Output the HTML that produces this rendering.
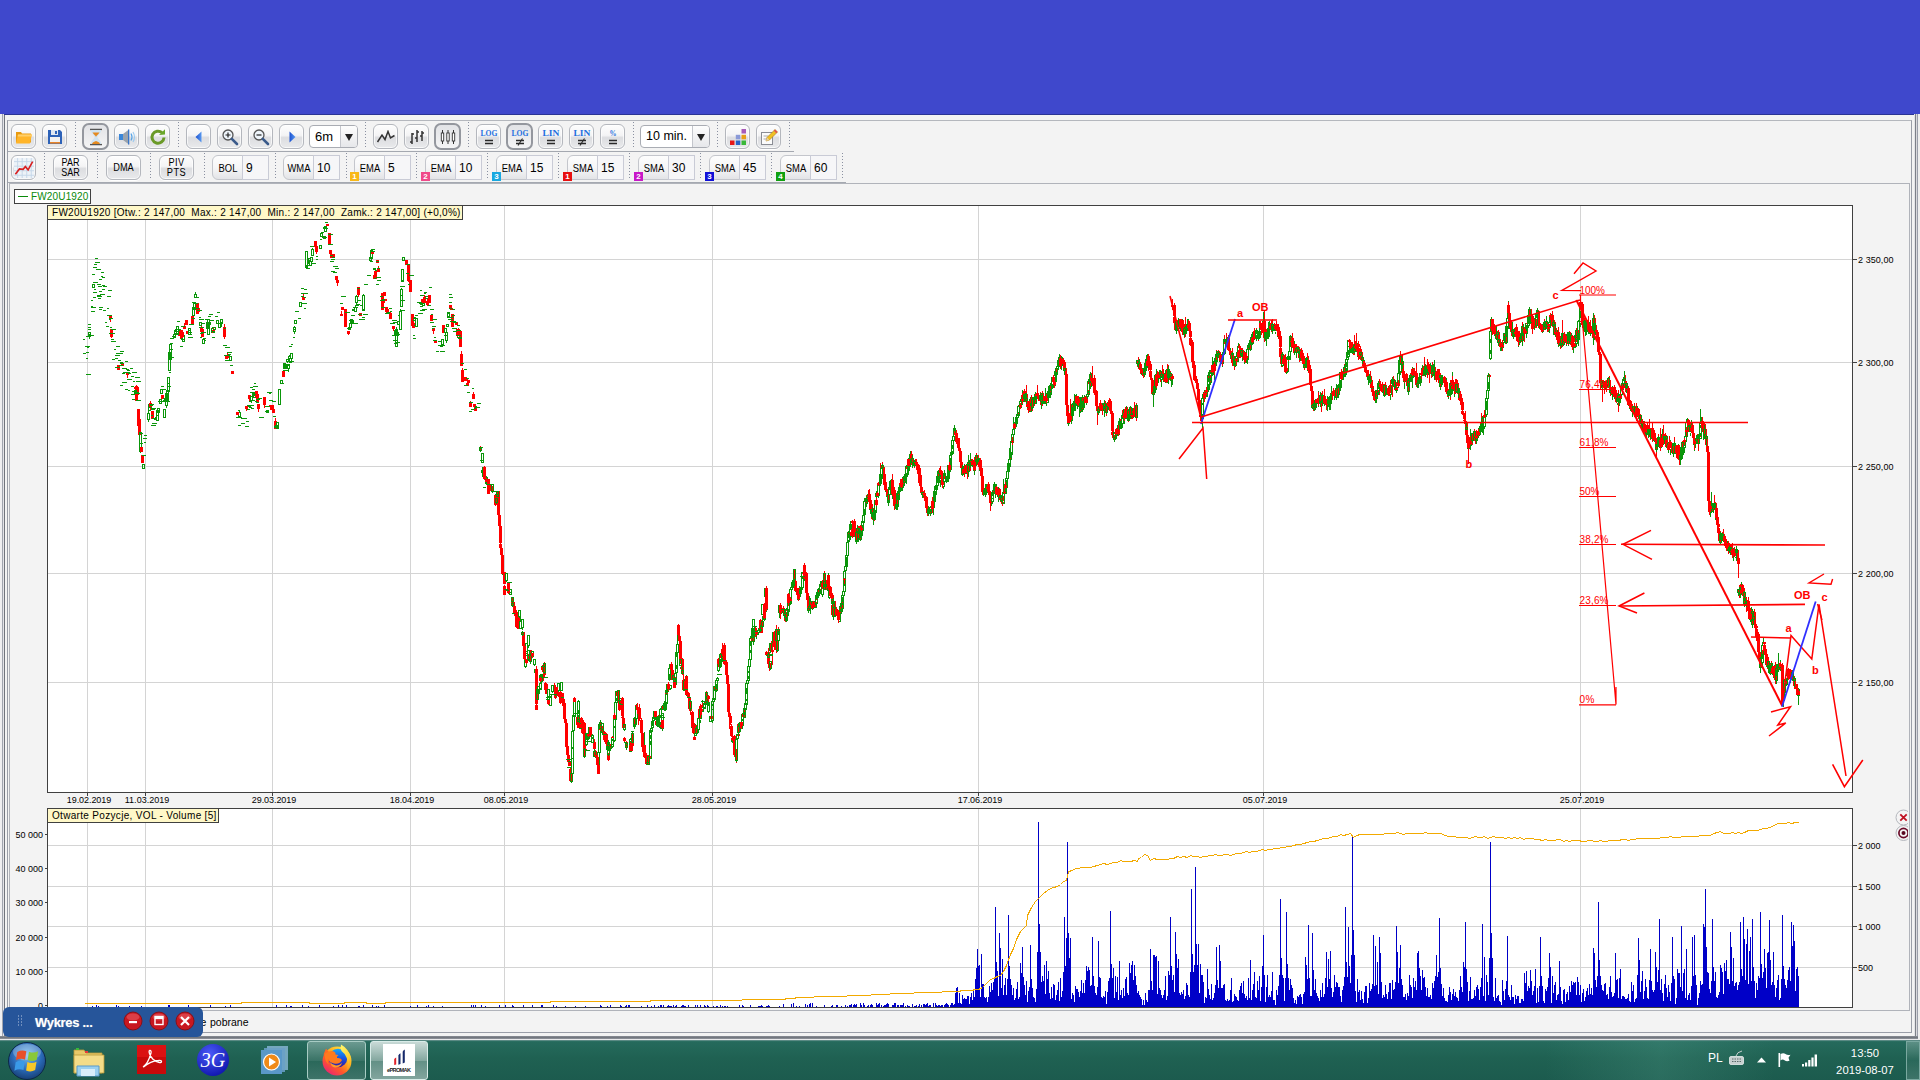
<!DOCTYPE html>
<html><head><meta charset="utf-8"><title>Wykres</title><style>
*{box-sizing:border-box;margin:0;padding:0}
html,body{width:1920px;height:1080px;overflow:hidden;background:#f3f3f3;font-family:"Liberation Sans",sans-serif;}
#root{position:relative;width:1920px;height:1080px;overflow:hidden;background:#f3f3f3}
.abs{position:absolute}
.top{left:0;top:0;width:1920px;height:114px;background:#3f48cc}
.chart{position:absolute;left:0;top:0}
.btn{position:absolute;height:25px;border:1px solid #b4b7bd;border-radius:6px;background:linear-gradient(#fdfdfd 0%,#f4f4f5 45%,#dcdde0 55%,#e9eaec 100%);box-shadow:0 1px 0 #fff, inset 0 0 0 1px rgba(255,255,255,.7)}
.btn.p{border:2px solid #94979e;background:linear-gradient(#e2e3e6,#f4f4f5);border-radius:7px;box-shadow:none}
.btn svg{position:absolute;left:50%;top:50%;transform:translate(-50%,-50%)}
.sep{position:absolute;width:1px;background:repeating-linear-gradient(#8a90a0 0,#8a90a0 1px,transparent 1px,transparent 3px)}
.tl{position:absolute;font-size:10px;line-height:10px;color:#000;text-align:center;white-space:nowrap}
.ind{position:absolute;height:25px;border:1px solid #c4c6cc;border-radius:6px 0 0 6px;background:linear-gradient(#fdfdfd 0%,#f6f6f7 50%,#e3e4e7 100%)}
.val{position:absolute;height:25px;border:1px solid #c9cbd6;border-left:1px solid #c9cbd6;background:#f6f6f8;font-size:12px;line-height:24.500px;padding-left:3px;color:#000}
.badge{position:absolute;width:9px;height:9px;color:#fff;font-size:8px;line-height:9px;text-align:center;font-weight:bold}
.combo{position:absolute;height:23px;border:1px solid #a9acb3;border-radius:4px;background:#fff;font-size:13px;line-height:21px;padding-left:5px;color:#000}
.combo i{position:absolute;right:0;top:0;bottom:0;width:17px;border-left:1px solid #c4c6cc;background:linear-gradient(#fdfdfd,#e6e7ea);border-radius:0 3px 3px 0}
.combo i:after{content:"";position:absolute;left:4px;top:8px;border:4px solid transparent;border-top:7px solid #222;border-bottom:0}
</style></head><body><div id="root"><div class="abs top"></div>
<div class="abs" style="left:7px;top:120px;width:1905px;height:913px;border:1px solid #9a9ea8;border-top-color:#b4b7bd"></div>
<div class="abs" style="left:8px;top:151px;width:786px;height:1px;background:#a4a8b0"></div>
<div class="abs" style="left:8px;top:182px;width:838px;height:1px;background:#a4a8b0"></div>
<div class="abs" style="left:9px;top:183px;width:1901px;height:828px;border:1px solid #b0b3ba"></div>
<div class="btn" style="left:11px;top:124px;width:25px;height:25px"><svg width="18" height="16" viewBox="0 0 18 16"><path d="M1 3h5l1 1.5h9v9H1z" fill="#e89a10"/><path d="M3 5.5h14l-2.2 9H1z" fill="#ffb52a"/><path d="M3 5.5h14l-.5 2H2.6z" fill="#ffcf6a"/></svg></div>
<div class="btn" style="left:42px;top:124px;width:25px;height:25px"><svg width="16" height="16" viewBox="0 0 16 16"><path d="M1 1h12l2 2v12H1z" fill="#2d62b8"/><rect x="4" y="1" width="7" height="5" fill="#dfe7f2"/><rect x="8" y="2" width="2" height="3" fill="#2d62b8"/><rect x="3" y="8" width="10" height="6" fill="#f1f1f1"/><rect x="3" y="13" width="10" height="1.6" fill="#e8852a"/></svg></div>
<div class="sep" style="left:75px;top:122px;height:27px"></div>
<div class="btn p" style="left:82px;top:123px;width:27px;height:27px"><svg width="14" height="17" viewBox="0 0 14 17"><rect x="1" y="0" width="12" height="1.6" fill="#555"/><rect x="1" y="15.4" width="12" height="1.6" fill="#555"/><path d="M2 1.6h10c0 4-3.5 5-3.5 6.9s3.5 2.9 3.5 6.9H2c0-4 3.5-5 3.5-6.9S2 5.600 2 1.600z" fill="#cfe3f2"/><path d="M3.500 4h7c-.8 2-3.500 3-3.500 4.500C7 7 4.300 6 3.500 4z" fill="#e58a20"/><path d="M3 15.400c.5-2 2.500-2.400 4-3 1.500.6 3.500 1 4 3z" fill="#e58a20"/></svg></div>
<div class="btn" style="left:114px;top:124px;width:25px;height:25px"><svg width="18" height="17" viewBox="0 0 18 17"><rect x="1" y="5.500" width="4" height="6" fill="#3a86d8"/><path d="M5 5.500l6-4.500v15l-6-4.500z" fill="#9aa3ad"/><path d="M10 1l1.300 0v15H10z" fill="#3a76c8"/><path d="M13 5q2 3.500 0 7" stroke="#5aa6e8" stroke-width="1.200" fill="none"/><path d="M15 3.500q3 5 0 10" stroke="#9ccbf0" stroke-width="1.100" fill="none"/></svg></div>
<div class="btn" style="left:145px;top:124px;width:25px;height:25px"><svg width="17" height="17" viewBox="0 0 17 17"><path d="M12.500 4.200A6 6 0 1 0 14.500 9" stroke="#6a9a28" stroke-width="3" fill="none"/><path d="M9.500 6.500l6-.5V.8z" fill="#6aa82a"/></svg></div>
<div class="sep" style="left:178px;top:122px;height:27px"></div>
<div class="btn" style="left:186px;top:124px;width:25px;height:25px"><svg width="12" height="14" viewBox="0 0 12 14"><defs><linearGradient id="ar" x1="0" y1="0" x2="1" y2="0"><stop offset="0" stop-color="#1a50d0"/><stop offset="1" stop-color="#5a9af0"/></linearGradient></defs><path d="M8.500 1.500v11L2.500 7z" fill="url(#ar)"/></svg></div>
<div class="btn" style="left:217px;top:124px;width:25px;height:25px"><svg width="18" height="18" viewBox="0 0 18 18"><circle cx="7" cy="7" r="5" fill="#eef4fa" stroke="#555" stroke-width="1.300"/><path d="M10.800 10.800l5.200 5.200" stroke="#3a5a8a" stroke-width="2.600" stroke-linecap="round"/><path d="M4.500 7h5M7 4.500v5" stroke="#222" stroke-width="1.200"/></svg></div>
<div class="btn" style="left:248px;top:124px;width:25px;height:25px"><svg width="18" height="18" viewBox="0 0 18 18"><circle cx="7" cy="7" r="5" fill="#eef4fa" stroke="#555" stroke-width="1.300"/><path d="M10.800 10.800l5.200 5.200" stroke="#3a5a8a" stroke-width="2.600" stroke-linecap="round"/><path d="M4.500 7h5" stroke="#222" stroke-width="1.200"/></svg></div>
<div class="btn" style="left:279px;top:124px;width:25px;height:25px"><svg width="12" height="14" viewBox="0 0 12 14"><path d="M3.500 1.500v11L9.500 7z" fill="url(#ar)"/></svg></div>
<div class="combo" style="left:309px;top:125px;width:49px">6m<i></i></div>
<div class="sep" style="left:365px;top:122px;height:27px"></div>
<div class="btn" style="left:373px;top:124px;width:25px;height:25px"><svg width="19" height="14" viewBox="0 0 19 14"><path d="M1 12l4.500-7 3 4.500 3-8 2.500 6.500 4-2.500" stroke="#333" stroke-width="1.500" fill="none"/></svg></div>
<div class="btn" style="left:404px;top:124px;width:25px;height:25px"><svg width="16" height="16" viewBox="0 0 16 16"><path d="M3 4v11M8 1v12M13 2v10M1 13h2M3 5h2M6 9h2M8 3h2M11 7h2M13 4h2" stroke="#333" stroke-width="1.500" fill="none"/></svg></div>
<div class="btn p" style="left:434px;top:123px;width:27px;height:27px"><svg width="16" height="16" viewBox="0 0 16 16"><path d="M2.500 1v14M8 1v14M13.500 1v14" stroke="#333" stroke-width="1"/><rect x="1.300" y="4" width="2.400" height="8" fill="#fff" stroke="#333" stroke-width=".9"/><rect x="6.800" y="4" width="2.400" height="8" fill="#fff" stroke="#333" stroke-width=".9"/><rect x="12.300" y="4" width="2.400" height="8" fill="#fff" stroke="#333" stroke-width=".9"/></svg></div>
<div class="sep" style="left:468px;top:122px;height:27px"></div>
<div class="btn" style="left:476px;top:124px;width:25px;height:25px"><svg width="20" height="20" viewBox="0 0 20 20"><text x="10" y="8.500" font-size="8.500" font-family="Liberation Serif,serif" font-weight="bold" text-anchor="middle" fill="#1f6fe0" textLength="17" lengthAdjust="spacingAndGlyphs">LOG</text><path d="M6 13.500h8M6 16.500h8" stroke="#2a2a2a" stroke-width="1.300"/></svg></div>
<div class="btn p" style="left:506px;top:123px;width:27px;height:27px"><svg width="20" height="20" viewBox="0 0 20 20"><text x="10" y="8.500" font-size="8.500" font-family="Liberation Serif,serif" font-weight="bold" text-anchor="middle" fill="#1f6fe0" textLength="17" lengthAdjust="spacingAndGlyphs">LOG</text><path d="M6 13.500h8M6 16.500h8" stroke="#2a2a2a" stroke-width="1.300"/><path d="M12.500 11.500l-4.500 7" stroke="#2a2a2a" stroke-width="1.100"/></svg></div>
<div class="btn" style="left:538px;top:124px;width:25px;height:25px"><svg width="20" height="20" viewBox="0 0 20 20"><text x="10" y="8.500" font-size="8.500" font-family="Liberation Serif,serif" font-weight="bold" text-anchor="middle" fill="#1f6fe0" textLength="17" lengthAdjust="spacingAndGlyphs">LIN</text><path d="M6 13.500h8M6 16.500h8" stroke="#2a2a2a" stroke-width="1.300"/></svg></div>
<div class="btn" style="left:569px;top:124px;width:25px;height:25px"><svg width="20" height="20" viewBox="0 0 20 20"><text x="10" y="8.500" font-size="8.500" font-family="Liberation Serif,serif" font-weight="bold" text-anchor="middle" fill="#1f6fe0" textLength="17" lengthAdjust="spacingAndGlyphs">LIN</text><path d="M6 13.500h8M6 16.500h8" stroke="#2a2a2a" stroke-width="1.300"/><path d="M12.500 11.500l-4.500 7" stroke="#2a2a2a" stroke-width="1.100"/></svg></div>
<div class="btn" style="left:600px;top:124px;width:25px;height:25px"><svg width="20" height="20" viewBox="0 0 20 20"><text x="10" y="8.500" font-size="8.500" font-family="Liberation Serif,serif" font-weight="bold" text-anchor="middle" fill="#1f6fe0" textLength="7" lengthAdjust="spacingAndGlyphs">%</text><path d="M6 13.500h8M6 16.500h8" stroke="#2a2a2a" stroke-width="1.300"/></svg></div>
<div class="sep" style="left:633px;top:122px;height:27px"></div>
<div class="combo" style="left:640px;top:125px;width:70px;font-size:12.500px">10 min.<i></i></div>
<div class="sep" style="left:717px;top:122px;height:27px"></div>
<div class="btn" style="left:725px;top:124px;width:25px;height:25px"><svg width="18" height="18" viewBox="0 0 18 18"><rect x="1" y="12.500" width="4.500" height="4.500" fill="#e81818"/><rect x="6.800" y="12.500" width="4.500" height="4.500" fill="#2a62c8"/><rect x="12.500" y="12.500" width="4.500" height="4.500" fill="#3ab83a"/><rect x="6.800" y="6.800" width="4.500" height="4.500" fill="#8a9ad8"/><rect x="12.500" y="6.800" width="4.500" height="4.500" fill="#e8a018"/><rect x="12.500" y="1" width="4.500" height="4.500" fill="#a85ab8"/></svg></div>
<div class="btn" style="left:756px;top:124px;width:25px;height:25px"><svg width="18" height="18" viewBox="0 0 18 18"><rect x="1.500" y="4.500" width="11" height="12" fill="#fbfbfb" stroke="#8a8d94"/><path d="M3.500 8h5M3.500 11h4" stroke="#aaa" stroke-width="1"/><path d="M6 13l1-3.500 8-8 2.500 2.500-8 8z" fill="#f0c020" stroke="#a87818" stroke-width=".6"/><path d="M15 1.500l2.500 2.500-1.200 1.200-2.500-2.500z" fill="#e05050"/><path d="M6 13l1-3.500 2.500 2.500z" fill="#e8d0a0"/></svg></div>
<div class="sep" style="left:789px;top:122px;height:27px"></div>
<div class="btn" style="left:11px;top:155px;width:25px;height:25px"><svg width="20" height="20" viewBox="0 0 22 22"><rect x="0" y="0" width="22" height="22" fill="#eef3f8"/><path d="M4 0v22M9 0v22M14 0v22M19 0v22M0 4h22M0 9h22M0 14h22M0 19h22" stroke="#c4d6e8" stroke-width="1"/><path d="M1.500 18l4.500-6 4 .5 2.500-3 3 3.500 5-9" stroke="#d82020" stroke-width="1.800" fill="none"/></svg></div>
<div class="sep" style="left:44px;top:153px;height:27px"></div>
<div class="btn" style="left:53px;top:155px;width:35px;height:25px"></div>
<div class="tl" style="left:53px;top:158px;width:35px;font-size:10px;line-height:9.500px;letter-spacing:0;transform:scaleX(.9)">PAR<br>SAR</div>
<div class="sep" style="left:97px;top:153px;height:27px"></div>
<div class="btn" style="left:106px;top:155px;width:35px;height:25px"></div>
<div class="tl" style="left:106px;top:163px;width:35px;font-size:10px;letter-spacing:0;transform:scaleX(.92)">DMA</div>
<div class="sep" style="left:150px;top:153px;height:27px"></div>
<div class="btn" style="left:159px;top:155px;width:35px;height:25px"></div>
<div class="tl" style="left:159px;top:158px;width:35px;font-size:10px;line-height:9.500px;letter-spacing:.5px;transform:scaleX(.92)">PIV<br>PTS</div>
<div class="sep" style="left:204px;top:153px;height:27px"></div>
<div class="ind" style="left:212px;top:155px;width:31px"></div><div class="val" style="left:242px;top:155px;width:27px">9</div><div class="tl" style="left:213px;top:163.5px;width:30px;font-size:10px;letter-spacing:0;transform:scaleX(.94)">BOL</div>
<div class="sep" style="left:275px;top:153px;height:27px"></div>
<div class="ind" style="left:283px;top:155px;width:31px"></div><div class="val" style="left:313px;top:155px;width:27px">10</div><div class="tl" style="left:284px;top:163.5px;width:30px;font-size:10px;letter-spacing:0;transform:scaleX(.94)">WMA</div>
<div class="sep" style="left:346px;top:153px;height:27px"></div>
<div class="ind" style="left:354px;top:155px;width:31px"></div><div class="val" style="left:384px;top:155px;width:27px">5</div><div class="tl" style="left:355px;top:163.5px;width:30px;font-size:10px;letter-spacing:0;transform:scaleX(.94)">EMA</div><div class="badge" style="left:350px;top:172px;background:#f8b818">1</div>
<div class="sep" style="left:416px;top:153px;height:27px"></div>
<div class="ind" style="left:425px;top:155px;width:31px"></div><div class="val" style="left:455px;top:155px;width:27px">10</div><div class="tl" style="left:426px;top:163.5px;width:30px;font-size:10px;letter-spacing:0;transform:scaleX(.94)">EMA</div><div class="badge" style="left:421px;top:172px;background:#f04a8a">2</div>
<div class="sep" style="left:487px;top:153px;height:27px"></div>
<div class="ind" style="left:496px;top:155px;width:31px"></div><div class="val" style="left:526px;top:155px;width:27px">15</div><div class="tl" style="left:497px;top:163.5px;width:30px;font-size:10px;letter-spacing:0;transform:scaleX(.94)">EMA</div><div class="badge" style="left:492px;top:172px;background:#18a8e0">3</div>
<div class="sep" style="left:558px;top:153px;height:27px"></div>
<div class="ind" style="left:567px;top:155px;width:31px"></div><div class="val" style="left:597px;top:155px;width:27px">15</div><div class="tl" style="left:568px;top:163.5px;width:30px;font-size:10px;letter-spacing:0;transform:scaleX(.94)">SMA</div><div class="badge" style="left:563px;top:172px;background:#e81010">1</div>
<div class="sep" style="left:629px;top:153px;height:27px"></div>
<div class="ind" style="left:638px;top:155px;width:31px"></div><div class="val" style="left:668px;top:155px;width:27px">30</div><div class="tl" style="left:639px;top:163.5px;width:30px;font-size:10px;letter-spacing:0;transform:scaleX(.94)">SMA</div><div class="badge" style="left:634px;top:172px;background:#c818c8">2</div>
<div class="sep" style="left:700px;top:153px;height:27px"></div>
<div class="ind" style="left:709px;top:155px;width:31px"></div><div class="val" style="left:739px;top:155px;width:27px">45</div><div class="tl" style="left:710px;top:163.5px;width:30px;font-size:10px;letter-spacing:0;transform:scaleX(.94)">SMA</div><div class="badge" style="left:705px;top:172px;background:#1010d8">3</div>
<div class="sep" style="left:771px;top:153px;height:27px"></div>
<div class="ind" style="left:780px;top:155px;width:31px"></div><div class="val" style="left:810px;top:155px;width:27px">60</div><div class="tl" style="left:781px;top:163.5px;width:30px;font-size:10px;letter-spacing:0;transform:scaleX(.94)">SMA</div><div class="badge" style="left:776px;top:172px;background:#10a010">4</div>
<div class="sep" style="left:842px;top:153px;height:27px"></div>
<svg class="chart" width="1920" height="1080" viewBox="0 0 1920 1080" font-family="Liberation Sans, sans-serif"><defs><clipPath id="cc"><rect x="48" y="206" width="1804" height="586"/></clipPath></defs><g shape-rendering="crispEdges"><rect x="47" y="205" width="1805" height="587" fill="#fff"/>
<rect x="47" y="808" width="1805" height="199" fill="#fff"/>
<path d="M87 205V792M87 808V1007M145 205V792M145 808V1007M272 205V792M272 808V1007M410 205V792M410 808V1007M504 205V792M504 808V1007M712 205V792M712 808V1007M978 205V792M978 808V1007M1263 205V792M1263 808V1007M1580 205V792M1580 808V1007M47 259H1852M47 362H1852M47 466H1852M47 573H1852M47 682H1852M47 845H1852M47 886H1852M47 926H1852M47 967H1852" stroke="#d4d4d4" stroke-width="1" fill="none" transform="translate(.5,.5)"/><g clip-path="url(#cc)"><path d="M89 332V332M89 336V338M88 332h2v4h-2z" fill="none" stroke="#0a960a" transform="translate(.5,.5)"/>
<path d="M93 284V284M93 287V287M92 284h2v3h-2z" fill="none" stroke="#0a960a" transform="translate(.5,.5)"/>
<path d="M110 315V322M111 329V338" stroke="#f00" fill="none" transform="translate(.5,0)"/>
<path d="M109 315h3v4h-3zM110 329h3v8h-3z" fill="#f00"/>
<path d="M118 365V370" stroke="#f00" fill="none" transform="translate(.5,0)"/>
<path d="M117 365h3v5h-3z" fill="#f00"/>
<path d="M122 364V366" stroke="#f00" fill="none" transform="translate(.5,0)"/>
<path d="M121 364h3v2h-3z" fill="#f00"/>
<path d="M127 373V378" stroke="#f00" fill="none" transform="translate(.5,0)"/>
<path d="M126 373h3v2h-3z" fill="#f00"/>
<path d="M135 387V389" stroke="#f00" fill="none" transform="translate(.5,0)"/>
<path d="M134 387h3v2h-3z" fill="#f00"/>
<path d="M136 385V401M137 387V397M138 409V426M139 419V434" stroke="#f00" fill="none" transform="translate(.5,0)"/>
<path d="M135 386h3v15h-3zM136 387h3v8h-3zM137 409h3v17h-3zM138 419h3v16h-3z" fill="#f00"/>
<path d="M140 432V432M140 450V452M143 464V464M143 468V468M139 432h2v19h-2zM142 464h2v4h-2z" fill="none" stroke="#0a960a" transform="translate(.5,.5)"/>
<path d="M141 447V452M142 455V463" stroke="#f00" fill="none" transform="translate(.5,0)"/>
<path d="M140 447h3v5h-3zM141 455h3v8h-3z" fill="#f00"/>
<path d="M148 410V413M148 419V421M149 402V404M149 410V410M147 413h2v6h-2zM148 404h2v6h-2z" fill="none" stroke="#0a960a" transform="translate(.5,.5)"/>
<path d="M150 401V410" stroke="#f00" fill="none" transform="translate(.5,0)"/>
<path d="M149 403h3v5h-3z" fill="#f00"/>
<path d="M152 411V419" stroke="#f00" fill="none" transform="translate(.5,0)"/>
<path d="M151 411h3v8h-3z" fill="#f00"/>
<path d="M157 410V410M157 420V420M158 407V408M158 412V412M156 410h2v10h-2zM157 408h2v4h-2z" fill="none" stroke="#0a960a" transform="translate(.5,.5)"/>
<path d="M162 395V399" stroke="#f00" fill="none" transform="translate(.5,0)"/>
<path d="M161 395h3v4h-3z" fill="#f00"/>
<path d="M160 398V399M160 403V403M161 388V389M161 393V393M159 399h2v4h-2zM160 389h2v4h-2z" fill="none" stroke="#0a960a" transform="translate(.5,.5)"/>
<path d="M164 409V409M164 417V417M165 398V398M165 401V401M166 393V393M166 404V407M167 390V390M167 401V401M163 409h2v8h-2zM164 398h2v3h-2zM165 393h2v12h-2zM166 390h2v10h-2z" fill="none" stroke="#0a960a" transform="translate(.5,.5)"/>
<path d="M168 377V377M168 391V391M169 352V352M169 370V370M170 344V344M170 359V359M167 377h2v14h-2zM168 352h2v18h-2zM169 344h2v15h-2z" fill="none" stroke="#0a960a" transform="translate(.5,.5)"/>
<path d="M174 334V334M174 337V337M175 330V330M175 334V334M173 334h2v3h-2zM174 330h2v4h-2z" fill="none" stroke="#0a960a" transform="translate(.5,.5)"/>
<path d="M179 329V336" stroke="#f00" fill="none" transform="translate(.5,0)"/>
<path d="M178 331h3v5h-3z" fill="#f00"/>
<path d="M177 326V326M177 334V334M176 326h2v8h-2z" fill="none" stroke="#0a960a" transform="translate(.5,.5)"/>
<path d="M183 335V335M183 341V341M182 335h2v6h-2z" fill="none" stroke="#0a960a" transform="translate(.5,.5)"/>
<path d="M181 330V339M182 332V337" stroke="#f00" fill="none" transform="translate(.5,0)"/>
<path d="M180 330h3v9h-3zM181 332h3v5h-3z" fill="#f00"/>
<path d="M184 323V329M186 320V325M187 331V334" stroke="#f00" fill="none" transform="translate(.5,0)"/>
<path d="M183 326h3v3h-3zM185 320h3v5h-3zM186 331h3v3h-3z" fill="#f00"/>
<path d="M189 328V328M189 334V334M188 328h2v6h-2z" fill="none" stroke="#0a960a" transform="translate(.5,.5)"/>
<path d="M192 316V324" stroke="#f00" fill="none" transform="translate(.5,0)"/>
<path d="M191 316h3v8h-3z" fill="#f00"/>
<path d="M193 307V307M193 315V315M194 302V303M194 309V309M195 291V294M195 297V297M192 307h2v8h-2zM193 303h2v6h-2zM194 294h2v3h-2z" fill="none" stroke="#0a960a" transform="translate(.5,.5)"/>
<path d="M197 303V314M198 308V312" stroke="#f00" fill="none" transform="translate(.5,0)"/>
<path d="M196 303h3v11h-3zM197 308h3v4h-3z" fill="#f00"/>
<path d="M201 326V332M202 329V337" stroke="#f00" fill="none" transform="translate(.5,0)"/>
<path d="M200 327h3v5h-3zM201 329h3v8h-3z" fill="#f00"/>
<path d="M200 322V322M200 325V325M203 339V339M203 343V343M199 322h2v3h-2zM202 339h2v4h-2z" fill="none" stroke="#0a960a" transform="translate(.5,.5)"/>
<path d="M207 322V322M207 328V328M206 322h2v6h-2z" fill="none" stroke="#0a960a" transform="translate(.5,.5)"/>
<path d="M208 319V319M208 334V334M209 322V322M209 324V324M207 319h2v15h-2zM208 322h2v2h-2z" fill="none" stroke="#0a960a" transform="translate(.5,.5)"/>
<path d="M212 326V328M212 332V332M214 327V327M214 329V329M211 328h2v4h-2zM213 327h2v2h-2z" fill="none" stroke="#0a960a" transform="translate(.5,.5)"/>
<path d="M213 328V333" stroke="#f00" fill="none" transform="translate(.5,0)"/>
<path d="M212 330h3v3h-3z" fill="#f00"/>
<path d="M217 320V320M217 323V323M219 323V323M219 327V327M216 320h2v3h-2zM218 323h2v4h-2z" fill="none" stroke="#0a960a" transform="translate(.5,.5)"/>
<path d="M221 318V319M221 323V326M220 319h2v4h-2z" fill="none" stroke="#0a960a" transform="translate(.5,.5)"/>
<path d="M224 324V339M226 355V359M227 352V358" stroke="#f00" fill="none" transform="translate(.5,0)"/>
<path d="M223 327h3v10h-3zM225 355h3v4h-3zM226 355h3v3h-3z" fill="#f00"/>
<path d="M230 356V356M230 360V360M229 356h2v4h-2z" fill="none" stroke="#0a960a" transform="translate(.5,.5)"/>
<path d="M232 371V374" stroke="#f00" fill="none" transform="translate(.5,0)"/>
<path d="M231 371h3v3h-3z" fill="#f00"/>
<path d="M239 410V412M239 416V416M238 412h2v4h-2z" fill="none" stroke="#0a960a" transform="translate(.5,.5)"/>
<path d="M237 412V415" stroke="#f00" fill="none" transform="translate(.5,0)"/>
<path d="M236 412h3v3h-3z" fill="#f00"/>
<path d="M246 406V411" stroke="#f00" fill="none" transform="translate(.5,0)"/>
<path d="M245 406h3v3h-3z" fill="#f00"/>
<path d="M249 395V401" stroke="#f00" fill="none" transform="translate(.5,0)"/>
<path d="M248 395h3v4h-3z" fill="#f00"/>
<path d="M251 396V396M251 400V402M250 396h2v4h-2z" fill="none" stroke="#0a960a" transform="translate(.5,.5)"/>
<path d="M253 392V392M253 395V397M254 392V392M254 397V397M255 392V392M255 394V394M252 392h2v3h-2zM253 392h2v5h-2zM254 392h2v2h-2z" fill="none" stroke="#0a960a" transform="translate(.5,.5)"/>
<path d="M256 391V397M257 394V402M258 404V412" stroke="#f00" fill="none" transform="translate(.5,0)"/>
<path d="M255 391h3v6h-3zM256 394h3v8h-3zM257 404h3v5h-3z" fill="#f00"/>
<path d="M264 397V408" stroke="#f00" fill="none" transform="translate(.5,0)"/>
<path d="M263 397h3v8h-3z" fill="#f00"/>
<path d="M267 410V410M267 412V412M266 410h2v2h-2z" fill="none" stroke="#0a960a" transform="translate(.5,.5)"/>
<path d="M270 405V408M271 407V410" stroke="#f00" fill="none" transform="translate(.5,0)"/>
<path d="M269 405h3v2h-3zM270 407h3v3h-3z" fill="#f00"/>
<path d="M272 405V409M273 409V413M275 418V429" stroke="#f00" fill="none" transform="translate(.5,0)"/>
<path d="M271 405h3v4h-3zM272 409h3v4h-3zM274 421h3v8h-3z" fill="#f00"/>
<path d="M276 425V425M276 427V427M277 421V422M277 428V428M279 389V389M279 404V404M275 425h2v2h-2zM276 422h2v6h-2zM278 389h2v15h-2z" fill="none" stroke="#0a960a" transform="translate(.5,.5)"/>
<path d="M283 371V377" stroke="#f00" fill="none" transform="translate(.5,0)"/>
<path d="M282 371h3v6h-3z" fill="#f00"/>
<path d="M281 380V380M281 383V383M280 380h2v3h-2z" fill="none" stroke="#0a960a" transform="translate(.5,.5)"/>
<path d="M284 363V364M284 368V368M285 364V365M285 367V367M286 364V364M286 368V368M287 359V359M287 361V362M283 364h2v4h-2zM284 365h2v2h-2zM285 364h2v4h-2zM286 359h2v2h-2z" fill="none" stroke="#0a960a" transform="translate(.5,.5)"/>
<path d="M288 364V364M288 368V371M289 354V356M289 358V361M291 353V353M291 358V360M287 364h2v4h-2zM288 356h2v2h-2zM290 353h2v5h-2z" fill="none" stroke="#0a960a" transform="translate(.5,.5)"/>
<path d="M294 325V327M294 331V333M295 320V320M295 323V323M293 327h2v4h-2zM294 320h2v3h-2z" fill="none" stroke="#0a960a" transform="translate(.5,.5)"/>
<path d="M300 302V302M300 306V306M299 302h2v4h-2z" fill="none" stroke="#0a960a" transform="translate(.5,.5)"/>
<path d="M303 294V300" stroke="#f00" fill="none" transform="translate(.5,0)"/>
<path d="M302 297h3v3h-3z" fill="#f00"/>
<path d="M306 251V251M306 267V267M305 251h2v16h-2z" fill="none" stroke="#0a960a" transform="translate(.5,.5)"/>
<path d="M308 258V260M308 262V263M309 258V258M309 261V261M310 260V261M310 265V265M311 257V257M311 261V264M307 260h2v2h-2zM308 258h2v3h-2zM309 261h2v4h-2zM310 257h2v4h-2z" fill="none" stroke="#0a960a" transform="translate(.5,.5)"/>
<path d="M315 241V247" stroke="#f00" fill="none" transform="translate(.5,0)"/>
<path d="M314 241h3v6h-3z" fill="#f00"/>
<path d="M312 247V249M312 255V255M311 249h2v6h-2z" fill="none" stroke="#0a960a" transform="translate(.5,.5)"/>
<path d="M316 246V254" stroke="#f00" fill="none" transform="translate(.5,0)"/>
<path d="M315 246h3v6h-3z" fill="#f00"/>
<path d="M320 245V245M320 248V248M321 233V233M321 236V236M319 245h2v3h-2zM320 233h2v3h-2z" fill="none" stroke="#0a960a" transform="translate(.5,.5)"/>
<path d="M325 226V226M325 231V231M324 226h2v5h-2z" fill="none" stroke="#0a960a" transform="translate(.5,.5)"/>
<path d="M327 224V226" stroke="#f00" fill="none" transform="translate(.5,0)"/>
<path d="M326 224h3v2h-3z" fill="#f00"/>
<path d="M329 233V245M330 250V254M331 252V258" stroke="#f00" fill="none" transform="translate(.5,0)"/>
<path d="M328 233h3v12h-3zM329 250h3v4h-3zM330 254h3v4h-3z" fill="#f00"/>
<path d="M333 254V258" stroke="#f00" fill="none" transform="translate(.5,0)"/>
<path d="M332 254h3v4h-3z" fill="#f00"/>
<path d="M336 276V280M337 280V286" stroke="#f00" fill="none" transform="translate(.5,0)"/>
<path d="M335 276h3v4h-3zM336 280h3v3h-3z" fill="#f00"/>
<path d="M341 311V316M342 307V310" stroke="#f00" fill="none" transform="translate(.5,0)"/>
<path d="M340 314h3v2h-3zM341 307h3v3h-3z" fill="#f00"/>
<path d="M345 309V327" stroke="#f00" fill="none" transform="translate(.5,0)"/>
<path d="M344 309h3v18h-3z" fill="#f00"/>
<path d="M349 326V327M349 329V329M350 322V323M350 327V327M351 320V320M351 323V323M348 327h2v2h-2zM349 323h2v4h-2zM350 320h2v3h-2z" fill="none" stroke="#0a960a" transform="translate(.5,.5)"/>
<path d="M348 331V335" stroke="#f00" fill="none" transform="translate(.5,0)"/>
<path d="M347 331h3v3h-3z" fill="#f00"/>
<path d="M352 320V320M352 323V323M355 304V307M355 311V311M351 320h2v3h-2zM354 307h2v4h-2z" fill="none" stroke="#0a960a" transform="translate(.5,.5)"/>
<path d="M356 294V296M356 302V305M355 296h2v6h-2z" fill="none" stroke="#0a960a" transform="translate(.5,.5)"/>
<path d="M358 287V297" stroke="#f00" fill="none" transform="translate(.5,0)"/>
<path d="M357 287h3v8h-3z" fill="#f00"/>
<path d="M360 313V316" stroke="#f00" fill="none" transform="translate(.5,0)"/>
<path d="M359 313h3v3h-3z" fill="#f00"/>
<path d="M363 293V295M363 310V310M362 295h2v15h-2z" fill="none" stroke="#0a960a" transform="translate(.5,.5)"/>
<path d="M370 255V257M370 260V260M371 250V250M371 258V260M369 257h2v3h-2zM370 250h2v8h-2z" fill="none" stroke="#0a960a" transform="translate(.5,.5)"/>
<path d="M372 251V254M374 275V279M375 269V279" stroke="#f00" fill="none" transform="translate(.5,0)"/>
<path d="M371 251h3v3h-3zM373 275h3v4h-3zM374 271h3v8h-3z" fill="#f00"/>
<path d="M377 260V263M378 266V272" stroke="#f00" fill="none" transform="translate(.5,0)"/>
<path d="M376 260h3v3h-3zM377 269h3v3h-3z" fill="#f00"/>
<path d="M382 293V310M383 301V303" stroke="#f00" fill="none" transform="translate(.5,0)"/>
<path d="M381 293h3v17h-3zM382 301h3v2h-3z" fill="#f00"/>
<path d="M384 292V296M385 299V301M386 307V314M387 309V314" stroke="#f00" fill="none" transform="translate(.5,0)"/>
<path d="M383 292h3v4h-3zM384 299h3v2h-3zM385 307h3v5h-3zM386 309h3v5h-3z" fill="#f00"/>
<path d="M390 311V319" stroke="#f00" fill="none" transform="translate(.5,0)"/>
<path d="M389 313h3v6h-3z" fill="#f00"/>
<path d="M393 326V331" stroke="#f00" fill="none" transform="translate(.5,0)"/>
<path d="M392 326h3v3h-3z" fill="#f00"/>
<path d="M395 329V330M395 335V338M394 330h2v5h-2z" fill="none" stroke="#0a960a" transform="translate(.5,.5)"/>
<path d="M396 326V329M396 346V346M397 332V332M397 335V335M398 321V321M398 324V324M395 329h2v17h-2zM396 332h2v3h-2zM397 321h2v3h-2z" fill="none" stroke="#0a960a" transform="translate(.5,.5)"/>
<path d="M400 308V311M400 328V328M401 287V289M401 305V305M402 269V269M402 281V281M403 257V257M403 260V260M399 311h2v18h-2zM400 289h2v17h-2zM401 269h2v12h-2zM402 257h2v3h-2z" fill="none" stroke="#0a960a" transform="translate(.5,.5)"/>
<path d="M406 260V265" stroke="#f00" fill="none" transform="translate(.5,0)"/>
<path d="M405 260h3v5h-3z" fill="#f00"/>
<path d="M408 264V282M410 280V292" stroke="#f00" fill="none" transform="translate(.5,0)"/>
<path d="M407 264h3v17h-3zM409 280h3v12h-3z" fill="#f00"/>
<path d="M412 314V327M413 323V328" stroke="#f00" fill="none" transform="translate(.5,0)"/>
<path d="M411 314h3v12h-3zM412 323h3v5h-3z" fill="#f00"/>
<path d="M416 318V318M416 326V326M415 318h2v8h-2z" fill="none" stroke="#0a960a" transform="translate(.5,.5)"/>
<path d="M423 301V301M423 305V305M422 301h2v4h-2z" fill="none" stroke="#0a960a" transform="translate(.5,.5)"/>
<path d="M422 299V303" stroke="#f00" fill="none" transform="translate(.5,0)"/>
<path d="M421 299h3v4h-3z" fill="#f00"/>
<path d="M424 295V303M427 298V306" stroke="#f00" fill="none" transform="translate(.5,0)"/>
<path d="M423 297h3v6h-3zM426 301h3v4h-3z" fill="#f00"/>
<path d="M429 295V303M431 315V321" stroke="#f00" fill="none" transform="translate(.5,0)"/>
<path d="M428 295h3v8h-3zM430 315h3v6h-3z" fill="#f00"/>
<path d="M433 328V334M435 340V343" stroke="#f00" fill="none" transform="translate(.5,0)"/>
<path d="M432 328h3v3h-3zM434 340h3v3h-3z" fill="#f00"/>
<path d="M443 325V333" stroke="#f00" fill="none" transform="translate(.5,0)"/>
<path d="M442 325h3v8h-3z" fill="#f00"/>
<path d="M442 339V339M442 344V344M441 339h2v5h-2z" fill="none" stroke="#0a960a" transform="translate(.5,.5)"/>
<path d="M445 328V328M445 332V332M446 332V332M446 340V342M447 324V324M447 326V326M444 328h2v4h-2zM445 332h2v8h-2zM446 324h2v2h-2z" fill="none" stroke="#0a960a" transform="translate(.5,.5)"/>
<path d="M450 305V309M451 308V310" stroke="#f00" fill="none" transform="translate(.5,0)"/>
<path d="M449 305h3v4h-3zM450 308h3v2h-3z" fill="#f00"/>
<path d="M448 313V313M448 316V316M447 313h2v3h-2z" fill="none" stroke="#0a960a" transform="translate(.5,.5)"/>
<path d="M452 314V327M454 321V323" stroke="#f00" fill="none" transform="translate(.5,0)"/>
<path d="M451 314h3v13h-3zM453 321h3v2h-3z" fill="#f00"/>
<path d="M456 322V325M457 329V338M458 328V335" stroke="#f00" fill="none" transform="translate(.5,0)"/>
<path d="M455 322h3v3h-3zM456 329h3v6h-3zM457 329h3v6h-3z" fill="#f00"/>
<path d="M460 331V347M461 351V366M462 368V382" stroke="#f00" fill="none" transform="translate(.5,0)"/>
<path d="M459 331h3v16h-3zM460 354h3v12h-3zM461 370h3v12h-3z" fill="#f00"/>
<path d="M465 377V381M466 378V381M467 383V385" stroke="#f00" fill="none" transform="translate(.5,0)"/>
<path d="M464 377h3v4h-3zM465 378h3v3h-3zM466 383h3v2h-3z" fill="#f00"/>
<path d="M468 380V386M470 401V407" stroke="#f00" fill="none" transform="translate(.5,0)"/>
<path d="M467 380h3v3h-3zM469 403h3v4h-3z" fill="#f00"/>
<path d="M473 392V399M474 404V409M475 408V411" stroke="#f00" fill="none" transform="translate(.5,0)"/>
<path d="M472 394h3v5h-3zM473 404h3v3h-3zM474 408h3v3h-3z" fill="#f00"/>
<path d="M480 446V451" stroke="#f00" fill="none" transform="translate(.5,0)"/>
<path d="M479 447h3v3h-3z" fill="#f00"/>
<path d="M480 448V448M480 450V451M482 452V453M482 462V462M482 469V470M482 472V473M483 467V467M483 477V477M479 448h2v2h-2zM481 453h2v9h-2zM481 470h2v2h-2zM482 467h2v9h-2z" fill="none" stroke="#0a960a" transform="translate(.5,.5)"/>
<path d="M486 475V477M486 483V484M486 479V479M486 482V484M485 477h2v6h-2zM485 479h2v3h-2z" fill="none" stroke="#0a960a" transform="translate(.5,.5)"/>
<path d="M484 466V480M486 478V482" stroke="#f00" fill="none" transform="translate(.5,0)"/>
<path d="M483 467h3v12h-3zM485 480h3v2h-3z" fill="#f00"/>
<path d="M488 481V492M488 485V494M488 479V486M490 484V490M491 484V492" stroke="#f00" fill="none" transform="translate(.5,0)"/>
<path d="M487 482h3v9h-3zM487 486h3v8h-3zM487 479h3v6h-3zM489 484h3v6h-3zM490 486h3v5h-3z" fill="#f00"/>
<path d="M492 483V484M492 491V492M491 484h2v7h-2z" fill="none" stroke="#0a960a" transform="translate(.5,.5)"/>
<path d="M495 495V506" stroke="#f00" fill="none" transform="translate(.5,0)"/>
<path d="M494 495h3v10h-3z" fill="#f00"/>
<path d="M496 495V502M498 491V501M498 500V507M498 507V515M499 515V526" stroke="#f00" fill="none" transform="translate(.5,0)"/>
<path d="M495 496h3v6h-3zM497 491h3v9h-3zM497 500h3v7h-3zM497 507h3v8h-3zM498 515h3v11h-3z" fill="#f00"/>
<path d="M496 497V498M496 502V503M497 490V491M497 496V496M495 498h2v4h-2zM496 491h2v5h-2z" fill="none" stroke="#0a960a" transform="translate(.5,.5)"/>
<path d="M503 570V572M503 574V574M502 572h2v2h-2z" fill="none" stroke="#0a960a" transform="translate(.5,.5)"/>
<path d="M500 524V537M500 535V544M500 544V549M501 547V557M502 555V560M502 558V565M502 563V574" stroke="#f00" fill="none" transform="translate(.5,0)"/>
<path d="M499 526h3v10h-3zM499 535h3v8h-3zM499 544h3v4h-3zM500 548h3v7h-3zM501 555h3v5h-3zM501 559h3v5h-3zM501 564h3v10h-3z" fill="#f00"/>
<path d="M504 572V584M504 585V590M504 588V595" stroke="#f00" fill="none" transform="translate(.5,0)"/>
<path d="M503 572h3v12h-3zM503 586h3v3h-3zM503 589h3v6h-3z" fill="#f00"/>
<path d="M506 573V573M506 580V581M505 573h2v7h-2z" fill="none" stroke="#0a960a" transform="translate(.5,.5)"/>
<path d="M510 589V589M510 592V592M510 592V592M510 595V595M509 589h2v3h-2zM509 592h2v2h-2z" fill="none" stroke="#0a960a" transform="translate(.5,.5)"/>
<path d="M508 582V594" stroke="#f00" fill="none" transform="translate(.5,0)"/>
<path d="M507 583h3v10h-3z" fill="#f00"/>
<path d="M512 597V606M513 602V606M514 606V616" stroke="#f00" fill="none" transform="translate(.5,0)"/>
<path d="M511 597h3v8h-3zM512 602h3v4h-3zM513 606h3v8h-3z" fill="#f00"/>
<path d="M512 596V597M512 601V602M512 601V603M512 605V606M511 597h2v4h-2zM511 603h2v2h-2z" fill="none" stroke="#0a960a" transform="translate(.5,.5)"/>
<path d="M518 615V616M518 628V628M519 610V610M519 620V621M517 616h2v12h-2zM518 610h2v10h-2z" fill="none" stroke="#0a960a" transform="translate(.5,.5)"/>
<path d="M516 610V620M516 617V628M517 622V629M518 617V628" stroke="#f00" fill="none" transform="translate(.5,0)"/>
<path d="M515 612h3v7h-3zM515 617h3v10h-3zM516 622h3v6h-3zM517 618h3v11h-3z" fill="#f00"/>
<path d="M523 632V646" stroke="#f00" fill="none" transform="translate(.5,0)"/>
<path d="M522 632h3v14h-3z" fill="#f00"/>
<path d="M520 621V621M520 629V629M522 618V619M522 627V629M522 630V632M522 634V635M519 621h2v7h-2zM521 619h2v8h-2zM521 632h2v2h-2z" fill="none" stroke="#0a960a" transform="translate(.5,.5)"/>
<path d="M525 659V659M525 666V667M526 643V643M526 652V653M524 659h2v7h-2zM525 643h2v8h-2z" fill="none" stroke="#0a960a" transform="translate(.5,.5)"/>
<path d="M524 645V649M524 648V656M524 650V660M526 659V664" stroke="#f00" fill="none" transform="translate(.5,0)"/>
<path d="M523 646h3v2h-3zM523 648h3v2h-3zM523 650h3v9h-3zM525 659h3v4h-3z" fill="#f00"/>
<path d="M528 654V659M530 650V656M530 650V664" stroke="#f00" fill="none" transform="translate(.5,0)"/>
<path d="M527 654h3v5h-3zM529 650h3v6h-3zM529 652h3v9h-3z" fill="#f00"/>
<path d="M528 650V650M528 659V660M528 634V635M528 645V647M530 653V654M530 661V663M531 652V653M531 656V656M527 650h2v9h-2zM527 635h2v10h-2zM529 654h2v7h-2zM530 653h2v2h-2z" fill="none" stroke="#0a960a" transform="translate(.5,.5)"/>
<path d="M532 651V651M532 656V656M534 658V659M534 664V665M535 668V669M535 671V671M531 651h2v5h-2zM533 659h2v5h-2zM534 669h2v3h-2z" fill="none" stroke="#0a960a" transform="translate(.5,.5)"/>
<path d="M532 653V658" stroke="#f00" fill="none" transform="translate(.5,0)"/>
<path d="M531 653h3v3h-3z" fill="#f00"/>
<path d="M536 666V672M536 672V704M536 704V710" stroke="#f00" fill="none" transform="translate(.5,0)"/>
<path d="M535 669h3v4h-3zM535 672h3v32h-3zM535 705h3v5h-3z" fill="#f00"/>
<path d="M537 689V689M537 699V699M538 686V686M538 693V698M536 689h2v10h-2zM537 686h2v7h-2z" fill="none" stroke="#0a960a" transform="translate(.5,.5)"/>
<path d="M540 681V683M540 687V688M540 674V675M540 678V679M541 673V674M541 681V682M539 683h2v5h-2zM539 675h2v2h-2zM540 674h2v7h-2z" fill="none" stroke="#0a960a" transform="translate(.5,.5)"/>
<path d="M540 677V682M542 665V670M542 668V670M543 668V681" stroke="#f00" fill="none" transform="translate(.5,0)"/>
<path d="M539 678h3v3h-3zM541 666h3v3h-3zM541 669h3v1h-3zM542 670h3v2h-3z" fill="#f00"/>
<path d="M544 662V677M545 682V691M546 683V694M546 691V694" stroke="#f00" fill="none" transform="translate(.5,0)"/>
<path d="M543 663h3v12h-3zM544 683h3v7h-3zM545 684h3v8h-3zM545 692h3v2h-3z" fill="#f00"/>
<path d="M544 663V663M544 672V673M543 663h2v9h-2z" fill="none" stroke="#0a960a" transform="translate(.5,.5)"/>
<path d="M548 688V689M548 700V701M550 693V694M550 705V705M547 689h2v11h-2zM549 694h2v11h-2z" fill="none" stroke="#0a960a" transform="translate(.5,.5)"/>
<path d="M548 700V705" stroke="#f00" fill="none" transform="translate(.5,0)"/>
<path d="M547 700h3v4h-3z" fill="#f00"/>
<path d="M554 683V688M555 687V699" stroke="#f00" fill="none" transform="translate(.5,0)"/>
<path d="M553 685h3v2h-3zM554 687h3v11h-3z" fill="#f00"/>
<path d="M552 684V685M552 691V692M551 685h2v6h-2z" fill="none" stroke="#0a960a" transform="translate(.5,.5)"/>
<path d="M556 690V691M556 695V696M558 683V683M558 691V692M559 689V690M559 693V696M555 691h2v4h-2zM557 683h2v7h-2zM558 690h2v3h-2z" fill="none" stroke="#0a960a" transform="translate(.5,.5)"/>
<path d="M556 687V696M556 691V695M558 693V697M558 692V697" stroke="#f00" fill="none" transform="translate(.5,0)"/>
<path d="M555 687h3v8h-3zM555 691h3v2h-3zM557 693h3v3h-3zM557 692h3v2h-3z" fill="#f00"/>
<path d="M560 691V704M560 696V703M560 693V699M562 693V698M562 695V701M563 699V707" stroke="#f00" fill="none" transform="translate(.5,0)"/>
<path d="M559 692h3v10h-3zM559 698h3v5h-3zM559 694h3v5h-3zM561 693h3v4h-3zM561 697h3v2h-3zM562 699h3v7h-3z" fill="#f00"/>
<path d="M561 682V682M561 690V690M560 682h2v8h-2z" fill="none" stroke="#0a960a" transform="translate(.5,.5)"/>
<path d="M564 703V703M564 706V709M563 703h2v3h-2z" fill="none" stroke="#0a960a" transform="translate(.5,.5)"/>
<path d="M564 703V716M564 715V719M565 719V724M566 723V730M566 728V741M566 739V748M567 744V756" stroke="#f00" fill="none" transform="translate(.5,0)"/>
<path d="M563 703h3v12h-3zM563 715h3v4h-3zM564 719h3v4h-3zM565 723h3v6h-3zM565 729h3v11h-3zM565 740h3v7h-3zM566 746h3v9h-3z" fill="#f00"/>
<path d="M568 753V763M569 762V766M570 768V779M570 773V782" stroke="#f00" fill="none" transform="translate(.5,0)"/>
<path d="M567 755h3v7h-3zM568 762h3v4h-3zM569 769h3v8h-3zM569 775h3v6h-3z" fill="#f00"/>
<path d="M571 773V773M571 781V782M570 773h2v8h-2z" fill="none" stroke="#0a960a" transform="translate(.5,.5)"/>
<path d="M572 757V758M572 773V774M572 746V747M572 758V758M572 731V731M572 747V748M573 714V715M573 731V741M574 697V698M574 715V718M571 758h2v15h-2zM571 747h2v11h-2zM571 731h2v16h-2zM572 715h2v15h-2zM573 698h2v18h-2z" fill="none" stroke="#0a960a" transform="translate(.5,.5)"/>
<path d="M574 697V702" stroke="#f00" fill="none" transform="translate(.5,0)"/>
<path d="M573 698h3v4h-3z" fill="#f00"/>
<path d="M577 716V728M579 718V729" stroke="#f00" fill="none" transform="translate(.5,0)"/>
<path d="M576 717h3v8h-3zM578 719h3v9h-3z" fill="#f00"/>
<path d="M578 699V701M578 710V713M578 714V716M578 719V719M578 710V711M578 720V721M577 701h2v9h-2zM577 716h2v3h-2zM577 711h2v10h-2z" fill="none" stroke="#0a960a" transform="translate(.5,.5)"/>
<path d="M580 717V718M580 722V723M582 722V722M582 728V728M579 718h2v4h-2zM581 722h2v6h-2z" fill="none" stroke="#0a960a" transform="translate(.5,.5)"/>
<path d="M581 717V723M582 723V734M583 720V726" stroke="#f00" fill="none" transform="translate(.5,0)"/>
<path d="M580 718h3v5h-3zM581 723h3v10h-3zM582 722h3v2h-3z" fill="#f00"/>
<path d="M584 723V756M585 748V751" stroke="#f00" fill="none" transform="translate(.5,0)"/>
<path d="M583 723h3v32h-3zM584 749h3v2h-3z" fill="#f00"/>
<path d="M584 747V749M584 756V757M586 733V733M586 744V745M587 733V733M587 739V739M583 749h2v7h-2zM585 733h2v11h-2zM586 733h2v6h-2z" fill="none" stroke="#0a960a" transform="translate(.5,.5)"/>
<path d="M588 734V734M588 739V739M589 727V727M589 733V735M587 734h2v4h-2zM588 727h2v6h-2z" fill="none" stroke="#0a960a" transform="translate(.5,.5)"/>
<path d="M588 734V737M590 727V735M590 734V737" stroke="#f00" fill="none" transform="translate(.5,0)"/>
<path d="M587 734h3v2h-3zM589 727h3v8h-3zM589 735h3v1h-3z" fill="#f00"/>
<path d="M594 739V749M594 753V756M595 750V758" stroke="#f00" fill="none" transform="translate(.5,0)"/>
<path d="M593 742h3v7h-3zM593 753h3v2h-3zM594 751h3v6h-3z" fill="#f00"/>
<path d="M592 733V735M592 737V738M592 734V735M592 741V742M594 748V751M594 755V755M591 735h2v2h-2zM591 735h2v7h-2zM593 751h2v5h-2z" fill="none" stroke="#0a960a" transform="translate(.5,.5)"/>
<path d="M596 752V755M596 757V758M598 750V752M598 773V773M599 722V724M599 752V754M595 755h2v2h-2zM597 752h2v21h-2zM598 724h2v28h-2z" fill="none" stroke="#0a960a" transform="translate(.5,.5)"/>
<path d="M596 753V758M597 757V765M598 763V770M598 767V774" stroke="#f00" fill="none" transform="translate(.5,0)"/>
<path d="M595 755h3v2h-3zM596 757h3v8h-3zM597 765h3v4h-3zM597 769h3v5h-3z" fill="#f00"/>
<path d="M600 723V731M601 725V730M602 729V735M603 729V734" stroke="#f00" fill="none" transform="translate(.5,0)"/>
<path d="M599 724h3v6h-3zM600 726h3v4h-3zM601 729h3v4h-3zM602 731h3v3h-3z" fill="#f00"/>
<path d="M600 719V722M600 724V725M600 721V722M600 729V729M602 722V723M602 729V729M602 729V729M602 732V733M599 722h2v2h-2zM599 722h2v6h-2zM601 723h2v6h-2zM601 729h2v3h-2z" fill="none" stroke="#0a960a" transform="translate(.5,.5)"/>
<path d="M606 732V734M606 739V741M607 743V743M607 750V750M605 734h2v5h-2zM606 743h2v6h-2z" fill="none" stroke="#0a960a" transform="translate(.5,.5)"/>
<path d="M604 732V742M606 733V744M606 741V746" stroke="#f00" fill="none" transform="translate(.5,0)"/>
<path d="M603 732h3v8h-3zM605 734h3v8h-3zM605 742h3v2h-3z" fill="#f00"/>
<path d="M608 753V761M609 744V747M610 745V750" stroke="#f00" fill="none" transform="translate(.5,0)"/>
<path d="M607 754h3v6h-3zM608 744h3v2h-3zM609 746h3v2h-3z" fill="#f00"/>
<path d="M608 739V742M608 749V750M608 741V744M608 754V755M610 745V746M610 748V750M607 742h2v8h-2zM607 744h2v10h-2zM609 746h2v2h-2z" fill="none" stroke="#0a960a" transform="translate(.5,.5)"/>
<path d="M612 736V737M612 746V747M612 738V740M612 745V745M614 726V726M614 740V741M614 713V715M614 726V727M615 699V702M615 718V720M611 737h2v9h-2zM611 740h2v4h-2zM613 726h2v14h-2zM613 715h2v12h-2zM614 702h2v17h-2z" fill="none" stroke="#0a960a" transform="translate(.5,.5)"/>
<path d="M612 736V738M614 713V719" stroke="#f00" fill="none" transform="translate(.5,0)"/>
<path d="M611 737h3v1h-3zM613 715h3v4h-3z" fill="#f00"/>
<path d="M617 690V696M618 695V698M618 696V702M619 699V711" stroke="#f00" fill="none" transform="translate(.5,0)"/>
<path d="M616 691h3v5h-3zM617 696h3v2h-3zM617 697h3v4h-3zM618 701h3v9h-3z" fill="#f00"/>
<path d="M616 698V699M616 702V703M616 698V698M616 699V699M616 690V691M616 698V700M618 689V690M618 701V701M615 699h2v3h-2zM615 698h2v1h-2zM615 691h2v7h-2zM617 690h2v10h-2z" fill="none" stroke="#0a960a" transform="translate(.5,.5)"/>
<path d="M620 697V698M620 703V703M619 698h2v5h-2z" fill="none" stroke="#0a960a" transform="translate(.5,.5)"/>
<path d="M622 697V709M622 708V717M622 712V718M623 716V728" stroke="#f00" fill="none" transform="translate(.5,0)"/>
<path d="M621 698h3v10h-3zM621 708h3v8h-3zM621 717h3v1h-3zM622 718h3v10h-3z" fill="#f00"/>
<path d="M624 737V742M626 741V748" stroke="#f00" fill="none" transform="translate(.5,0)"/>
<path d="M623 738h3v3h-3zM625 742h3v5h-3z" fill="#f00"/>
<path d="M624 723V724M624 729V730M626 741V743M626 747V748M626 745V745M626 748V749M623 724h2v5h-2zM625 743h2v4h-2zM625 745h2v2h-2z" fill="none" stroke="#0a960a" transform="translate(.5,.5)"/>
<path d="M630 741V741M630 745V747M630 737V739M630 751V751M629 741h2v5h-2zM629 739h2v12h-2z" fill="none" stroke="#0a960a" transform="translate(.5,.5)"/>
<path d="M630 745V751M631 741V751" stroke="#f00" fill="none" transform="translate(.5,0)"/>
<path d="M629 745h3v6h-3zM630 742h3v9h-3z" fill="#f00"/>
<path d="M632 734V748M634 717V725" stroke="#f00" fill="none" transform="translate(.5,0)"/>
<path d="M631 735h3v11h-3zM633 722h3v3h-3z" fill="#f00"/>
<path d="M632 731V733M632 743V743M634 716V718M634 726V728M634 716V718M634 724V725M631 733h2v9h-2zM633 718h2v8h-2zM633 718h2v6h-2z" fill="none" stroke="#0a960a" transform="translate(.5,.5)"/>
<path d="M636 703V705M636 718V724M638 706V708M638 716V717M635 705h2v13h-2zM637 708h2v8h-2z" fill="none" stroke="#0a960a" transform="translate(.5,.5)"/>
<path d="M636 705V707M637 703V711M638 709V712M638 710V725M639 704V721" stroke="#f00" fill="none" transform="translate(.5,0)"/>
<path d="M635 705h3v1h-3zM636 707h3v3h-3zM637 710h3v2h-3zM637 712h3v2h-3zM638 708h3v11h-3z" fill="#f00"/>
<path d="M641 718V734M642 732V740M642 739V748M642 743V747M643 746V752" stroke="#f00" fill="none" transform="translate(.5,0)"/>
<path d="M640 720h3v13h-3zM641 733h3v7h-3zM641 740h3v5h-3zM641 745h3v2h-3zM642 747h3v5h-3z" fill="#f00"/>
<path d="M644 731V745M644 754V756M645 753V754M645 757V758M646 755V755M646 763V764M643 745h2v9h-2zM644 754h2v3h-2zM645 755h2v8h-2z" fill="none" stroke="#0a960a" transform="translate(.5,.5)"/>
<path d="M644 745V750M644 749V758M646 754V764M646 753V757" stroke="#f00" fill="none" transform="translate(.5,0)"/>
<path d="M643 745h3v4h-3zM643 749h3v8h-3zM645 755h3v9h-3zM645 755h3v2h-3z" fill="#f00"/>
<path d="M648 755V763M648 762V765M649 752V761" stroke="#f00" fill="none" transform="translate(.5,0)"/>
<path d="M647 757h3v5h-3zM647 762h3v1h-3zM648 756h3v2h-3z" fill="#f00"/>
<path d="M648 755V756M648 763V764M650 741V741M650 758V758M650 731V732M650 741V744M650 730V730M650 735V738M651 726V728M651 730V731M647 756h2v8h-2zM649 741h2v17h-2zM649 732h2v9h-2zM649 730h2v5h-2zM650 728h2v3h-2z" fill="none" stroke="#0a960a" transform="translate(.5,.5)"/>
<path d="M652 723V724M652 728V731M652 721V722M652 724V725M652 720V721M652 722V724M653 716V717M653 721V721M654 710V711M654 717V718M651 724h2v3h-2zM651 722h2v2h-2zM651 721h2v2h-2zM652 717h2v3h-2zM653 711h2v7h-2z" fill="none" stroke="#0a960a" transform="translate(.5,.5)"/>
<path d="M655 711V718" stroke="#f00" fill="none" transform="translate(.5,0)"/>
<path d="M654 711h3v6h-3z" fill="#f00"/>
<path d="M656 715V720M656 721V726M658 715V726M659 722V728" stroke="#f00" fill="none" transform="translate(.5,0)"/>
<path d="M655 717h3v2h-3zM655 721h3v4h-3zM657 716h3v8h-3zM658 724h3v3h-3z" fill="#f00"/>
<path d="M656 716V717M656 719V719M657 716V717M657 725V725M658 720V722M658 726V726M658 715V716M658 721V724M655 717h2v2h-2zM656 717h2v8h-2zM657 722h2v4h-2zM657 716h2v5h-2z" fill="none" stroke="#0a960a" transform="translate(.5,.5)"/>
<path d="M660 721V724M660 727V728M660 707V709M660 715V716M662 712V713M662 728V730M662 704V706M662 709V709M659 724h2v3h-2zM659 709h2v6h-2zM661 713h2v15h-2zM661 706h2v3h-2z" fill="none" stroke="#0a960a" transform="translate(.5,.5)"/>
<path d="M662 720V729M663 704V710" stroke="#f00" fill="none" transform="translate(.5,0)"/>
<path d="M661 720h3v8h-3zM662 706h3v3h-3z" fill="#f00"/>
<path d="M664 705V710M664 701V710M666 688V695" stroke="#f00" fill="none" transform="translate(.5,0)"/>
<path d="M663 706h3v3h-3zM663 703h3v6h-3zM665 690h3v5h-3z" fill="#f00"/>
<path d="M664 700V703M664 709V710M665 693V702M665 709V710M666 694V694M666 702V703M666 687V690M666 692V693M667 683V684M667 691V692M663 703h2v6h-2zM664 702h2v7h-2zM665 694h2v9h-2zM665 690h2v2h-2zM666 684h2v7h-2z" fill="none" stroke="#0a960a" transform="translate(.5,.5)"/>
<path d="M668 684V685M668 688V690M669 663V668M669 679V680M670 685V685M670 688V689M670 672V674M670 677V679M667 685h2v4h-2zM668 668h2v11h-2zM669 685h2v3h-2zM669 674h2v4h-2z" fill="none" stroke="#0a960a" transform="translate(.5,.5)"/>
<path d="M668 682V691M668 683V688M671 662V670" stroke="#f00" fill="none" transform="translate(.5,0)"/>
<path d="M667 684h3v5h-3zM667 685h3v2h-3zM670 664h3v6h-3z" fill="#f00"/>
<path d="M672 666V680M674 674V688" stroke="#f00" fill="none" transform="translate(.5,0)"/>
<path d="M671 670h3v10h-3zM673 677h3v11h-3z" fill="#f00"/>
<path d="M673 674V675M673 678V680M674 676V678M674 680V681M675 670V673M675 678V679M672 675h2v4h-2zM673 678h2v3h-2zM674 673h2v5h-2z" fill="none" stroke="#0a960a" transform="translate(.5,.5)"/>
<path d="M676 664V666M676 673V684M676 652V655M676 666V668M676 651V652M676 655V656M677 641V644M677 652V652M678 636V637M678 644V645M678 625V625M678 637V640M675 666h2v6h-2zM675 655h2v12h-2zM675 652h2v3h-2zM676 644h2v8h-2zM677 637h2v7h-2zM677 625h2v11h-2z" fill="none" stroke="#0a960a" transform="translate(.5,.5)"/>
<path d="M678 624V637M679 633V642" stroke="#f00" fill="none" transform="translate(.5,0)"/>
<path d="M677 625h3v10h-3zM678 636h3v5h-3z" fill="#f00"/>
<path d="M680 640V656M680 652V664M682 658V675M683 672V691" stroke="#f00" fill="none" transform="translate(.5,0)"/>
<path d="M679 641h3v12h-3zM679 653h3v9h-3zM681 659h3v13h-3zM682 680h3v10h-3z" fill="#f00"/>
<path d="M680 659V659M680 666V668M682 666V670M682 673V673M679 659h2v6h-2zM681 670h2v3h-2z" fill="none" stroke="#0a960a" transform="translate(.5,.5)"/>
<path d="M684 682V684M684 690V690M684 678V681M684 684V686M686 685V686M686 688V689M686 674V676M686 683V686M687 690V693M687 694V695M683 684h2v6h-2zM683 681h2v3h-2zM685 686h2v2h-2zM685 676h2v8h-2zM686 693h2v2h-2z" fill="none" stroke="#0a960a" transform="translate(.5,.5)"/>
<path d="M685 680V689M686 676V695" stroke="#f00" fill="none" transform="translate(.5,0)"/>
<path d="M684 681h3v7h-3zM685 676h3v19h-3z" fill="#f00"/>
<path d="M688 692V699M688 696V699M689 696V710M690 698V708M690 706V715" stroke="#f00" fill="none" transform="translate(.5,0)"/>
<path d="M687 693h3v3h-3zM687 696h3v2h-3zM688 698h3v11h-3zM689 701h3v6h-3zM689 706h3v5h-3z" fill="#f00"/>
<path d="M690 699V701M690 708V710M689 701h2v7h-2z" fill="none" stroke="#0a960a" transform="translate(.5,.5)"/>
<path d="M692 722V723M692 727V730M694 731V731M694 733V734M694 723V724M694 730V731M695 724V725M695 736V738M691 723h2v4h-2zM693 731h2v2h-2zM693 724h2v6h-2zM694 725h2v10h-2z" fill="none" stroke="#0a960a" transform="translate(.5,.5)"/>
<path d="M692 711V720M692 715V730M693 722V734M694 736V740" stroke="#f00" fill="none" transform="translate(.5,0)"/>
<path d="M691 712h3v6h-3zM691 718h3v9h-3zM692 723h3v10h-3zM693 737h3v3h-3z" fill="#f00"/>
<path d="M696 725V733M699 708V720" stroke="#f00" fill="none" transform="translate(.5,0)"/>
<path d="M695 725h3v8h-3zM698 709h3v10h-3z" fill="#f00"/>
<path d="M696 725V728M696 733V735M698 718V718M698 728V732M695 728h2v5h-2zM697 718h2v11h-2z" fill="none" stroke="#0a960a" transform="translate(.5,.5)"/>
<path d="M700 705V706M700 719V722M702 699V705M702 711V711M699 706h2v12h-2zM701 705h2v6h-2z" fill="none" stroke="#0a960a" transform="translate(.5,.5)"/>
<path d="M700 704V710M701 709V715M702 703V707" stroke="#f00" fill="none" transform="translate(.5,0)"/>
<path d="M699 706h3v3h-3zM700 709h3v2h-3zM701 705h3v3h-3z" fill="#f00"/>
<path d="M704 702V704M706 691V703" stroke="#f00" fill="none" transform="translate(.5,0)"/>
<path d="M703 703h3v1h-3zM705 692h3v11h-3z" fill="#f00"/>
<path d="M704 702V703M704 707V708M705 699V701M705 704V706M706 691V692M706 701V701M707 695V696M707 698V700M703 703h2v5h-2zM704 701h2v3h-2zM705 692h2v9h-2zM706 696h2v2h-2z" fill="none" stroke="#0a960a" transform="translate(.5,.5)"/>
<path d="M708 702V704M708 711V712M708 701V702M708 704V705M710 715V716M710 721V721M707 704h2v7h-2zM707 702h2v1h-2zM709 716h2v5h-2z" fill="none" stroke="#0a960a" transform="translate(.5,.5)"/>
<path d="M708 695V702M711 715V721" stroke="#f00" fill="none" transform="translate(.5,0)"/>
<path d="M707 696h3v3h-3zM710 716h3v3h-3z" fill="#f00"/>
<path d="M715 685V692" stroke="#f00" fill="none" transform="translate(.5,0)"/>
<path d="M714 686h3v4h-3z" fill="#f00"/>
<path d="M712 704V704M712 720V722M712 704V705M712 709V709M712 699V701M712 705V705M713 696V698M713 701V703M714 689V690M714 698V701M714 686V686M714 690V690M711 704h2v16h-2zM711 705h2v4h-2zM711 701h2v4h-2zM712 698h2v3h-2zM713 690h2v9h-2zM713 686h2v3h-2z" fill="none" stroke="#0a960a" transform="translate(.5,.5)"/>
<path d="M716 683V684M716 690V691M716 678V680M716 684V688M717 676V678M717 680V681M718 658V659M718 670V671M715 684h2v6h-2zM715 680h2v4h-2zM716 678h2v2h-2zM717 659h2v11h-2z" fill="none" stroke="#0a960a" transform="translate(.5,.5)"/>
<path d="M718 658V667M719 663V667" stroke="#f00" fill="none" transform="translate(.5,0)"/>
<path d="M717 659h3v5h-3zM718 664h3v2h-3z" fill="#f00"/>
<path d="M721 652V659M722 643V657M723 654V657" stroke="#f00" fill="none" transform="translate(.5,0)"/>
<path d="M720 654h3v4h-3zM721 649h3v6h-3zM722 655h3v2h-3z" fill="#f00"/>
<path d="M720 658V660M720 666V667M720 652V654M720 661V666M722 656V656M722 658V661M719 660h2v6h-2zM719 654h2v7h-2zM721 656h2v2h-2z" fill="none" stroke="#0a960a" transform="translate(.5,.5)"/>
<path d="M724 644V645M724 656V656M725 658V662M725 663V664M723 645h2v11h-2zM724 662h2v2h-2z" fill="none" stroke="#0a960a" transform="translate(.5,.5)"/>
<path d="M724 643V665M726 660V665M726 662V672M726 667V678M727 673V686" stroke="#f00" fill="none" transform="translate(.5,0)"/>
<path d="M723 645h3v19h-3zM725 662h3v2h-3zM725 663h3v6h-3zM725 669h3v6h-3zM726 675h3v9h-3z" fill="#f00"/>
<path d="M728 683V694M728 691V702M728 700V716M729 712V729M730 716V724M730 718V725M731 724V737" stroke="#f00" fill="none" transform="translate(.5,0)"/>
<path d="M727 684h3v9h-3zM727 692h3v8h-3zM727 700h3v12h-3zM728 713h3v4h-3zM729 716h3v5h-3zM729 721h3v2h-3zM730 726h3v10h-3z" fill="#f00"/>
<path d="M732 736V738M732 740V742M733 736V736M733 741V742M731 738h2v3h-2zM732 736h2v5h-2z" fill="none" stroke="#0a960a" transform="translate(.5,.5)"/>
<path d="M732 736V741M734 735V747M734 742V749M734 745V757" stroke="#f00" fill="none" transform="translate(.5,0)"/>
<path d="M731 738h3v2h-3zM733 736h3v9h-3zM733 745h3v2h-3zM733 747h3v8h-3z" fill="#f00"/>
<path d="M736 749V763M738 732V737M738 724V733M739 722V729" stroke="#f00" fill="none" transform="translate(.5,0)"/>
<path d="M735 749h3v10h-3zM737 734h3v2h-3zM737 724h3v8h-3zM738 726h3v2h-3z" fill="#f00"/>
<path d="M736 738V739M736 759V761M737 734V734M737 739V740M738 722V726M738 732V734M735 739h2v21h-2zM736 734h2v4h-2zM737 726h2v6h-2z" fill="none" stroke="#0a960a" transform="translate(.5,.5)"/>
<path d="M740 721V722M740 728V731M742 719V719M742 725V728M742 712V714M742 719V720M739 722h2v6h-2zM741 719h2v6h-2zM741 714h2v5h-2z" fill="none" stroke="#0a960a" transform="translate(.5,.5)"/>
<path d="M741 722V729M743 713V718" stroke="#f00" fill="none" transform="translate(.5,0)"/>
<path d="M740 722h3v4h-3zM742 714h3v3h-3z" fill="#f00"/>
<path d="M744 704V716" stroke="#f00" fill="none" transform="translate(.5,0)"/>
<path d="M743 708h3v4h-3z" fill="#f00"/>
<path d="M744 707V708M744 717V717M744 708V709M744 712V714M745 702V703M745 709V710M746 699V699M746 703V705M746 687V690M746 699V700M746 680V683M746 690V693M747 673V680M747 683V686M743 708h2v9h-2zM743 709h2v3h-2zM744 703h2v6h-2zM745 699h2v5h-2zM745 690h2v9h-2zM745 683h2v7h-2zM746 680h2v3h-2z" fill="none" stroke="#0a960a" transform="translate(.5,.5)"/>
<path d="M748 675V677M748 680V681M748 670V671M748 677V678M748 666V666M748 671V672M749 658V659M749 666V667M750 649V650M750 659V661M750 640V644M750 650V652M750 636V638M750 644V645M751 635V636M751 638V639M747 677h2v3h-2zM747 671h2v6h-2zM747 666h2v5h-2zM748 659h2v7h-2zM749 650h2v9h-2zM749 644h2v6h-2zM749 638h2v6h-2zM750 636h2v2h-2z" fill="none" stroke="#0a960a" transform="translate(.5,.5)"/>
<path d="M752 628V639M752 631V642M754 629V634M755 627V637" stroke="#f00" fill="none" transform="translate(.5,0)"/>
<path d="M751 628h3v11h-3zM751 631h3v10h-3zM753 631h3v3h-3zM754 628h3v7h-3z" fill="#f00"/>
<path d="M752 628V628M752 637V639M753 618V619M753 641V644M751 628h2v9h-2zM752 619h2v22h-2z" fill="none" stroke="#0a960a" transform="translate(.5,.5)"/>
<path d="M756 631V632M756 634V638M757 631V632M757 634V634M758 629V630M758 632V634M759 626V628M759 630V631M755 632h2v2h-2zM756 632h2v2h-2zM757 630h2v2h-2zM758 628h2v2h-2z" fill="none" stroke="#0a960a" transform="translate(.5,.5)"/>
<path d="M756 631V636" stroke="#f00" fill="none" transform="translate(.5,0)"/>
<path d="M755 632h3v2h-3z" fill="#f00"/>
<path d="M760 619V632M761 624V633M762 618V625" stroke="#f00" fill="none" transform="translate(.5,0)"/>
<path d="M759 620h3v10h-3zM760 625h3v8h-3zM761 621h3v2h-3z" fill="#f00"/>
<path d="M760 624V629M760 630V631M762 615V621M762 626V627M762 604V604M762 615V617M759 629h2v1h-2zM761 621h2v5h-2zM761 604h2v10h-2z" fill="none" stroke="#0a960a" transform="translate(.5,.5)"/>
<path d="M764 608V609M764 618V620M764 604V605M764 609V612M765 588V588M765 596V597M766 607V607M766 609V611M767 652V652M767 655V656M763 609h2v10h-2zM763 605h2v4h-2zM764 588h2v8h-2zM765 607h2v2h-2zM766 652h2v3h-2z" fill="none" stroke="#0a960a" transform="translate(.5,.5)"/>
<path d="M764 603V619M766 586V611M766 651V655" stroke="#f00" fill="none" transform="translate(.5,0)"/>
<path d="M763 604h3v14h-3zM765 588h3v21h-3zM765 652h3v3h-3z" fill="#f00"/>
<path d="M768 652V660M768 648V668M769 663V671M771 641V651" stroke="#f00" fill="none" transform="translate(.5,0)"/>
<path d="M767 652h3v4h-3zM767 654h3v10h-3zM768 663h3v5h-3zM770 643h3v7h-3z" fill="#f00"/>
<path d="M768 651V654M768 656V657M770 660V661M770 668V669M770 643V643M770 650V652M767 654h2v3h-2zM769 661h2v7h-2zM769 643h2v7h-2z" fill="none" stroke="#0a960a" transform="translate(.5,.5)"/>
<path d="M773 631V632M773 642V645M775 635V638M775 643V644M772 632h2v10h-2zM774 638h2v6h-2z" fill="none" stroke="#0a960a" transform="translate(.5,.5)"/>
<path d="M772 649V665M774 631V642M774 635V647M774 643V650" stroke="#f00" fill="none" transform="translate(.5,0)"/>
<path d="M771 650h3v2h-3zM773 632h3v9h-3zM773 641h3v4h-3zM773 645h3v2h-3z" fill="#f00"/>
<path d="M776 625V646M776 640V653M778 627V634" stroke="#f00" fill="none" transform="translate(.5,0)"/>
<path d="M775 629h3v12h-3zM775 640h3v10h-3zM777 629h3v2h-3z" fill="#f00"/>
<path d="M776 628V629M776 640V645M777 639V640M777 650V651M778 630V631M778 640V641M778 628V629M778 631V634M779 604V605M779 612V617M775 629h2v11h-2zM776 640h2v10h-2zM777 631h2v9h-2zM777 629h2v2h-2zM778 605h2v7h-2z" fill="none" stroke="#0a960a" transform="translate(.5,.5)"/>
<path d="M780 610V611M780 613V614M780 606V609M780 611V612M782 608V608M782 610V612M779 611h2v2h-2zM779 609h2v2h-2zM781 608h2v2h-2z" fill="none" stroke="#0a960a" transform="translate(.5,.5)"/>
<path d="M780 603V619M781 607V612M783 606V610" stroke="#f00" fill="none" transform="translate(.5,0)"/>
<path d="M779 605h3v8h-3zM780 609h3v2h-3zM782 608h3v1h-3z" fill="#f00"/>
<path d="M784 608V615M785 610V622M786 612V619M787 607V613" stroke="#f00" fill="none" transform="translate(.5,0)"/>
<path d="M783 610h3v4h-3zM784 613h3v8h-3zM785 613h3v4h-3zM786 609h3v2h-3z" fill="#f00"/>
<path d="M784 609V613M784 614V617M786 612V613M786 620V621M786 607V609M786 617V619M783 613h2v2h-2zM785 613h2v7h-2zM785 609h2v8h-2z" fill="none" stroke="#0a960a" transform="translate(.5,.5)"/>
<path d="M788 609V609M788 611V615M788 601V602M788 609V610M790 599V599M790 603V604M790 588V589M790 601V603M791 586V587M791 589V590M787 609h2v2h-2zM787 602h2v7h-2zM789 599h2v4h-2zM789 589h2v12h-2zM790 587h2v2h-2z" fill="none" stroke="#0a960a" transform="translate(.5,.5)"/>
<path d="M788 593V606M790 597V601" stroke="#f00" fill="none" transform="translate(.5,0)"/>
<path d="M787 594h3v9h-3zM789 599h3v2h-3z" fill="#f00"/>
<path d="M792 580V585M794 582V585M794 569V581M795 578V592" stroke="#f00" fill="none" transform="translate(.5,0)"/>
<path d="M791 582h3v3h-3zM793 582h3v2h-3zM793 569h3v12h-3zM794 581h3v10h-3z" fill="#f00"/>
<path d="M792 583V586M792 587V588M792 579V582M792 586V586M793 577V582M793 585V587M794 569V569M794 579V582M791 586h2v1h-2zM791 582h2v4h-2zM792 582h2v3h-2zM793 569h2v10h-2z" fill="none" stroke="#0a960a" transform="translate(.5,.5)"/>
<path d="M796 585V588M796 591V591M797 590V590M797 591V596M798 587V588M798 590V592M798 593V594M798 599V600M799 585V588M799 594V596M795 588h2v3h-2zM796 590h2v1h-2zM797 588h2v2h-2zM797 594h2v5h-2zM798 588h2v6h-2z" fill="none" stroke="#0a960a" transform="translate(.5,.5)"/>
<path d="M796 586V595M798 588V601" stroke="#f00" fill="none" transform="translate(.5,0)"/>
<path d="M795 588h3v3h-3zM797 588h3v11h-3z" fill="#f00"/>
<path d="M800 588V594M803 570V575" stroke="#f00" fill="none" transform="translate(.5,0)"/>
<path d="M799 588h3v5h-3zM802 572h3v2h-3z" fill="#f00"/>
<path d="M800 589V591M800 593V595M800 586V589M800 591V596M801 585V587M801 589V592M802 575V577M802 587V589M802 571V572M802 577V578M799 591h2v2h-2zM799 589h2v2h-2zM800 587h2v1h-2zM801 577h2v10h-2zM801 572h2v5h-2z" fill="none" stroke="#0a960a" transform="translate(.5,.5)"/>
<path d="M804 564V565M804 578V580M805 573V573M805 575V578M803 565h2v13h-2zM804 573h2v2h-2z" fill="none" stroke="#0a960a" transform="translate(.5,.5)"/>
<path d="M804 565V579M804 563V576M806 572V585M806 580V589M806 586V593M807 592V604" stroke="#f00" fill="none" transform="translate(.5,0)"/>
<path d="M803 567h3v11h-3zM803 565h3v10h-3zM805 573h3v10h-3zM805 583h3v6h-3zM805 589h3v4h-3zM806 593h3v7h-3z" fill="#f00"/>
<path d="M808 599V604M808 600V610M810 600V607M811 603V607" stroke="#f00" fill="none" transform="translate(.5,0)"/>
<path d="M807 600h3v2h-3zM807 602h3v8h-3zM809 601h3v2h-3zM810 604h3v2h-3z" fill="#f00"/>
<path d="M808 608V608M808 610V612M809 595V606M809 608V609M810 597V601M810 605V613M807 608h2v2h-2zM808 606h2v2h-2zM809 601h2v4h-2z" fill="none" stroke="#0a960a" transform="translate(.5,.5)"/>
<path d="M812 600V604M812 606V609M812 603V603M812 608V609M814 600V602M814 607V607M811 604h2v2h-2zM811 603h2v5h-2zM813 602h2v5h-2z" fill="none" stroke="#0a960a" transform="translate(.5,.5)"/>
<path d="M812 602V609M813 601V606M814 604V607M815 598V604" stroke="#f00" fill="none" transform="translate(.5,0)"/>
<path d="M811 604h3v4h-3zM812 603h3v3h-3zM813 605h3v2h-3zM814 602h3v1h-3z" fill="#f00"/>
<path d="M816 593V600M818 589V594M818 591V598M819 588V596" stroke="#f00" fill="none" transform="translate(.5,0)"/>
<path d="M815 595h3v4h-3zM817 592h3v2h-3zM817 593h3v1h-3zM818 589h3v1h-3z" fill="#f00"/>
<path d="M816 591V595M816 603V607M816 593V596M816 599V599M817 590V592M817 596V597M818 587V589M818 594V595M815 595h2v8h-2zM815 596h2v2h-2zM816 592h2v5h-2zM817 589h2v6h-2z" fill="none" stroke="#0a960a" transform="translate(.5,.5)"/>
<path d="M820 584V586M820 590V593M820 580V584M820 586V586M821 580V582M821 586V587M822 582V583M822 593V596M819 586h2v4h-2zM819 584h2v2h-2zM820 582h2v4h-2zM821 583h2v11h-2z" fill="none" stroke="#0a960a" transform="translate(.5,.5)"/>
<path d="M822 580V586M822 584V588M823 583V590" stroke="#f00" fill="none" transform="translate(.5,0)"/>
<path d="M821 583h3v2h-3zM821 585h3v2h-3zM822 587h3v2h-3z" fill="#f00"/>
<path d="M824 571V590M825 580V590M826 580V589M826 585V590M826 582V587" stroke="#f00" fill="none" transform="translate(.5,0)"/>
<path d="M823 573h3v11h-3zM824 581h3v3h-3zM825 585h3v2h-3zM825 587h3v2h-3zM825 583h3v3h-3z" fill="#f00"/>
<path d="M824 572V573M824 589V589M824 581V581M824 584V586M827 583V584M827 586V590M823 573h2v16h-2zM823 581h2v3h-2zM826 584h2v2h-2z" fill="none" stroke="#0a960a" transform="translate(.5,.5)"/>
<path d="M828 572V575M828 583V585M829 586V587M829 597V598M830 591V592M830 594V596M831 593V595M831 597V597M827 575h2v8h-2zM828 587h2v10h-2zM829 592h2v2h-2zM830 595h2v2h-2z" fill="none" stroke="#0a960a" transform="translate(.5,.5)"/>
<path d="M828 584V589M828 575V590M830 586V596M830 591V598" stroke="#f00" fill="none" transform="translate(.5,0)"/>
<path d="M827 584h3v1h-3zM827 575h3v13h-3zM829 587h3v7h-3zM829 592h3v4h-3z" fill="#f00"/>
<path d="M832 593V605M832 602V617M834 601V613M834 611V616" stroke="#f00" fill="none" transform="translate(.5,0)"/>
<path d="M831 595h3v8h-3zM831 605h3v10h-3zM833 601h3v12h-3zM833 613h3v3h-3z" fill="#f00"/>
<path d="M832 598V599M832 603V608M833 597V601M833 616V619M835 607V609M835 615V616M831 599h2v4h-2zM832 601h2v15h-2zM834 609h2v6h-2z" fill="none" stroke="#0a960a" transform="translate(.5,.5)"/>
<path d="M837 610V612M837 614V614M838 614V616M838 618V619M839 610V612M839 620V621M836 612h2v2h-2zM837 616h2v2h-2zM838 612h2v9h-2z" fill="none" stroke="#0a960a" transform="translate(.5,.5)"/>
<path d="M836 607V613M836 611V616M838 610V620M838 612V623" stroke="#f00" fill="none" transform="translate(.5,0)"/>
<path d="M835 609h3v3h-3zM835 612h3v2h-3zM837 612h3v7h-3zM837 615h3v5h-3z" fill="#f00"/>
<path d="M840 603V611M840 608V613M842 600V608" stroke="#f00" fill="none" transform="translate(.5,0)"/>
<path d="M839 606h3v2h-3zM839 608h3v3h-3zM841 601h3v2h-3z" fill="#f00"/>
<path d="M840 602V606M840 612V616M841 605V609M841 611V613M842 596V601M842 609V609M842 592V595M842 603V604M843 589V591M843 595V602M839 606h2v5h-2zM840 609h2v2h-2zM841 601h2v7h-2zM841 595h2v8h-2zM842 591h2v4h-2z" fill="none" stroke="#0a960a" transform="translate(.5,.5)"/>
<path d="M844 579V579M844 591V594M844 570V571M844 581V585M845 562V566M845 571V575M846 556V564M846 566V569M846 557V559M846 564V567M846 554V555M846 559V561M847 541V542M847 555V556M843 579h2v12h-2zM843 571h2v10h-2zM844 566h2v4h-2zM845 564h2v2h-2zM845 559h2v6h-2zM845 555h2v4h-2zM846 542h2v13h-2z" fill="none" stroke="#0a960a" transform="translate(.5,.5)"/>
<path d="M844 578V584" stroke="#f00" fill="none" transform="translate(.5,0)"/>
<path d="M843 579h3v1h-3z" fill="#f00"/>
<path d="M849 532V537M850 524V530" stroke="#f00" fill="none" transform="translate(.5,0)"/>
<path d="M848 532h3v4h-3zM849 525h3v1h-3z" fill="#f00"/>
<path d="M848 539V540M848 542V546M848 534V534M848 540V541M848 530V532M848 534V537M850 522V525M850 536V539M850 524V524M850 526V529M851 521V521M851 524V532M847 540h2v1h-2zM847 534h2v6h-2zM847 532h2v2h-2zM849 525h2v11h-2zM849 524h2v2h-2zM850 521h2v4h-2z" fill="none" stroke="#0a960a" transform="translate(.5,.5)"/>
<path d="M852 526V527M852 536V537M854 520V521M854 531V531M855 528V530M855 534V534M851 527h2v9h-2zM853 521h2v10h-2zM854 530h2v4h-2z" fill="none" stroke="#0a960a" transform="translate(.5,.5)"/>
<path d="M852 520V528M852 523V538M853 526V530M854 527V534M854 519V537" stroke="#f00" fill="none" transform="translate(.5,0)"/>
<path d="M851 521h3v2h-3zM851 529h3v7h-3zM852 527h3v2h-3zM853 530h3v2h-3zM853 521h3v12h-3z" fill="#f00"/>
<path d="M856 528V542M858 526V539M859 530V539" stroke="#f00" fill="none" transform="translate(.5,0)"/>
<path d="M855 530h3v11h-3zM857 528h3v10h-3zM858 531h3v8h-3z" fill="#f00"/>
<path d="M856 539V540M856 541V543M856 531V532M856 540V540M857 524V528M857 532V536M858 529V533M858 538V541M858 529V531M858 533V533M855 540h2v1h-2zM855 532h2v8h-2zM856 528h2v4h-2zM857 533h2v5h-2zM857 531h2v2h-2z" fill="none" stroke="#0a960a" transform="translate(.5,.5)"/>
<path d="M860 528V536M860 538V540M860 526V526M860 536V537M862 524V526M862 530V535M862 519V521M862 526V528M863 514V515M863 521V522M859 536h2v3h-2zM859 526h2v9h-2zM861 526h2v4h-2zM861 521h2v4h-2zM862 515h2v7h-2z" fill="none" stroke="#0a960a" transform="translate(.5,.5)"/>
<path d="M860 525V530M861 527V531" stroke="#f00" fill="none" transform="translate(.5,0)"/>
<path d="M859 526h3v2h-3zM860 528h3v2h-3z" fill="#f00"/>
<path d="M866 495V507M866 498V502" stroke="#f00" fill="none" transform="translate(.5,0)"/>
<path d="M865 498h3v5h-3zM865 499h3v1h-3z" fill="#f00"/>
<path d="M864 511V512M864 515V516M864 508V509M864 512V513M864 500V501M864 509V512M865 497V498M865 501V501M866 496V499M866 503V506M867 494V496M867 500V501M863 512h2v2h-2zM863 509h2v3h-2zM863 501h2v8h-2zM864 498h2v3h-2zM865 499h2v4h-2zM866 496h2v4h-2z" fill="none" stroke="#0a960a" transform="translate(.5,.5)"/>
<path d="M868 495V496M868 497V500M868 492V494M868 496V501M870 497V500M870 502V507M870 504V507M870 509V513M867 496h2v1h-2zM867 494h2v2h-2zM869 500h2v2h-2zM869 507h2v2h-2z" fill="none" stroke="#0a960a" transform="translate(.5,.5)"/>
<path d="M868 490V497M869 489V504M870 498V509M871 507V511" stroke="#f00" fill="none" transform="translate(.5,0)"/>
<path d="M867 496h3v1h-3zM868 494h3v8h-3zM869 500h3v9h-3zM870 507h3v1h-3z" fill="#f00"/>
<path d="M872 505V513M872 504V520M874 507V521M874 509V514" stroke="#f00" fill="none" transform="translate(.5,0)"/>
<path d="M871 508h3v3h-3zM871 509h3v10h-3zM873 512h3v6h-3zM873 510h3v2h-3z" fill="#f00"/>
<path d="M872 506V509M872 515V517M873 509V512M873 518V524M874 506V510M874 518V518M875 500V500M875 512V512M871 509h2v7h-2zM872 512h2v6h-2zM873 510h2v9h-2zM874 500h2v12h-2z" fill="none" stroke="#0a960a" transform="translate(.5,.5)"/>
<path d="M876 490V493M876 495V497M878 493V494M878 495V497M878 481V483M878 494V495M879 482V483M879 485V486M875 493h2v3h-2zM877 494h2v1h-2zM877 483h2v11h-2zM878 483h2v2h-2z" fill="none" stroke="#0a960a" transform="translate(.5,.5)"/>
<path d="M876 499V504M876 498V506M877 492V495M878 482V486" stroke="#f00" fill="none" transform="translate(.5,0)"/>
<path d="M875 500h3v3h-3zM875 503h3v2h-3zM876 493h3v3h-3zM877 483h3v2h-3z" fill="#f00"/>
<path d="M880 463V482M882 462V471M883 465V475" stroke="#f00" fill="none" transform="translate(.5,0)"/>
<path d="M879 474h3v4h-3zM881 465h3v2h-3zM882 467h3v7h-3z" fill="#f00"/>
<path d="M880 479V479M880 483V483M880 468V474M880 479V484M881 468V468M881 478V481M882 463V465M882 468V473M879 479h2v4h-2zM879 474h2v5h-2zM880 468h2v10h-2zM881 465h2v2h-2z" fill="none" stroke="#0a960a" transform="translate(.5,.5)"/>
<path d="M886 487V489M886 491V496M885 489h2v2h-2z" fill="none" stroke="#0a960a" transform="translate(.5,.5)"/>
<path d="M884 473V482M884 478V486M885 483V491M886 482V493M886 486V493M887 489V501" stroke="#f00" fill="none" transform="translate(.5,0)"/>
<path d="M883 474h3v5h-3zM883 479h3v6h-3zM884 485h3v5h-3zM885 489h3v2h-3zM885 489h3v2h-3zM886 491h3v5h-3z" fill="#f00"/>
<path d="M888 493V505M890 485V489M890 482V491" stroke="#f00" fill="none" transform="translate(.5,0)"/>
<path d="M887 496h3v6h-3zM889 487h3v2h-3zM889 482h3v4h-3z" fill="#f00"/>
<path d="M888 499V501M888 502V505M888 492V494M888 501V502M889 480V487M889 494V495M890 480V482M890 489V490M891 478V480M891 486V487M887 501h2v1h-2zM887 494h2v7h-2zM888 487h2v7h-2zM889 482h2v7h-2zM890 480h2v7h-2z" fill="none" stroke="#0a960a" transform="translate(.5,.5)"/>
<path d="M892 492V492M892 494V498M893 490V490M893 492V494M895 497V500M895 506V508M891 492h2v2h-2zM892 490h2v2h-2zM894 500h2v6h-2z" fill="none" stroke="#0a960a" transform="translate(.5,.5)"/>
<path d="M892 474V495M892 488V496M894 487V492M894 491V498M894 495V510" stroke="#f00" fill="none" transform="translate(.5,0)"/>
<path d="M891 480h3v14h-3zM891 489h3v5h-3zM893 490h3v2h-3zM893 492h3v6h-3zM893 497h3v9h-3z" fill="#f00"/>
<path d="M896 499V509M896 499V508M898 490V499" stroke="#f00" fill="none" transform="translate(.5,0)"/>
<path d="M895 500h3v6h-3zM895 504h3v2h-3zM897 495h3v3h-3z" fill="#f00"/>
<path d="M896 492V504M896 506V509M897 494V495M897 506V509M898 489V493M898 498V501M898 486V491M898 493V493M899 485V489M899 491V491M895 504h2v2h-2zM896 495h2v11h-2zM897 493h2v6h-2zM897 491h2v2h-2zM898 489h2v2h-2z" fill="none" stroke="#0a960a" transform="translate(.5,.5)"/>
<path d="M900 483V487M900 489V490M900 482V483M900 487V488M902 484V485M902 487V490M902 477V479M902 485V489M903 477V477M903 483V485M899 487h2v3h-2zM899 483h2v3h-2zM901 485h2v2h-2zM901 479h2v6h-2zM902 477h2v6h-2z" fill="none" stroke="#0a960a" transform="translate(.5,.5)"/>
<path d="M900 479V485M901 483V488M902 478V487" stroke="#f00" fill="none" transform="translate(.5,0)"/>
<path d="M899 483h3v2h-3zM900 485h3v2h-3zM901 479h3v5h-3z" fill="#f00"/>
<path d="M904 477V482M906 474V481M907 463V470" stroke="#f00" fill="none" transform="translate(.5,0)"/>
<path d="M903 477h3v4h-3zM905 474h3v2h-3zM906 466h3v3h-3z" fill="#f00"/>
<path d="M904 475V478M904 482V485M904 473V476M904 478V480M905 471V474M905 476V478M906 472V474M906 476V478M906 464V466M906 474V483M903 478h2v4h-2zM903 476h2v2h-2zM904 474h2v2h-2zM905 474h2v2h-2zM905 466h2v8h-2z" fill="none" stroke="#0a960a" transform="translate(.5,.5)"/>
<path d="M908 462V467M908 470V470M908 457V459M908 467V474M909 458V460M909 466V466M910 457V458M910 460V463M910 454V457M910 458V462M910 450V454M910 457V458M907 467h2v3h-2zM907 459h2v8h-2zM908 460h2v6h-2zM909 458h2v2h-2zM909 457h2v1h-2zM909 454h2v2h-2z" fill="none" stroke="#0a960a" transform="translate(.5,.5)"/>
<path d="M908 459V466M911 451V459" stroke="#f00" fill="none" transform="translate(.5,0)"/>
<path d="M907 459h3v7h-3zM910 454h3v5h-3z" fill="#f00"/>
<path d="M912 454V462M912 456V467M914 463V468M915 459V466" stroke="#f00" fill="none" transform="translate(.5,0)"/>
<path d="M911 459h3v3h-3zM911 458h3v7h-3zM913 463h3v2h-3zM914 461h3v3h-3z" fill="#f00"/>
<path d="M912 454V458M912 462V467M913 462V463M913 464V465M914 463V463M914 465V466M914 459V461M914 463V465M911 458h2v4h-2zM912 463h2v1h-2zM913 463h2v2h-2zM913 461h2v2h-2z" fill="none" stroke="#0a960a" transform="translate(.5,.5)"/>
<path d="M916 462V462M916 464V465M918 465V465M918 467V478M915 462h2v2h-2zM917 465h2v2h-2z" fill="none" stroke="#0a960a" transform="translate(.5,.5)"/>
<path d="M916 459V467M916 463V470M917 465V467M918 464V471M918 468V483M919 472V477" stroke="#f00" fill="none" transform="translate(.5,0)"/>
<path d="M915 462h3v1h-3zM915 463h3v2h-3zM916 465h3v1h-3zM917 465h3v6h-3zM917 471h3v3h-3zM918 474h3v1h-3z" fill="#f00"/>
<path d="M920 468V482M920 478V488M920 484V487M921 485V495M922 489V496M922 490V495M923 491V498" stroke="#f00" fill="none" transform="translate(.5,0)"/>
<path d="M919 475h3v6h-3zM919 480h3v4h-3zM919 484h3v2h-3zM920 487h3v6h-3zM921 492h3v2h-3zM921 492h3v2h-3zM922 494h3v2h-3z" fill="#f00"/>
<path d="M922 491V492M922 494V497M921 492h2v2h-2z" fill="none" stroke="#0a960a" transform="translate(.5,.5)"/>
<path d="M924 489V493M924 496V500M926 497V497M926 501V505M923 493h2v3h-2zM925 497h2v4h-2z" fill="none" stroke="#0a960a" transform="translate(.5,.5)"/>
<path d="M924 490V497M924 493V497M925 495V504M926 496V506M926 504V511M927 507V516" stroke="#f00" fill="none" transform="translate(.5,0)"/>
<path d="M923 493h3v2h-3zM923 495h3v1h-3zM924 496h3v5h-3zM925 497h3v8h-3zM925 505h3v3h-3zM926 508h3v5h-3z" fill="#f00"/>
<path d="M929 509V512M930 511V513" stroke="#f00" fill="none" transform="translate(.5,0)"/>
<path d="M928 509h3v2h-3zM929 511h3v2h-3z" fill="#f00"/>
<path d="M928 511V512M928 513V515M928 509V510M928 512V513M928 505V509M928 510V515M930 508V510M930 512V515M930 505V507M930 510V511M931 506V506M931 507V510M927 512h2v1h-2zM927 510h2v2h-2zM927 509h2v1h-2zM929 510h2v3h-2zM929 507h2v3h-2zM930 506h2v1h-2z" fill="none" stroke="#0a960a" transform="translate(.5,.5)"/>
<path d="M932 501V501M932 509V510M933 499V501M933 507V514M934 497V498M934 501V501M934 485V493M934 498V501M934 490V491M934 493V497M935 488V489M935 491V494M931 501h2v8h-2zM932 501h2v6h-2zM933 498h2v3h-2zM933 493h2v5h-2zM933 491h2v1h-2zM934 489h2v2h-2z" fill="none" stroke="#0a960a" transform="translate(.5,.5)"/>
<path d="M932 501V512M932 497V513" stroke="#f00" fill="none" transform="translate(.5,0)"/>
<path d="M931 506h3v3h-3zM931 501h3v6h-3z" fill="#f00"/>
<path d="M936 484V488M938 474V482M939 468V479" stroke="#f00" fill="none" transform="translate(.5,0)"/>
<path d="M935 486h3v1h-3zM937 476h3v5h-3zM938 471h3v8h-3z" fill="#f00"/>
<path d="M936 485V486M936 489V494M936 482V485M936 487V491M937 472V476M937 485V487M938 469V473M938 481V484M938 470V471M938 473V473M935 486h2v3h-2zM935 485h2v2h-2zM936 476h2v9h-2zM937 473h2v9h-2zM937 471h2v2h-2z" fill="none" stroke="#0a960a" transform="translate(.5,.5)"/>
<path d="M940 470V473M940 479V486M940 469V470M940 473V476M943 481V482M943 485V488M939 473h2v5h-2zM939 470h2v4h-2zM942 482h2v4h-2z" fill="none" stroke="#0a960a" transform="translate(.5,.5)"/>
<path d="M940 466V474M941 472V476M942 471V478M942 477V480M942 475V488" stroke="#f00" fill="none" transform="translate(.5,0)"/>
<path d="M939 470h3v3h-3zM940 473h3v2h-3zM941 475h3v2h-3zM941 477h3v2h-3zM941 479h3v6h-3z" fill="#f00"/>
<path d="M944 472V479M945 474V479M946 479V482M947 476V478" stroke="#f00" fill="none" transform="translate(.5,0)"/>
<path d="M943 473h3v4h-3zM944 477h3v2h-3zM945 479h3v2h-3zM946 477h3v2h-3z" fill="#f00"/>
<path d="M944 469V475M944 482V482M944 470V473M944 475V475M946 477V479M946 481V482M946 475V477M946 479V481M943 475h2v6h-2zM943 473h2v2h-2zM945 479h2v2h-2zM945 477h2v2h-2z" fill="none" stroke="#0a960a" transform="translate(.5,.5)"/>
<path d="M948 472V475M948 478V481M948 465V467M948 475V479M948 465V465M948 467V472M950 457V460M950 470V471M950 457V458M950 460V471M950 452V455M950 458V464M951 452V452M951 455V456M947 475h2v3h-2zM947 467h2v8h-2zM947 465h2v2h-2zM949 460h2v9h-2zM949 458h2v2h-2zM949 455h2v4h-2zM950 452h2v2h-2z" fill="none" stroke="#0a960a" transform="translate(.5,.5)"/>
<path d="M949 462V471" stroke="#f00" fill="none" transform="translate(.5,0)"/>
<path d="M948 465h3v5h-3z" fill="#f00"/>
<path d="M954 427V435M955 429V437" stroke="#f00" fill="none" transform="translate(.5,0)"/>
<path d="M953 428h3v2h-3zM954 430h3v5h-3z" fill="#f00"/>
<path d="M952 450V451M952 452V453M952 444V446M952 451V451M952 439V440M952 446V448M953 434V436M953 440V443M954 424V430M954 436V439M954 428V428M954 430V430M951 451h2v2h-2zM951 446h2v5h-2zM951 440h2v6h-2zM952 436h2v4h-2zM953 430h2v6h-2zM953 428h2v2h-2z" fill="none" stroke="#0a960a" transform="translate(.5,.5)"/>
<path d="M956 433V433M956 435V438M957 436V438M957 443V445M958 441V442M958 447V449M955 433h2v2h-2zM956 438h2v5h-2zM957 442h2v5h-2z" fill="none" stroke="#0a960a" transform="translate(.5,.5)"/>
<path d="M956 431V440M956 436V444M958 438V450M958 439V451M959 448V456" stroke="#f00" fill="none" transform="translate(.5,0)"/>
<path d="M955 433h3v4h-3zM955 437h3v5h-3zM957 438h3v9h-3zM957 442h3v6h-3zM958 448h3v3h-3z" fill="#f00"/>
<path d="M960 450V458M960 456V465M960 460V462M961 460V471M962 466V473M962 469V476M963 467V472" stroke="#f00" fill="none" transform="translate(.5,0)"/>
<path d="M959 451h3v5h-3zM959 456h3v4h-3zM959 460h3v2h-3zM960 462h3v6h-3zM961 468h3v1h-3zM961 469h3v5h-3zM962 468h3v1h-3z" fill="#f00"/>
<path d="M962 464V468M962 474V475M961 468h2v6h-2z" fill="none" stroke="#0a960a" transform="translate(.5,.5)"/>
<path d="M964 463V466M964 473V475M966 463V467M966 471V473M966 463V465M966 467V470M963 466h2v7h-2zM965 467h2v5h-2zM965 465h2v1h-2z" fill="none" stroke="#0a960a" transform="translate(.5,.5)"/>
<path d="M964 469V472M964 471V477M965 465V472M966 467V473M967 462V479" stroke="#f00" fill="none" transform="translate(.5,0)"/>
<path d="M963 469h3v2h-3zM963 471h3v2h-3zM964 466h3v3h-3zM965 470h3v2h-3zM966 465h3v6h-3z" fill="#f00"/>
<path d="M968 456V465M969 462V463M970 462V471M971 459V465" stroke="#f00" fill="none" transform="translate(.5,0)"/>
<path d="M967 462h3v2h-3zM968 462h3v2h-3zM969 463h3v1h-3zM970 460h3v3h-3z" fill="#f00"/>
<path d="M968 457V462M968 471V476M968 454V462M968 464V465M970 462V463M970 465V466M970 452V460M970 463V467M967 462h2v9h-2zM967 462h2v2h-2zM969 463h2v2h-2zM969 460h2v2h-2z" fill="none" stroke="#0a960a" transform="translate(.5,.5)"/>
<path d="M972 459V461M972 463V466M973 459V460M973 465V468M974 460V466M974 470V474M975 459V461M975 466V467M971 461h2v2h-2zM972 460h2v5h-2zM973 466h2v4h-2zM974 461h2v4h-2z" fill="none" stroke="#0a960a" transform="translate(.5,.5)"/>
<path d="M972 459V465M972 462V465M974 457V466M974 463V471" stroke="#f00" fill="none" transform="translate(.5,0)"/>
<path d="M971 461h3v1h-3zM971 462h3v3h-3zM973 460h3v4h-3zM973 464h3v6h-3z" fill="#f00"/>
<path d="M976 453V462M978 455V461M978 459V467M979 464V469" stroke="#f00" fill="none" transform="translate(.5,0)"/>
<path d="M975 455h3v6h-3zM977 458h3v2h-3zM977 460h3v5h-3zM978 464h3v2h-3z" fill="#f00"/>
<path d="M976 459V459M976 461V463M976 455V455M976 459V461M977 455V459M977 461V463M978 457V458M978 459V459M975 459h2v2h-2zM975 455h2v4h-2zM976 459h2v2h-2zM977 458h2v1h-2z" fill="none" stroke="#0a960a" transform="translate(.5,.5)"/>
<path d="M980 459V465M980 466V469M980 465V468M980 470V471M983 487V488M983 492V495M979 465h2v1h-2zM979 468h2v2h-2zM982 488h2v4h-2z" fill="none" stroke="#0a960a" transform="translate(.5,.5)"/>
<path d="M980 458V472M981 460V478M982 471V484M982 482V486M982 485V495" stroke="#f00" fill="none" transform="translate(.5,0)"/>
<path d="M979 465h3v5h-3zM980 468h3v8h-3zM981 476h3v8h-3zM981 483h3v3h-3zM981 486h3v6h-3z" fill="#f00"/>
<path d="M984 488V493M984 488V495M986 487V495M986 484V486" stroke="#f00" fill="none" transform="translate(.5,0)"/>
<path d="M983 488h3v5h-3zM983 490h3v3h-3zM985 489h3v2h-3zM985 484h3v2h-3z" fill="#f00"/>
<path d="M984 487V490M984 493V494M985 487V489M985 493V496M986 484V484M986 492V494M987 483V484M987 486V489M983 490h2v3h-2zM984 489h2v4h-2zM985 484h2v8h-2zM986 484h2v2h-2z" fill="none" stroke="#0a960a" transform="translate(.5,.5)"/>
<path d="M988 486V487M988 490V492M990 492V492M990 496V497M991 499V501M991 503V505M987 487h2v3h-2zM989 492h2v3h-2zM990 501h2v2h-2z" fill="none" stroke="#0a960a" transform="translate(.5,.5)"/>
<path d="M988 482V491M988 485V494M989 487V499M990 491V500M990 495V511" stroke="#f00" fill="none" transform="translate(.5,0)"/>
<path d="M987 484h3v6h-3zM987 487h3v5h-3zM988 491h3v4h-3zM989 492h3v5h-3zM989 497h3v6h-3z" fill="#f00"/>
<path d="M994 484V494" stroke="#f00" fill="none" transform="translate(.5,0)"/>
<path d="M993 484h3v8h-3z" fill="#f00"/>
<path d="M992 497V498M992 501V502M992 492V494M992 498V498M992 491V492M992 494V495M993 488V490M993 492V496M994 484V487M994 490V493M994 481V484M994 487V491M995 487V489M995 492V497M991 498h2v3h-2zM991 494h2v4h-2zM991 492h2v2h-2zM992 490h2v2h-2zM993 487h2v3h-2zM993 484h2v3h-2zM994 489h2v4h-2z" fill="none" stroke="#0a960a" transform="translate(.5,.5)"/>
<path d="M996 483V487M996 490V493M997 491V493M997 494V496M998 486V493M998 495V501M998 486V489M998 493V496M995 487h2v3h-2zM996 493h2v1h-2zM997 493h2v2h-2zM997 489h2v4h-2z" fill="none" stroke="#0a960a" transform="translate(.5,.5)"/>
<path d="M996 487V492M996 486V495M998 492V497M999 488V500" stroke="#f00" fill="none" transform="translate(.5,0)"/>
<path d="M995 489h3v2h-3zM995 487h3v7h-3zM997 493h3v2h-3zM998 489h3v8h-3z" fill="#f00"/>
<path d="M1000 492V498M1000 494V502M1002 494V501M1002 497V506M1002 499V505" stroke="#f00" fill="none" transform="translate(.5,0)"/>
<path d="M999 495h3v1h-3zM999 496h3v4h-3zM1001 496h3v3h-3zM1001 499h3v2h-3zM1001 502h3v2h-3z" fill="#f00"/>
<path d="M1000 495V495M1000 497V499M1001 495V496M1001 500V501M1003 478V492M1003 504V504M999 495h2v2h-2zM1000 496h2v4h-2zM1002 492h2v11h-2z" fill="none" stroke="#0a960a" transform="translate(.5,.5)"/>
<path d="M1004 489V489M1004 494V497M1004 483V485M1004 489V492M1006 484V485M1006 487V493M1006 479V482M1006 485V487M1006 478V478M1006 482V488M1007 467V471M1007 478V482M1003 489h2v4h-2zM1003 485h2v5h-2zM1005 485h2v2h-2zM1005 482h2v3h-2zM1005 478h2v4h-2zM1006 471h2v7h-2z" fill="none" stroke="#0a960a" transform="translate(.5,.5)"/>
<path d="M1004 488V494M1005 482V488" stroke="#f00" fill="none" transform="translate(.5,0)"/>
<path d="M1003 492h3v1h-3zM1004 485h3v3h-3z" fill="#f00"/>
<path d="M1008 461V471M1010 449V461" stroke="#f00" fill="none" transform="translate(.5,0)"/>
<path d="M1007 463h3v3h-3zM1009 452h3v2h-3z" fill="#f00"/>
<path d="M1008 466V469M1008 471V472M1008 461V463M1008 469V470M1009 447V459M1009 466V467M1010 449V454M1010 459V460M1010 448V452M1010 454V457M1011 439V441M1011 454V455M1007 469h2v2h-2zM1007 463h2v6h-2zM1008 459h2v7h-2zM1009 454h2v5h-2zM1009 452h2v2h-2zM1010 441h2v13h-2z" fill="none" stroke="#0a960a" transform="translate(.5,.5)"/>
<path d="M1012 437V439M1012 442V444M1012 433V434M1012 439V441M1013 416V429M1013 434V434M1014 424V424M1014 429V430M1014 425V426M1014 428V432M1015 420V422M1015 426V427M1011 439h2v3h-2zM1011 434h2v6h-2zM1012 429h2v5h-2zM1013 424h2v4h-2zM1013 426h2v2h-2zM1014 422h2v4h-2z" fill="none" stroke="#0a960a" transform="translate(.5,.5)"/>
<path d="M1012 437V445M1014 423V429" stroke="#f00" fill="none" transform="translate(.5,0)"/>
<path d="M1011 441h3v1h-3zM1013 424h3v4h-3z" fill="#f00"/>
<path d="M1016 421V424M1018 412V416" stroke="#f00" fill="none" transform="translate(.5,0)"/>
<path d="M1015 421h3v2h-3zM1017 412h3v3h-3z" fill="#f00"/>
<path d="M1016 417V421M1016 422V426M1016 416V417M1016 423V424M1017 413V414M1017 417V417M1018 412V412M1018 414V415M1018 404V406M1018 415V415M1019 403V405M1019 406V408M1015 421h2v1h-2zM1015 417h2v6h-2zM1016 414h2v3h-2zM1017 412h2v2h-2zM1017 406h2v9h-2zM1018 405h2v1h-2z" fill="none" stroke="#0a960a" transform="translate(.5,.5)"/>
<path d="M1020 404V405M1020 407V407M1020 398V401M1020 405V406M1021 396V399M1021 401V405M1022 389V395M1022 401V404M1023 390V391M1023 397V398M1019 405h2v2h-2zM1019 401h2v4h-2zM1020 399h2v2h-2zM1021 395h2v6h-2zM1022 391h2v6h-2z" fill="none" stroke="#0a960a" transform="translate(.5,.5)"/>
<path d="M1020 403V409M1022 397V404M1022 393V397" stroke="#f00" fill="none" transform="translate(.5,0)"/>
<path d="M1019 405h3v2h-3zM1021 399h3v2h-3zM1021 395h3v2h-3z" fill="#f00"/>
<path d="M1024 389V401M1024 392V398M1026 385V402M1026 397V404M1027 400V410" stroke="#f00" fill="none" transform="translate(.5,0)"/>
<path d="M1023 391h3v6h-3zM1023 394h3v3h-3zM1025 394h3v6h-3zM1025 398h3v4h-3zM1026 402h3v5h-3z" fill="#f00"/>
<path d="M1024 393V394M1024 397V401M1025 392V394M1025 396V397M1026 392V398M1026 400V403M1023 394h2v3h-2zM1024 394h2v2h-2zM1025 398h2v2h-2z" fill="none" stroke="#0a960a" transform="translate(.5,.5)"/>
<path d="M1028 400V401M1028 407V408M1028 401V406M1028 407V408M1030 401V404M1030 411V411M1030 400V401M1030 404V409M1030 396V399M1030 401V402M1027 401h2v5h-2zM1027 406h2v1h-2zM1029 404h2v7h-2zM1029 401h2v3h-2zM1029 399h2v2h-2z" fill="none" stroke="#0a960a" transform="translate(.5,.5)"/>
<path d="M1028 401V413M1029 404V411M1031 395V406" stroke="#f00" fill="none" transform="translate(.5,0)"/>
<path d="M1027 401h3v6h-3zM1028 406h3v5h-3zM1030 399h3v4h-3z" fill="#f00"/>
<path d="M1032 402V406M1032 404V411M1034 395V400M1034 395V406" stroke="#f00" fill="none" transform="translate(.5,0)"/>
<path d="M1031 403h3v1h-3zM1031 404h3v3h-3zM1033 397h3v2h-3zM1033 397h3v6h-3z" fill="#f00"/>
<path d="M1032 397V399M1032 407V408M1033 396V397M1033 399V402M1034 394V397M1034 399V400M1035 391V394M1035 402V403M1031 399h2v8h-2zM1032 397h2v2h-2zM1033 397h2v2h-2zM1034 394h2v9h-2z" fill="none" stroke="#0a960a" transform="translate(.5,.5)"/>
<path d="M1036 393V393M1036 396V398M1038 394V396M1038 398V398M1039 394V397M1039 398V399M1035 393h2v3h-2zM1037 396h2v2h-2zM1038 397h2v1h-2z" fill="none" stroke="#0a960a" transform="translate(.5,.5)"/>
<path d="M1036 393V396M1036 393V396M1037 385V399M1038 394V398M1038 394V401" stroke="#f00" fill="none" transform="translate(.5,0)"/>
<path d="M1035 394h3v1h-3zM1035 395h3v1h-3zM1036 393h3v3h-3zM1037 397h3v1h-3zM1037 396h3v2h-3z" fill="#f00"/>
<path d="M1040 393V405M1040 392V401M1042 391V403M1042 397V406" stroke="#f00" fill="none" transform="translate(.5,0)"/>
<path d="M1039 397h3v2h-3zM1039 395h3v6h-3zM1041 393h3v8h-3zM1041 401h3v2h-3z" fill="#f00"/>
<path d="M1040 392V395M1040 398V399M1041 392V393M1041 401V408M1042 397V401M1042 402V403M1043 397V398M1043 403V403M1039 395h2v4h-2zM1040 393h2v8h-2zM1041 401h2v1h-2zM1042 398h2v5h-2z" fill="none" stroke="#0a960a" transform="translate(.5,.5)"/>
<path d="M1044 395V396M1044 398V399M1045 387V398M1045 400V403M1046 392V397M1046 398V405M1047 396V398M1047 401V402M1043 396h2v2h-2zM1044 398h2v1h-2zM1045 397h2v2h-2zM1046 398h2v4h-2z" fill="none" stroke="#0a960a" transform="translate(.5,.5)"/>
<path d="M1044 396V400M1044 397V401M1046 394V401M1046 399V403" stroke="#f00" fill="none" transform="translate(.5,0)"/>
<path d="M1043 396h3v2h-3zM1043 398h3v2h-3zM1045 397h3v3h-3zM1045 399h3v2h-3z" fill="#f00"/>
<path d="M1048 390V395M1050 386V394M1051 385V391" stroke="#f00" fill="none" transform="translate(.5,0)"/>
<path d="M1047 391h3v2h-3zM1049 392h3v2h-3zM1050 385h3v2h-3z" fill="#f00"/>
<path d="M1048 385V395M1048 398V400M1048 390V391M1048 395V397M1049 392V392M1049 393V393M1050 388V390M1050 394V397M1050 382V385M1050 390V390M1047 395h2v2h-2zM1047 391h2v4h-2zM1048 392h2v1h-2zM1049 390h2v4h-2zM1049 385h2v5h-2z" fill="none" stroke="#0a960a" transform="translate(.5,.5)"/>
<path d="M1052 383V384M1052 387V388M1052 377V379M1052 384V386M1052 377V377M1052 379V381M1054 376V379M1054 386V387M1054 374V375M1054 379V384M1055 371V371M1055 375V378M1051 384h2v3h-2zM1051 379h2v5h-2zM1051 377h2v2h-2zM1053 379h2v6h-2zM1053 375h2v4h-2zM1054 371h2v4h-2z" fill="none" stroke="#0a960a" transform="translate(.5,.5)"/>
<path d="M1053 375V384M1054 382V388" stroke="#f00" fill="none" transform="translate(.5,0)"/>
<path d="M1052 377h3v5h-3zM1053 382h3v3h-3z" fill="#f00"/>
<path d="M1056 369V378M1058 359V363" stroke="#f00" fill="none" transform="translate(.5,0)"/>
<path d="M1055 371h3v3h-3zM1057 360h3v3h-3z" fill="#f00"/>
<path d="M1056 372V373M1056 374V381M1056 368V368M1056 373V375M1057 365V366M1057 368V370M1058 363V364M1058 366V368M1058 356V360M1058 364V369M1059 353V358M1059 363V363M1055 373h2v1h-2zM1055 368h2v4h-2zM1056 366h2v2h-2zM1057 364h2v2h-2zM1057 360h2v4h-2zM1058 358h2v5h-2z" fill="none" stroke="#0a960a" transform="translate(.5,.5)"/>
<path d="M1061 355V362M1061 365V369M1062 356V360M1062 362V363M1062 358V360M1062 362V363M1060 362h2v3h-2zM1061 360h2v2h-2zM1061 360h2v2h-2z" fill="none" stroke="#0a960a" transform="translate(.5,.5)"/>
<path d="M1060 355V363M1060 358V365M1060 361V369M1062 359V364M1063 358V364" stroke="#f00" fill="none" transform="translate(.5,0)"/>
<path d="M1059 358h3v2h-3zM1059 360h3v2h-3zM1059 362h3v4h-3zM1061 360h3v2h-3zM1062 360h3v2h-3z" fill="#f00"/>
<path d="M1064 360V364M1064 362V372M1065 367V377M1066 371V377M1066 376V393M1066 389V406M1067 402V420" stroke="#f00" fill="none" transform="translate(.5,0)"/>
<path d="M1063 362h3v1h-3zM1063 363h3v7h-3zM1064 368h3v5h-3zM1065 374h3v2h-3zM1065 376h3v13h-3zM1065 389h3v16h-3zM1066 405h3v11h-3z" fill="#f00"/>
<path d="M1064 367V368M1064 370V374M1063 368h2v2h-2z" fill="none" stroke="#0a960a" transform="translate(.5,.5)"/>
<path d="M1068 409V415M1068 423V425M1070 416V417M1070 419V420M1070 412V413M1070 417V418M1071 410V414M1071 420V423M1067 415h2v8h-2zM1069 417h2v1h-2zM1069 413h2v4h-2zM1070 414h2v6h-2z" fill="none" stroke="#0a960a" transform="translate(.5,.5)"/>
<path d="M1068 414V423M1068 411V420M1069 415V421M1070 399V422" stroke="#f00" fill="none" transform="translate(.5,0)"/>
<path d="M1067 416h3v7h-3zM1067 415h3v2h-3zM1068 417h3v2h-3zM1069 413h3v7h-3z" fill="#f00"/>
<path d="M1073 401V412M1074 400V405" stroke="#f00" fill="none" transform="translate(.5,0)"/>
<path d="M1072 404h3v5h-3zM1073 401h3v3h-3z" fill="#f00"/>
<path d="M1072 406V412M1072 414V419M1072 409V410M1072 412V413M1072 402V404M1072 410V413M1074 393V401M1074 409V410M1074 401V401M1074 403V409M1075 394V400M1075 401V404M1071 412h2v3h-2zM1071 410h2v2h-2zM1071 404h2v6h-2zM1073 401h2v9h-2zM1073 401h2v2h-2zM1074 400h2v2h-2z" fill="none" stroke="#0a960a" transform="translate(.5,.5)"/>
<path d="M1076 397V398M1076 400V405M1076 393V396M1076 398V400M1077 399V400M1077 403V408M1078 396V399M1078 400V406M1079 396V400M1079 405V416M1075 398h2v2h-2zM1075 396h2v2h-2zM1076 400h2v3h-2zM1077 399h2v1h-2zM1078 400h2v5h-2z" fill="none" stroke="#0a960a" transform="translate(.5,.5)"/>
<path d="M1076 396V404M1078 396V404M1078 403V406" stroke="#f00" fill="none" transform="translate(.5,0)"/>
<path d="M1075 396h3v7h-3zM1077 399h3v5h-3zM1077 403h3v2h-3z" fill="#f00"/>
<path d="M1080 400V411M1081 400V408M1082 406V410M1082 396V411" stroke="#f00" fill="none" transform="translate(.5,0)"/>
<path d="M1079 400h3v11h-3zM1080 403h3v4h-3zM1081 407h3v2h-3zM1081 397h3v11h-3z" fill="#f00"/>
<path d="M1080 402V406M1080 411V412M1080 396V403M1080 406V409M1082 394V397M1082 409V411M1083 401V401M1083 407V408M1079 406h2v5h-2zM1079 403h2v3h-2zM1081 397h2v12h-2zM1082 401h2v6h-2z" fill="none" stroke="#0a960a" transform="translate(.5,.5)"/>
<path d="M1084 397V398M1084 401V402M1084 394V397M1084 399V401M1086 397V399M1086 401V404M1086 395V396M1086 403V403M1087 394V394M1087 396V400M1083 398h2v3h-2zM1083 397h2v2h-2zM1085 399h2v2h-2zM1085 396h2v6h-2zM1086 394h2v2h-2z" fill="none" stroke="#0a960a" transform="translate(.5,.5)"/>
<path d="M1084 398V403M1085 396V403M1086 398V403" stroke="#f00" fill="none" transform="translate(.5,0)"/>
<path d="M1083 398h3v1h-3zM1084 397h3v3h-3zM1085 399h3v4h-3z" fill="#f00"/>
<path d="M1088 390V395M1089 379V386M1090 381V387M1091 373V382" stroke="#f00" fill="none" transform="translate(.5,0)"/>
<path d="M1087 392h3v1h-3zM1088 381h3v3h-3zM1089 384h3v2h-3zM1090 374h3v7h-3z" fill="#f00"/>
<path d="M1088 390V392M1088 394V396M1088 378V381M1088 394V394M1090 380V382M1090 386V388M1090 371V374M1090 382V382M1087 392h2v2h-2zM1087 381h2v13h-2zM1089 382h2v4h-2zM1089 374h2v8h-2z" fill="none" stroke="#0a960a" transform="translate(.5,.5)"/>
<path d="M1092 373V378M1092 383V383M1093 377V378M1093 380V382M1094 383V384M1094 386V388M1095 388V391M1095 392V395M1091 378h2v5h-2zM1092 378h2v2h-2zM1093 384h2v2h-2zM1094 391h2v1h-2z" fill="none" stroke="#0a960a" transform="translate(.5,.5)"/>
<path d="M1092 377V386M1092 366V382M1094 375V387M1094 382V395" stroke="#f00" fill="none" transform="translate(.5,0)"/>
<path d="M1091 380h3v3h-3zM1091 378h3v2h-3zM1093 378h3v8h-3zM1093 384h3v9h-3z" fill="#f00"/>
<path d="M1096 390V401M1096 397V409M1096 404V406M1097 401V425M1098 409V412" stroke="#f00" fill="none" transform="translate(.5,0)"/>
<path d="M1095 391h3v9h-3zM1095 400h3v4h-3zM1095 404h3v2h-3zM1096 406h3v5h-3zM1097 409h3v2h-3z" fill="#f00"/>
<path d="M1098 409V409M1098 411V414M1098 407V409M1098 412V413M1099 407V407M1099 409V412M1097 409h2v2h-2zM1097 409h2v3h-2zM1098 407h2v2h-2z" fill="none" stroke="#0a960a" transform="translate(.5,.5)"/>
<path d="M1100 402V403M1100 407V408M1101 405V406M1101 409V410M1102 407V407M1102 409V411M1102 402V405M1102 407V411M1099 403h2v4h-2zM1100 406h2v3h-2zM1101 407h2v3h-2zM1101 405h2v2h-2z" fill="none" stroke="#0a960a" transform="translate(.5,.5)"/>
<path d="M1100 400V406M1100 404V411M1102 405V415M1103 403V408" stroke="#f00" fill="none" transform="translate(.5,0)"/>
<path d="M1099 403h3v2h-3zM1099 405h3v4h-3zM1101 406h3v4h-3zM1102 405h3v2h-3z" fill="#f00"/>
<path d="M1104 406V412M1105 401V409M1106 404V411M1106 409V416M1107 405V411" stroke="#f00" fill="none" transform="translate(.5,0)"/>
<path d="M1103 407h3v2h-3zM1104 403h3v3h-3zM1105 406h3v4h-3zM1105 410h3v2h-3zM1106 406h3v2h-3z" fill="#f00"/>
<path d="M1104 405V407M1104 409V416M1104 399V403M1104 407V408M1106 403V406M1106 412V413M1103 407h2v3h-2zM1103 403h2v3h-2zM1105 406h2v6h-2z" fill="none" stroke="#0a960a" transform="translate(.5,.5)"/>
<path d="M1108 399V403M1108 408V409M1108 401V402M1108 405V407M1110 400V403M1110 404V406M1110 401V401M1110 403V405M1107 403h2v5h-2zM1107 402h2v3h-2zM1109 403h2v1h-2zM1109 401h2v2h-2z" fill="none" stroke="#0a960a" transform="translate(.5,.5)"/>
<path d="M1108 400V407M1109 398V409M1110 399V414M1111 410V415" stroke="#f00" fill="none" transform="translate(.5,0)"/>
<path d="M1107 403h3v3h-3zM1108 402h3v2h-3zM1109 401h3v10h-3zM1110 411h3v2h-3z" fill="#f00"/>
<path d="M1112 412V426M1112 423V436M1112 427V435M1113 430V440M1114 436V440M1115 432V437" stroke="#f00" fill="none" transform="translate(.5,0)"/>
<path d="M1111 413h3v11h-3zM1111 424h3v7h-3zM1111 432h3v3h-3zM1112 435h3v3h-3zM1113 437h3v2h-3zM1114 432h3v2h-3z" fill="#f00"/>
<path d="M1114 437V437M1114 438V439M1114 431V432M1114 439V441M1113 437h2v2h-2zM1113 432h2v7h-2z" fill="none" stroke="#0a960a" transform="translate(.5,.5)"/>
<path d="M1116 429V429M1116 435V436M1116 430V432M1116 434V438M1117 430V430M1117 432V432M1118 420V425M1118 434V435M1119 417V422M1119 425V430M1115 429h2v6h-2zM1115 432h2v2h-2zM1116 430h2v2h-2zM1117 425h2v9h-2zM1118 422h2v3h-2z" fill="none" stroke="#0a960a" transform="translate(.5,.5)"/>
<path d="M1116 428V435M1118 425V433M1118 430V436" stroke="#f00" fill="none" transform="translate(.5,0)"/>
<path d="M1115 429h3v5h-3zM1117 430h3v2h-3zM1117 432h3v2h-3z" fill="#f00"/>
<path d="M1120 422V429M1120 419V429M1122 410V419" stroke="#f00" fill="none" transform="translate(.5,0)"/>
<path d="M1119 422h3v5h-3zM1119 422h3v4h-3zM1121 415h3v2h-3z" fill="#f00"/>
<path d="M1120 420V422M1120 427V428M1121 417V423M1121 426V428M1122 414V415M1122 423V423M1122 415V415M1122 417V418M1123 412V413M1123 415V417M1119 422h2v5h-2zM1120 423h2v4h-2zM1121 415h2v8h-2zM1121 415h2v2h-2zM1122 413h2v2h-2z" fill="none" stroke="#0a960a" transform="translate(.5,.5)"/>
<path d="M1124 408V411M1124 418V423M1124 408V409M1124 411V413M1126 405V409M1126 415V418M1123 411h2v7h-2zM1123 409h2v2h-2zM1125 409h2v6h-2z" fill="none" stroke="#0a960a" transform="translate(.5,.5)"/>
<path d="M1124 411V421M1125 407V411M1126 410V414M1126 411V418M1127 407V421" stroke="#f00" fill="none" transform="translate(.5,0)"/>
<path d="M1123 413h3v5h-3zM1124 409h3v2h-3zM1125 411h3v2h-3zM1125 413h3v2h-3zM1126 409h3v7h-3z" fill="#f00"/>
<path d="M1128 416V422M1129 407V412M1130 409V415M1130 406V416M1131 414V419" stroke="#f00" fill="none" transform="translate(.5,0)"/>
<path d="M1127 416h3v3h-3zM1128 410h3v2h-3zM1129 412h3v2h-3zM1129 407h3v8h-3zM1130 415h3v1h-3z" fill="#f00"/>
<path d="M1128 413V418M1128 419V419M1128 408V410M1128 418V419M1130 405V407M1130 415V418M1127 418h2v2h-2zM1127 410h2v8h-2zM1129 407h2v7h-2z" fill="none" stroke="#0a960a" transform="translate(.5,.5)"/>
<path d="M1132 412V415M1132 417V418M1132 407V411M1132 417V418M1134 406V408M1134 413V414M1131 415h2v1h-2zM1131 411h2v6h-2zM1133 408h2v5h-2z" fill="none" stroke="#0a960a" transform="translate(.5,.5)"/>
<path d="M1132 415V419M1133 410V416M1134 402V412M1134 407V417M1135 412V417" stroke="#f00" fill="none" transform="translate(.5,0)"/>
<path d="M1131 415h3v2h-3zM1132 411h3v2h-3zM1133 408h3v3h-3zM1133 411h3v2h-3zM1134 413h3v2h-3z" fill="#f00"/>
<path d="M1136 410V421M1136 403V413M1138 357V363M1138 362V367M1138 364V369" stroke="#f00" fill="none" transform="translate(.5,0)"/>
<path d="M1135 415h3v1h-3zM1135 405h3v8h-3zM1137 360h3v3h-3zM1137 363h3v2h-3zM1137 365h3v2h-3z" fill="#f00"/>
<path d="M1136 403V405M1136 417V417M1137 360V360M1137 363V365M1139 358V364M1139 367V368M1135 405h2v12h-2zM1136 360h2v3h-2zM1138 364h2v3h-2z" fill="none" stroke="#0a960a" transform="translate(.5,.5)"/>
<path d="M1140 366V368M1140 369V372M1142 367V369M1142 371V372M1142 369V372M1142 374V374M1139 368h2v1h-2zM1141 369h2v2h-2zM1141 372h2v2h-2z" fill="none" stroke="#0a960a" transform="translate(.5,.5)"/>
<path d="M1140 362V374M1140 367V372M1141 369V373M1142 369V376M1143 369V378" stroke="#f00" fill="none" transform="translate(.5,0)"/>
<path d="M1139 364h3v5h-3zM1139 368h3v2h-3zM1140 370h3v2h-3zM1141 369h3v4h-3zM1142 372h3v2h-3z" fill="#f00"/>
<path d="M1144 370V377M1146 358V368" stroke="#f00" fill="none" transform="translate(.5,0)"/>
<path d="M1143 371h3v2h-3zM1145 360h3v7h-3z" fill="#f00"/>
<path d="M1144 368V371M1144 374V376M1144 362V368M1144 373V373M1145 364V366M1145 368V369M1146 359V360M1146 366V367M1146 354V359M1146 367V370M1147 353V356M1147 359V362M1143 371h2v3h-2zM1143 368h2v5h-2zM1144 366h2v2h-2zM1145 360h2v6h-2zM1145 359h2v8h-2zM1146 356h2v3h-2z" fill="none" stroke="#0a960a" transform="translate(.5,.5)"/>
<path d="M1149 363V364M1149 366V368M1148 364h2v2h-2z" fill="none" stroke="#0a960a" transform="translate(.5,.5)"/>
<path d="M1148 354V361M1148 357V371M1148 359V366M1150 361V372M1150 366V374M1150 371V378M1151 376V383" stroke="#f00" fill="none" transform="translate(.5,0)"/>
<path d="M1147 356h3v5h-3zM1147 361h3v2h-3zM1147 363h3v3h-3zM1149 364h3v6h-3zM1149 371h3v3h-3zM1149 373h3v4h-3zM1150 378h3v2h-3z" fill="#f00"/>
<path d="M1152 378V385M1152 382V391M1152 389V394" stroke="#f00" fill="none" transform="translate(.5,0)"/>
<path d="M1151 380h3v5h-3zM1151 385h3v6h-3zM1151 391h3v3h-3z" fill="#f00"/>
<path d="M1153 390V392M1153 394V406M1154 387V391M1154 392V393M1154 386V389M1154 391V392M1154 385V386M1154 389V391M1155 374V375M1155 386V387M1152 392h2v2h-2zM1153 391h2v1h-2zM1153 389h2v2h-2zM1153 386h2v4h-2zM1154 375h2v11h-2z" fill="none" stroke="#0a960a" transform="translate(.5,.5)"/>
<path d="M1156 368V374M1156 386V389M1158 373V374M1158 376V382M1158 373V375M1158 377V380M1159 369V372M1159 375V378M1155 374h2v11h-2zM1157 374h2v2h-2zM1157 375h2v3h-2zM1158 372h2v2h-2z" fill="none" stroke="#0a960a" transform="translate(.5,.5)"/>
<path d="M1156 374V387M1156 382V388M1157 371V378M1158 372V378" stroke="#f00" fill="none" transform="translate(.5,0)"/>
<path d="M1155 375h3v9h-3zM1155 384h3v2h-3zM1156 374h3v2h-3zM1157 374h3v3h-3z" fill="#f00"/>
<path d="M1160 371V376M1160 370V382M1162 365V377M1162 371V377M1163 369V382" stroke="#f00" fill="none" transform="translate(.5,0)"/>
<path d="M1159 372h3v2h-3zM1159 371h3v7h-3zM1161 374h3v4h-3zM1161 376h3v1h-3zM1162 377h3v2h-3z" fill="#f00"/>
<path d="M1160 369V371M1160 374V375M1161 371V374M1161 378V386M1162 374V376M1162 377V379M1159 371h2v3h-2zM1160 374h2v5h-2zM1161 376h2v1h-2z" fill="none" stroke="#0a960a" transform="translate(.5,.5)"/>
<path d="M1164 375V377M1164 381V381M1164 372V374M1164 377V381M1166 375V376M1166 378V378M1166 368V370M1166 381V382M1163 377h2v4h-2zM1163 374h2v3h-2zM1165 376h2v2h-2zM1165 370h2v12h-2z" fill="none" stroke="#0a960a" transform="translate(.5,.5)"/>
<path d="M1164 374V382M1165 374V380M1166 372V383M1167 364V378" stroke="#f00" fill="none" transform="translate(.5,0)"/>
<path d="M1163 379h3v2h-3zM1164 374h3v4h-3zM1165 376h3v6h-3zM1166 370h3v7h-3z" fill="#f00"/>
<path d="M1168 365V383M1169 369V380M1170 372V379M1170 377V380" stroke="#f00" fill="none" transform="translate(.5,0)"/>
<path d="M1167 369h3v3h-3zM1168 371h3v4h-3zM1169 373h3v4h-3zM1169 378h3v2h-3z" fill="#f00"/>
<path d="M1168 368V371M1168 377V380M1168 365V369M1168 371V383M1170 371V373M1170 375V376M1171 378V378M1171 380V386M1167 371h2v6h-2zM1167 369h2v2h-2zM1169 373h2v2h-2zM1170 378h2v2h-2z" fill="none" stroke="#0a960a" transform="translate(.5,.5)"/>
<path d="M1172 375V376M1172 378V384M1173 305V305M1173 307V311M1171 376h2v2h-2zM1172 305h2v2h-2z" fill="none" stroke="#0a960a" transform="translate(.5,.5)"/>
<path d="M1172 374V379M1172 299V310M1174 303V322M1174 316V324M1174 319V324M1175 320V331" stroke="#f00" fill="none" transform="translate(.5,0)"/>
<path d="M1171 376h3v3h-3zM1171 305h3v2h-3zM1173 305h3v11h-3zM1173 317h3v6h-3zM1173 322h3v1h-3zM1174 324h3v6h-3z" fill="#f00"/>
<path d="M1177 320V328M1178 321V326" stroke="#f00" fill="none" transform="translate(.5,0)"/>
<path d="M1176 321h3v5h-3zM1177 324h3v1h-3z" fill="#f00"/>
<path d="M1176 327V328M1176 330V331M1176 323V326M1176 328V329M1176 319V321M1176 326V333M1178 317V324M1178 326V326M1178 321V323M1178 325V326M1179 318V319M1179 323V323M1175 328h2v2h-2zM1175 326h2v2h-2zM1175 321h2v4h-2zM1177 324h2v2h-2zM1177 323h2v2h-2zM1178 319h2v3h-2z" fill="none" stroke="#0a960a" transform="translate(.5,.5)"/>
<path d="M1180 321V326M1180 328V328M1180 324V324M1180 326V330M1181 322V322M1181 324V329M1182 318V320M1182 322V324M1183 326V327M1183 333V334M1179 326h2v2h-2zM1179 324h2v1h-2zM1180 322h2v2h-2zM1181 320h2v2h-2zM1182 327h2v6h-2z" fill="none" stroke="#0a960a" transform="translate(.5,.5)"/>
<path d="M1180 319V328M1182 320V331M1182 322V335" stroke="#f00" fill="none" transform="translate(.5,0)"/>
<path d="M1179 319h3v8h-3zM1181 320h3v4h-3zM1181 324h3v8h-3z" fill="#f00"/>
<path d="M1184 324V338M1185 317V337M1186 325V331" stroke="#f00" fill="none" transform="translate(.5,0)"/>
<path d="M1183 327h3v7h-3zM1184 328h3v2h-3zM1185 326h3v3h-3z" fill="#f00"/>
<path d="M1184 329V330M1184 333V336M1184 326V328M1184 330V332M1186 326V326M1186 330V331M1186 323V329M1186 330V333M1187 318V325M1187 329V330M1183 330h2v3h-2zM1183 328h2v2h-2zM1185 326h2v4h-2zM1185 329h2v1h-2zM1186 325h2v4h-2z" fill="none" stroke="#0a960a" transform="translate(.5,.5)"/>
<path d="M1188 324V326M1188 328V330M1188 318V323M1188 326V328M1191 339V342M1191 345V349M1187 326h2v2h-2zM1187 323h2v2h-2zM1190 342h2v3h-2z" fill="none" stroke="#0a960a" transform="translate(.5,.5)"/>
<path d="M1188 320V330M1189 321V333M1190 327V340M1190 336V344M1190 341V346" stroke="#f00" fill="none" transform="translate(.5,0)"/>
<path d="M1187 325h3v3h-3zM1188 323h3v8h-3zM1189 331h3v6h-3zM1189 338h3v3h-3zM1189 341h3v4h-3z" fill="#f00"/>
<path d="M1192 340V356M1192 353V358M1192 353V368M1193 358V368M1194 363V371M1194 365V377M1194 371V381M1195 378V382" stroke="#f00" fill="none" transform="translate(.5,0)"/>
<path d="M1191 342h3v13h-3zM1191 354h3v3h-3zM1191 357h3v5h-3zM1192 361h3v4h-3zM1193 365h3v5h-3zM1193 370h3v5h-3zM1193 375h3v5h-3zM1194 379h3v2h-3z" fill="#f00"/>
<path d="M1196 375V379M1196 381V382M1195 379h2v2h-2z" fill="none" stroke="#0a960a" transform="translate(.5,.5)"/>
<path d="M1196 376V385M1196 379V383M1197 382V390M1198 389V397M1198 396V399M1198 396V402M1199 396V412" stroke="#f00" fill="none" transform="translate(.5,0)"/>
<path d="M1195 379h3v4h-3zM1195 382h3v1h-3zM1196 383h3v6h-3zM1197 389h3v7h-3zM1197 396h3v2h-3zM1197 398h3v2h-3zM1198 400h3v9h-3z" fill="#f00"/>
<path d="M1200 401V416M1200 411V415M1200 414V421M1201 412V421" stroke="#f00" fill="none" transform="translate(.5,0)"/>
<path d="M1199 409h3v3h-3zM1199 412h3v2h-3zM1199 415h3v2h-3zM1200 417h3v1h-3z" fill="#f00"/>
<path d="M1202 413V414M1202 418V428M1202 403V403M1202 414V416M1202 393V398M1202 403V404M1203 394V395M1203 398V400M1201 414h2v4h-2zM1201 403h2v11h-2zM1201 398h2v6h-2zM1202 395h2v3h-2z" fill="none" stroke="#0a960a" transform="translate(.5,.5)"/>
<path d="M1204 389V393M1204 395V396M1204 390V392M1204 398V400M1205 389V390M1205 392V392M1206 389V390M1206 392V396M1207 385V389M1207 391V396M1203 393h2v2h-2zM1203 392h2v6h-2zM1204 390h2v2h-2zM1205 390h2v2h-2zM1206 389h2v2h-2z" fill="none" stroke="#0a960a" transform="translate(.5,.5)"/>
<path d="M1204 391V402M1206 388V395M1206 387V393" stroke="#f00" fill="none" transform="translate(.5,0)"/>
<path d="M1203 393h3v5h-3zM1205 390h3v2h-3zM1205 390h3v2h-3z" fill="#f00"/>
<path d="M1209 372V385M1211 370V377" stroke="#f00" fill="none" transform="translate(.5,0)"/>
<path d="M1208 375h3v7h-3zM1210 370h3v2h-3z" fill="#f00"/>
<path d="M1208 383V384M1208 389V390M1208 377V379M1208 384V388M1208 371V375M1208 379V381M1210 378V378M1210 382V384M1210 371V372M1210 378V380M1210 369V370M1210 372V373M1207 384h2v5h-2zM1207 379h2v5h-2zM1207 375h2v4h-2zM1209 378h2v4h-2zM1209 372h2v6h-2zM1209 370h2v2h-2z" fill="none" stroke="#0a960a" transform="translate(.5,.5)"/>
<path d="M1212 356V369M1212 372V375M1212 364V365M1212 369V371M1213 367V370M1213 372V374M1214 364V364M1214 370V370M1214 359V361M1214 371V379M1215 357V358M1215 361V365M1211 369h2v3h-2zM1211 365h2v4h-2zM1212 370h2v2h-2zM1213 364h2v6h-2zM1213 361h2v9h-2zM1214 358h2v3h-2z" fill="none" stroke="#0a960a" transform="translate(.5,.5)"/>
<path d="M1212 365V373M1214 362V375" stroke="#f00" fill="none" transform="translate(.5,0)"/>
<path d="M1211 365h3v7h-3zM1213 364h3v7h-3z" fill="#f00"/>
<path d="M1216 357V362M1216 350V356M1218 350V353M1218 350V355M1219 351V356" stroke="#f00" fill="none" transform="translate(.5,0)"/>
<path d="M1215 358h3v2h-3zM1215 354h3v2h-3zM1217 351h3v1h-3zM1217 352h3v2h-3zM1218 353h3v3h-3z" fill="#f00"/>
<path d="M1216 353V354M1216 360V365M1217 351V351M1217 356V361M1218 350V353M1218 355V357M1215 354h2v6h-2zM1216 351h2v5h-2zM1217 353h2v2h-2z" fill="none" stroke="#0a960a" transform="translate(.5,.5)"/>
<path d="M1220 353V357M1220 361V364M1222 352V356M1222 363V366M1222 351V354M1222 356V358M1223 348V353M1223 354V356M1219 357h2v4h-2zM1221 356h2v7h-2zM1221 354h2v2h-2zM1222 353h2v1h-2z" fill="none" stroke="#0a960a" transform="translate(.5,.5)"/>
<path d="M1220 352V362M1220 355V363M1221 355V361M1222 359V366" stroke="#f00" fill="none" transform="translate(.5,0)"/>
<path d="M1219 355h3v5h-3zM1219 360h3v1h-3zM1220 357h3v3h-3zM1221 360h3v2h-3z" fill="#f00"/>
<path d="M1224 335V344M1226 337V341M1226 333V345" stroke="#f00" fill="none" transform="translate(.5,0)"/>
<path d="M1223 339h3v2h-3zM1225 339h3v2h-3zM1225 339h3v3h-3z" fill="#f00"/>
<path d="M1224 348V350M1224 353V353M1224 338V339M1224 350V350M1225 338V339M1225 341V343M1226 338V339M1226 341V341M1227 336V338M1227 342V343M1223 350h2v3h-2zM1223 339h2v11h-2zM1224 339h2v2h-2zM1225 339h2v2h-2zM1226 338h2v4h-2z" fill="none" stroke="#0a960a" transform="translate(.5,.5)"/>
<path d="M1230 347V351M1230 354V358M1229 351h2v3h-2z" fill="none" stroke="#0a960a" transform="translate(.5,.5)"/>
<path d="M1228 335V347M1228 343V351M1228 344V351M1229 349V355M1230 351V355M1230 350V353M1231 351V359" stroke="#f00" fill="none" transform="translate(.5,0)"/>
<path d="M1227 338h3v6h-3zM1227 344h3v4h-3zM1227 348h3v2h-3zM1228 350h3v1h-3zM1229 352h3v2h-3zM1229 351h3v2h-3zM1230 353h3v2h-3z" fill="#f00"/>
<path d="M1232 348V362M1232 358V366M1233 362V366M1234 358V370" stroke="#f00" fill="none" transform="translate(.5,0)"/>
<path d="M1231 353h3v7h-3zM1231 360h3v3h-3zM1232 363h3v2h-3zM1233 359h3v6h-3z" fill="#f00"/>
<path d="M1232 351V353M1232 354V359M1234 360V363M1234 365V365M1234 355V359M1234 363V365M1235 359V359M1235 365V366M1231 353h2v1h-2zM1233 363h2v2h-2zM1233 359h2v4h-2zM1234 359h2v5h-2z" fill="none" stroke="#0a960a" transform="translate(.5,.5)"/>
<path d="M1236 357V358M1236 361V364M1236 351V356M1236 358V365M1237 350V352M1237 356V359M1238 342V346M1238 357V361M1235 358h2v3h-2zM1235 356h2v2h-2zM1236 352h2v4h-2zM1237 346h2v11h-2z" fill="none" stroke="#0a960a" transform="translate(.5,.5)"/>
<path d="M1236 358V365M1238 350V356M1238 354V359M1239 344V356" stroke="#f00" fill="none" transform="translate(.5,0)"/>
<path d="M1235 359h3v2h-3zM1237 352h3v3h-3zM1237 355h3v2h-3zM1238 346h3v2h-3z" fill="#f00"/>
<path d="M1240 346V358M1240 347V355M1240 351V358M1242 348V355M1242 353V358M1243 352V356" stroke="#f00" fill="none" transform="translate(.5,0)"/>
<path d="M1239 348h3v3h-3zM1239 351h3v2h-3zM1239 353h3v2h-3zM1241 350h3v4h-3zM1241 355h3v2h-3zM1242 353h3v2h-3z" fill="#f00"/>
<path d="M1241 349V350M1241 355V356M1242 350V353M1242 357V360M1240 350h2v5h-2zM1241 353h2v3h-2z" fill="none" stroke="#0a960a" transform="translate(.5,.5)"/>
<path d="M1244 350V352M1244 355V363M1244 353V353M1244 360V360M1246 356V359M1246 361V362M1246 355V356M1246 359V361M1247 346V349M1247 359V363M1243 352h2v3h-2zM1243 353h2v6h-2zM1245 359h2v2h-2zM1245 356h2v2h-2zM1246 349h2v10h-2z" fill="none" stroke="#0a960a" transform="translate(.5,.5)"/>
<path d="M1244 352V362M1245 352V363M1246 354V359" stroke="#f00" fill="none" transform="translate(.5,0)"/>
<path d="M1243 352h3v8h-3zM1244 353h3v7h-3zM1245 356h3v2h-3z" fill="#f00"/>
<path d="M1248 346V350M1249 344V350M1250 338V351" stroke="#f00" fill="none" transform="translate(.5,0)"/>
<path d="M1247 347h3v1h-3zM1248 345h3v4h-3zM1249 340h3v4h-3z" fill="#f00"/>
<path d="M1248 343V347M1248 349V353M1248 342V345M1248 348V354M1250 336V342M1250 348V350M1250 338V340M1250 342V344M1251 333V338M1251 344V344M1247 347h2v2h-2zM1247 345h2v4h-2zM1249 342h2v7h-2zM1249 340h2v2h-2zM1250 338h2v6h-2z" fill="none" stroke="#0a960a" transform="translate(.5,.5)"/>
<path d="M1252 334V337M1252 342V343M1252 332V334M1252 337V337M1253 330V332M1253 334V334M1254 330V331M1254 338V339M1251 337h2v6h-2zM1251 334h2v3h-2zM1252 332h2v2h-2zM1253 331h2v7h-2z" fill="none" stroke="#0a960a" transform="translate(.5,.5)"/>
<path d="M1252 337V343M1254 328V339M1254 328V335M1255 334V339" stroke="#f00" fill="none" transform="translate(.5,0)"/>
<path d="M1251 338h3v4h-3zM1253 332h3v6h-3zM1253 331h3v3h-3zM1254 335h3v2h-3z" fill="#f00"/>
<path d="M1256 328V334M1258 331V340M1258 331V341" stroke="#f00" fill="none" transform="translate(.5,0)"/>
<path d="M1255 330h3v4h-3zM1257 331h3v6h-3zM1257 331h3v6h-3z" fill="#f00"/>
<path d="M1256 335V335M1256 337V337M1256 328V330M1256 335V340M1257 331V331M1257 334V334M1258 331V331M1258 337V339M1259 320V331M1259 336V337M1255 335h2v2h-2zM1255 330h2v5h-2zM1256 331h2v2h-2zM1257 331h2v7h-2zM1258 331h2v6h-2z" fill="none" stroke="#0a960a" transform="translate(.5,.5)"/>
<path d="M1260 323V325M1260 331V332M1260 322V323M1260 325V326M1262 321V323M1262 330V331M1263 311V321M1263 329V330M1259 325h2v6h-2zM1259 323h2v2h-2zM1261 323h2v7h-2zM1262 321h2v8h-2z" fill="none" stroke="#0a960a" transform="translate(.5,.5)"/>
<path d="M1260 321V329M1261 325V335M1262 322V331M1262 327V333" stroke="#f00" fill="none" transform="translate(.5,0)"/>
<path d="M1259 323h3v5h-3zM1260 328h3v2h-3zM1261 323h3v4h-3zM1261 327h3v2h-3z" fill="#f00"/>
<path d="M1264 310V330M1264 326V342M1264 327V340M1266 329V344M1267 332V337" stroke="#f00" fill="none" transform="translate(.5,0)"/>
<path d="M1263 321h3v7h-3zM1263 328h3v3h-3zM1263 331h3v7h-3zM1265 332h3v6h-3zM1266 333h3v2h-3z" fill="#f00"/>
<path d="M1265 331V332M1265 338V340M1266 331V337M1266 338V345M1266 333V333M1266 337V338M1264 332h2v6h-2zM1265 337h2v1h-2zM1265 333h2v4h-2z" fill="none" stroke="#0a960a" transform="translate(.5,.5)"/>
<path d="M1268 321V332M1268 336V337M1268 328V330M1268 332V338M1268 323V328M1268 330V331M1269 320V326M1269 328V329M1270 323V326M1270 329V329M1270 323V323M1270 326V327M1267 332h2v4h-2zM1267 330h2v2h-2zM1267 328h2v2h-2zM1268 326h2v2h-2zM1269 326h2v2h-2zM1269 323h2v3h-2z" fill="none" stroke="#0a960a" transform="translate(.5,.5)"/>
<path d="M1270 325V329M1271 320V332" stroke="#f00" fill="none" transform="translate(.5,0)"/>
<path d="M1269 326h3v3h-3zM1270 323h3v7h-3z" fill="#f00"/>
<path d="M1272 319V327M1273 326V330M1274 327V330M1274 323V331" stroke="#f00" fill="none" transform="translate(.5,0)"/>
<path d="M1271 324h3v2h-3zM1272 326h3v2h-3zM1273 328h3v2h-3zM1273 325h3v6h-3z" fill="#f00"/>
<path d="M1272 325V326M1272 330V333M1272 322V324M1272 326V331M1274 324V325M1274 330V330M1275 325V329M1275 331V333M1271 326h2v4h-2zM1271 324h2v2h-2zM1273 325h2v5h-2zM1274 329h2v1h-2z" fill="none" stroke="#0a960a" transform="translate(.5,.5)"/>
<path d="M1276 325V326M1276 329V329M1276 321V324M1276 326V330M1277 327V327M1277 330V334M1278 324V329M1278 336V336M1275 326h2v4h-2zM1275 324h2v2h-2zM1276 327h2v2h-2zM1277 329h2v7h-2z" fill="none" stroke="#0a960a" transform="translate(.5,.5)"/>
<path d="M1276 321V331M1278 324V339M1278 327V335M1279 329V339" stroke="#f00" fill="none" transform="translate(.5,0)"/>
<path d="M1275 324h3v6h-3zM1277 327h3v9h-3zM1277 329h3v2h-3zM1278 331h3v5h-3z" fill="#f00"/>
<path d="M1280 334V341M1280 338V349M1280 345V358M1281 355V367M1282 354V358" stroke="#f00" fill="none" transform="translate(.5,0)"/>
<path d="M1279 336h3v5h-3zM1279 341h3v6h-3zM1279 348h3v9h-3zM1280 357h3v7h-3zM1281 354h3v4h-3z" fill="#f00"/>
<path d="M1282 355V356M1282 364V366M1282 351V354M1282 356V358M1283 353V356M1283 358V360M1281 356h2v9h-2zM1281 354h2v2h-2zM1282 356h2v2h-2z" fill="none" stroke="#0a960a" transform="translate(.5,.5)"/>
<path d="M1284 358V359M1284 364V364M1286 365V368M1286 372V373M1287 357V357M1287 371V372M1283 359h2v5h-2zM1285 368h2v4h-2zM1286 357h2v14h-2z" fill="none" stroke="#0a960a" transform="translate(.5,.5)"/>
<path d="M1284 355V364M1284 361V364M1285 354V373M1286 365V371M1286 367V372" stroke="#f00" fill="none" transform="translate(.5,0)"/>
<path d="M1283 356h3v6h-3zM1283 362h3v2h-3zM1284 359h3v13h-3zM1285 368h3v1h-3zM1285 369h3v2h-3z" fill="#f00"/>
<path d="M1288 354V360M1288 355V361M1290 336V344" stroke="#f00" fill="none" transform="translate(.5,0)"/>
<path d="M1287 357h3v2h-3zM1287 356h3v2h-3zM1289 336h3v3h-3z" fill="#f00"/>
<path d="M1288 354V356M1288 360V367M1289 350V351M1289 358V359M1290 341V344M1290 351V357M1290 334V336M1290 344V346M1291 337V338M1291 340V346M1287 356h2v3h-2zM1288 351h2v8h-2zM1289 344h2v7h-2zM1289 336h2v8h-2zM1290 338h2v2h-2z" fill="none" stroke="#0a960a" transform="translate(.5,.5)"/>
<path d="M1294 349V349M1294 351V354M1294 340V344M1294 349V354M1293 349h2v2h-2zM1293 344h2v5h-2z" fill="none" stroke="#0a960a" transform="translate(.5,.5)"/>
<path d="M1292 333V347M1292 343V347M1292 340V347M1293 341V353M1294 345V351M1295 344V353" stroke="#f00" fill="none" transform="translate(.5,0)"/>
<path d="M1291 338h3v5h-3zM1291 343h3v2h-3zM1291 345h3v2h-3zM1292 347h3v1h-3zM1293 348h3v3h-3zM1294 344h3v2h-3z" fill="#f00"/>
<path d="M1296 346V351M1296 347V357M1298 346V357M1298 346V353M1299 349V362" stroke="#f00" fill="none" transform="translate(.5,0)"/>
<path d="M1295 346h3v4h-3zM1295 350h3v2h-3zM1297 347h3v2h-3zM1297 348h3v3h-3zM1298 349h3v9h-3z" fill="#f00"/>
<path d="M1296 347V348M1296 352V357M1297 346V347M1297 348V349M1298 348V349M1298 351V353M1295 348h2v4h-2zM1296 347h2v1h-2zM1297 349h2v2h-2z" fill="none" stroke="#0a960a" transform="translate(.5,.5)"/>
<path d="M1300 354V355M1300 359V360M1300 352V353M1300 355V358M1300 349V351M1300 353V355M1302 350V353M1302 358V360M1302 352V356M1302 360V362M1299 355h2v4h-2zM1299 353h2v2h-2zM1299 351h2v2h-2zM1301 353h2v5h-2zM1301 356h2v4h-2z" fill="none" stroke="#0a960a" transform="translate(.5,.5)"/>
<path d="M1301 348V361M1302 350V364M1303 354V364" stroke="#f00" fill="none" transform="translate(.5,0)"/>
<path d="M1300 351h3v7h-3zM1301 353h3v7h-3zM1302 356h3v6h-3z" fill="#f00"/>
<path d="M1304 358V370M1304 361V366M1306 362V368M1307 353V360" stroke="#f00" fill="none" transform="translate(.5,0)"/>
<path d="M1303 362h3v5h-3zM1303 364h3v2h-3zM1305 364h3v2h-3zM1306 358h3v2h-3z" fill="#f00"/>
<path d="M1304 363V364M1304 367V367M1305 360V364M1305 366V366M1306 356V360M1306 366V367M1306 356V358M1306 360V365M1303 364h2v3h-2zM1304 364h2v1h-2zM1305 360h2v6h-2zM1305 358h2v2h-2z" fill="none" stroke="#0a960a" transform="translate(.5,.5)"/>
<path d="M1308 368V369M1308 370V372M1310 366V369M1310 371V376M1307 369h2v1h-2zM1309 369h2v2h-2z" fill="none" stroke="#0a960a" transform="translate(.5,.5)"/>
<path d="M1308 356V366M1308 363V373M1309 367V376M1310 365V384M1310 379V390M1311 384V394" stroke="#f00" fill="none" transform="translate(.5,0)"/>
<path d="M1307 360h3v5h-3zM1307 365h3v5h-3zM1308 369h3v2h-3zM1309 369h3v13h-3zM1309 382h3v3h-3zM1310 386h3v5h-3z" fill="#f00"/>
<path d="M1312 389V400M1312 395V408M1313 404V411M1314 405V409M1314 402V411" stroke="#f00" fill="none" transform="translate(.5,0)"/>
<path d="M1311 391h3v6h-3zM1311 397h3v10h-3zM1312 405h3v2h-3zM1313 407h3v1h-3zM1313 403h3v4h-3z" fill="#f00"/>
<path d="M1312 403V405M1312 407V408M1314 402V403M1314 409V410M1315 398V400M1315 407V409M1311 405h2v2h-2zM1313 403h2v6h-2zM1314 400h2v7h-2z" fill="none" stroke="#0a960a" transform="translate(.5,.5)"/>
<path d="M1316 400V401M1316 403V404M1316 399V399M1316 401V402M1318 397V398M1318 402V406M1318 390V398M1318 402V403M1315 401h2v2h-2zM1315 399h2v2h-2zM1317 398h2v5h-2zM1317 398h2v4h-2z" fill="none" stroke="#0a960a" transform="translate(.5,.5)"/>
<path d="M1316 400V403M1317 398V403M1318 392V406M1319 398V401" stroke="#f00" fill="none" transform="translate(.5,0)"/>
<path d="M1315 400h3v3h-3zM1316 399h3v3h-3zM1317 398h3v4h-3zM1318 398h3v3h-3z" fill="#f00"/>
<path d="M1320 393V397M1320 395V401M1321 393V412M1322 391V403" stroke="#f00" fill="none" transform="translate(.5,0)"/>
<path d="M1319 395h3v2h-3zM1319 397h3v1h-3zM1320 398h3v4h-3zM1321 395h3v4h-3z" fill="#f00"/>
<path d="M1320 391V395M1320 401V406M1322 398V399M1322 402V405M1322 393V395M1322 399V402M1323 396V396M1323 399V401M1319 395h2v6h-2zM1321 399h2v3h-2zM1321 395h2v3h-2zM1322 396h2v3h-2z" fill="none" stroke="#0a960a" transform="translate(.5,.5)"/>
<path d="M1324 400V401M1324 403V405M1325 396V399M1325 403V404M1327 395V403M1327 405V410M1323 401h2v2h-2zM1324 399h2v3h-2zM1326 403h2v2h-2z" fill="none" stroke="#0a960a" transform="translate(.5,.5)"/>
<path d="M1324 389V404M1324 401V403M1326 399V402M1326 401V405M1326 401V410" stroke="#f00" fill="none" transform="translate(.5,0)"/>
<path d="M1323 396h3v7h-3zM1323 401h3v2h-3zM1325 399h3v2h-3zM1325 401h3v2h-3zM1325 403h3v2h-3z" fill="#f00"/>
<path d="M1328 398V405M1328 400V406M1330 396V408M1330 394V408" stroke="#f00" fill="none" transform="translate(.5,0)"/>
<path d="M1327 400h3v1h-3zM1327 402h3v2h-3zM1329 397h3v6h-3zM1329 396h3v2h-3z" fill="#f00"/>
<path d="M1328 400V400M1328 403V406M1329 395V397M1329 404V409M1330 392V396M1330 403V409M1331 385V395M1331 398V398M1327 400h2v3h-2zM1328 397h2v7h-2zM1329 396h2v7h-2zM1330 395h2v3h-2z" fill="none" stroke="#0a960a" transform="translate(.5,.5)"/>
<path d="M1332 392V393M1332 395V395M1332 391V392M1332 394V396M1334 391V392M1334 394V399M1334 390V393M1334 395V396M1335 389V391M1335 393V394M1331 393h2v2h-2zM1331 392h2v2h-2zM1333 392h2v2h-2zM1333 393h2v2h-2zM1334 391h2v2h-2z" fill="none" stroke="#0a960a" transform="translate(.5,.5)"/>
<path d="M1332 391V400M1333 388V396M1334 390V396" stroke="#f00" fill="none" transform="translate(.5,0)"/>
<path d="M1331 393h3v1h-3zM1332 392h3v2h-3zM1333 392h3v3h-3z" fill="#f00"/>
<path d="M1336 389V393M1336 391V400M1337 385V392M1338 386V395M1339 381V387" stroke="#f00" fill="none" transform="translate(.5,0)"/>
<path d="M1335 391h3v1h-3zM1335 392h3v4h-3zM1336 388h3v2h-3zM1337 390h3v4h-3zM1338 385h3v2h-3z" fill="#f00"/>
<path d="M1336 383V388M1336 397V399M1338 385V387M1338 394V397M1338 383V385M1338 387V387M1335 388h2v9h-2zM1337 387h2v7h-2zM1337 385h2v2h-2z" fill="none" stroke="#0a960a" transform="translate(.5,.5)"/>
<path d="M1340 381V383M1340 387V390M1340 380V380M1340 383V383M1340 371V372M1340 380V386M1342 375V377M1342 379V379M1342 372V373M1342 377V377M1343 374V374M1343 375V378M1339 383h2v4h-2zM1339 380h2v2h-2zM1339 372h2v8h-2zM1341 377h2v2h-2zM1341 373h2v3h-2zM1342 374h2v2h-2z" fill="none" stroke="#0a960a" transform="translate(.5,.5)"/>
<path d="M1341 369V380M1342 371V378" stroke="#f00" fill="none" transform="translate(.5,0)"/>
<path d="M1340 372h3v7h-3zM1341 373h3v2h-3z" fill="#f00"/>
<path d="M1344 364V376" stroke="#f00" fill="none" transform="translate(.5,0)"/>
<path d="M1343 367h3v6h-3z" fill="#f00"/>
<path d="M1344 372V372M1344 374V376M1344 364V367M1344 372V372M1345 372V372M1345 374V376M1346 368V368M1346 372V374M1346 361V363M1346 368V370M1346 351V359M1346 363V366M1347 356V357M1347 359V360M1343 372h2v2h-2zM1343 367h2v4h-2zM1344 372h2v2h-2zM1345 368h2v3h-2zM1345 363h2v6h-2zM1345 359h2v4h-2zM1346 357h2v2h-2z" fill="none" stroke="#0a960a" transform="translate(.5,.5)"/>
<path d="M1348 350V350M1348 357V358M1348 345V346M1348 350V354M1348 339V340M1348 346V346M1350 342V344M1350 348V352M1351 341V344M1351 346V346M1347 350h2v6h-2zM1347 346h2v4h-2zM1347 340h2v6h-2zM1349 344h2v4h-2zM1350 344h2v2h-2z" fill="none" stroke="#0a960a" transform="translate(.5,.5)"/>
<path d="M1349 339V343M1350 340V349M1350 344V347" stroke="#f00" fill="none" transform="translate(.5,0)"/>
<path d="M1348 340h3v2h-3zM1349 342h3v6h-3zM1349 344h3v2h-3z" fill="#f00"/>
<path d="M1352 342V354M1353 348V355M1354 335V355M1355 341V350" stroke="#f00" fill="none" transform="translate(.5,0)"/>
<path d="M1351 344h3v9h-3zM1352 348h3v3h-3zM1353 345h3v3h-3zM1354 345h3v1h-3z" fill="#f00"/>
<path d="M1352 347V350M1352 352V353M1352 346V348M1352 350V353M1354 343V345M1354 351V353M1354 343V345M1354 348V349M1351 350h2v2h-2zM1351 348h2v2h-2zM1353 345h2v6h-2zM1353 345h2v3h-2z" fill="none" stroke="#0a960a" transform="translate(.5,.5)"/>
<path d="M1356 344V344M1356 346V351M1357 342V344M1357 350V352M1358 349V351M1358 356V358M1355 344h2v2h-2zM1356 344h2v5h-2zM1357 351h2v5h-2z" fill="none" stroke="#0a960a" transform="translate(.5,.5)"/>
<path d="M1356 333V348M1356 345V351M1358 341V352M1358 345V360M1359 348V359" stroke="#f00" fill="none" transform="translate(.5,0)"/>
<path d="M1355 344h3v2h-3zM1355 346h3v3h-3zM1357 344h3v3h-3zM1357 348h3v8h-3zM1358 351h3v2h-3z" fill="#f00"/>
<path d="M1360 351V355M1360 346V355M1361 349V360M1362 352V360M1362 357V366M1363 360V366" stroke="#f00" fill="none" transform="translate(.5,0)"/>
<path d="M1359 353h3v2h-3zM1359 352h3v1h-3zM1360 353h3v7h-3zM1361 357h3v2h-3zM1361 359h3v1h-3zM1362 360h3v4h-3z" fill="#f00"/>
<path d="M1360 351V352M1360 354V355M1362 354V357M1362 360V363M1359 352h2v2h-2zM1361 357h2v3h-2z" fill="none" stroke="#0a960a" transform="translate(.5,.5)"/>
<path d="M1364 359V363M1364 365V365M1366 368V370M1366 372V372M1366 367V370M1366 372V375M1363 363h2v2h-2zM1365 370h2v1h-2zM1365 370h2v2h-2z" fill="none" stroke="#0a960a" transform="translate(.5,.5)"/>
<path d="M1364 362V367M1364 361V368M1365 365V373M1366 367V374M1367 370V380" stroke="#f00" fill="none" transform="translate(.5,0)"/>
<path d="M1363 363h3v2h-3zM1363 365h3v3h-3zM1364 368h3v4h-3zM1365 370h3v2h-3zM1366 370h3v7h-3z" fill="#f00"/>
<path d="M1368 373V381M1368 376V382M1370 371V383M1370 379V383M1371 378V392" stroke="#f00" fill="none" transform="translate(.5,0)"/>
<path d="M1367 377h3v2h-3zM1367 376h3v3h-3zM1369 376h3v4h-3zM1369 379h3v2h-3zM1370 380h3v8h-3z" fill="#f00"/>
<path d="M1368 376V376M1368 379V384M1369 373V376M1369 379V382M1370 379V380M1370 381V383M1367 376h2v3h-2zM1368 376h2v4h-2zM1369 380h2v1h-2z" fill="none" stroke="#0a960a" transform="translate(.5,.5)"/>
<path d="M1372 382V386M1372 388V389M1374 393V396M1374 398V400M1375 392V397M1375 399V402M1371 386h2v2h-2zM1373 396h2v3h-2zM1374 397h2v2h-2z" fill="none" stroke="#0a960a" transform="translate(.5,.5)"/>
<path d="M1372 382V393M1372 387V392M1373 390V398M1374 394V400M1374 394V401" stroke="#f00" fill="none" transform="translate(.5,0)"/>
<path d="M1371 386h3v2h-3zM1371 389h3v2h-3zM1372 391h3v5h-3zM1373 395h3v3h-3zM1373 396h3v4h-3z" fill="#f00"/>
<path d="M1376 392V400M1377 388V393M1378 385V387M1379 379V395" stroke="#f00" fill="none" transform="translate(.5,0)"/>
<path d="M1375 393h3v6h-3zM1376 390h3v2h-3zM1377 385h3v1h-3zM1378 383h3v2h-3z" fill="#f00"/>
<path d="M1376 392V393M1376 397V402M1376 389V390M1376 399V402M1378 382V385M1378 392V394M1378 380V383M1378 386V388M1375 393h2v4h-2zM1375 390h2v8h-2zM1377 385h2v7h-2zM1377 383h2v3h-2z" fill="none" stroke="#0a960a" transform="translate(.5,.5)"/>
<path d="M1380 384V384M1380 386V389M1382 383V384M1382 391V392M1383 384V386M1383 388V390M1379 384h2v2h-2zM1381 384h2v7h-2zM1382 386h2v2h-2z" fill="none" stroke="#0a960a" transform="translate(.5,.5)"/>
<path d="M1380 381V388M1380 382V389M1381 384V392M1382 382V392M1382 385V390" stroke="#f00" fill="none" transform="translate(.5,0)"/>
<path d="M1379 385h3v1h-3zM1379 384h3v3h-3zM1380 387h3v4h-3zM1381 384h3v1h-3zM1381 385h3v3h-3z" fill="#f00"/>
<path d="M1384 384V390M1384 385V396M1385 382V394M1386 388V394M1386 387V394" stroke="#f00" fill="none" transform="translate(.5,0)"/>
<path d="M1383 386h3v2h-3zM1383 388h3v6h-3zM1384 385h3v3h-3zM1385 388h3v2h-3zM1385 388h3v4h-3z" fill="#f00"/>
<path d="M1384 384V385M1384 395V396M1386 386V388M1386 390V394M1387 387V388M1387 392V394M1383 385h2v10h-2zM1385 388h2v2h-2zM1386 388h2v5h-2z" fill="none" stroke="#0a960a" transform="translate(.5,.5)"/>
<path d="M1388 388V392M1388 394V394M1388 385V389M1388 392V393M1390 384V389M1390 393V399M1390 382V385M1390 389V390M1391 382V382M1391 386V387M1387 392h2v2h-2zM1387 389h2v3h-2zM1389 389h2v5h-2zM1389 385h2v3h-2zM1390 382h2v4h-2z" fill="none" stroke="#0a960a" transform="translate(.5,.5)"/>
<path d="M1388 387V396M1389 386V396M1390 380V389" stroke="#f00" fill="none" transform="translate(.5,0)"/>
<path d="M1387 388h3v6h-3zM1388 389h3v4h-3zM1389 385h3v1h-3z" fill="#f00"/>
<path d="M1392 377V397M1393 376V385M1394 381V387M1394 380V382M1395 381V391" stroke="#f00" fill="none" transform="translate(.5,0)"/>
<path d="M1391 381h3v2h-3zM1392 379h3v5h-3zM1393 384h3v2h-3zM1393 380h3v2h-3zM1394 382h3v8h-3z" fill="#f00"/>
<path d="M1392 379V381M1392 382V385M1392 376V379M1392 383V384M1394 379V380M1394 386V388M1391 381h2v1h-2zM1391 379h2v4h-2zM1393 380h2v6h-2z" fill="none" stroke="#0a960a" transform="translate(.5,.5)"/>
<path d="M1396 385V388M1396 390V392M1396 384V387M1396 390V392M1397 383V385M1397 387V387M1398 379V383M1398 385V385M1398 359V373M1398 385V385M1399 372V372M1399 373V375M1395 388h2v2h-2zM1395 387h2v3h-2zM1396 385h2v2h-2zM1397 383h2v2h-2zM1397 373h2v12h-2zM1398 372h2v1h-2z" fill="none" stroke="#0a960a" transform="translate(.5,.5)"/>
<path d="M1396 386V390M1398 380V387" stroke="#f00" fill="none" transform="translate(.5,0)"/>
<path d="M1395 388h3v2h-3zM1397 383h3v3h-3z" fill="#f00"/>
<path d="M1400 351V359M1401 355V368M1402 355V366M1402 362V378M1403 372V378" stroke="#f00" fill="none" transform="translate(.5,0)"/>
<path d="M1399 356h3v2h-3zM1400 359h3v6h-3zM1401 361h3v1h-3zM1401 363h3v10h-3zM1402 372h3v2h-3z" fill="#f00"/>
<path d="M1400 363V363M1400 372V374M1400 356V356M1400 363V364M1402 357V361M1402 364V368M1399 363h2v8h-2zM1399 356h2v7h-2zM1401 361h2v3h-2z" fill="none" stroke="#0a960a" transform="translate(.5,.5)"/>
<path d="M1404 378V378M1404 381V388M1405 373V374M1405 378V380M1406 379V379M1406 381V381M1403 378h2v3h-2zM1404 374h2v4h-2zM1405 379h2v1h-2z" fill="none" stroke="#0a960a" transform="translate(.5,.5)"/>
<path d="M1404 371V379M1404 379V383M1406 373V386M1406 378V383M1407 378V389" stroke="#f00" fill="none" transform="translate(.5,0)"/>
<path d="M1403 374h3v5h-3zM1403 379h3v2h-3zM1405 374h3v5h-3zM1405 379h3v2h-3zM1406 379h3v7h-3z" fill="#f00"/>
<path d="M1408 384V392M1410 376V381M1410 373V380" stroke="#f00" fill="none" transform="translate(.5,0)"/>
<path d="M1407 386h3v4h-3zM1409 378h3v2h-3zM1409 375h3v5h-3z" fill="#f00"/>
<path d="M1408 383V383M1408 391V394M1408 380V380M1408 383V386M1409 375V378M1409 380V381M1410 373V375M1410 380V381M1411 375V377M1411 379V381M1407 383h2v8h-2zM1407 380h2v3h-2zM1408 378h2v2h-2zM1409 375h2v6h-2zM1410 377h2v2h-2z" fill="none" stroke="#0a960a" transform="translate(.5,.5)"/>
<path d="M1412 370V374M1412 377V387M1412 366V369M1412 374V382M1413 367V372M1413 375V377M1414 369V371M1414 373V376M1415 372V373M1415 375V375M1411 374h2v3h-2zM1411 369h2v5h-2zM1412 372h2v3h-2zM1413 371h2v2h-2zM1414 373h2v2h-2z" fill="none" stroke="#0a960a" transform="translate(.5,.5)"/>
<path d="M1412 368V376M1414 368V375M1414 368V376" stroke="#f00" fill="none" transform="translate(.5,0)"/>
<path d="M1411 369h3v6h-3zM1413 372h3v1h-3zM1413 371h3v4h-3z" fill="#f00"/>
<path d="M1416 363V383M1416 378V385M1416 379V387M1418 378V388" stroke="#f00" fill="none" transform="translate(.5,0)"/>
<path d="M1415 373h3v6h-3zM1415 379h3v3h-3zM1415 382h3v3h-3zM1417 380h3v3h-3z" fill="#f00"/>
<path d="M1417 382V383M1417 385V387M1418 381V381M1418 383V387M1418 376V380M1418 381V385M1419 379V382M1419 384V384M1416 383h2v2h-2zM1417 381h2v2h-2zM1417 380h2v1h-2zM1418 382h2v1h-2z" fill="none" stroke="#0a960a" transform="translate(.5,.5)"/>
<path d="M1420 380V380M1420 382V385M1420 375V378M1420 380V380M1420 373V373M1420 378V382M1422 366V370M1422 375V375M1422 364V368M1422 372V374M1419 380h2v2h-2zM1419 378h2v2h-2zM1419 373h2v5h-2zM1421 370h2v5h-2zM1421 368h2v4h-2z" fill="none" stroke="#0a960a" transform="translate(.5,.5)"/>
<path d="M1421 372V379M1422 369V375M1423 366V370" stroke="#f00" fill="none" transform="translate(.5,0)"/>
<path d="M1420 373h3v2h-3zM1421 370h3v2h-3zM1422 368h3v2h-3z" fill="#f00"/>
<path d="M1424 357V376M1424 366V376M1426 365V373M1427 359V378" stroke="#f00" fill="none" transform="translate(.5,0)"/>
<path d="M1423 370h3v4h-3zM1423 370h3v4h-3zM1425 368h3v2h-3zM1426 367h3v5h-3z" fill="#f00"/>
<path d="M1424 365V370M1424 374V374M1425 363V369M1425 374V376M1426 367V368M1426 369V374M1426 365V367M1426 370V372M1423 370h2v4h-2zM1424 369h2v5h-2zM1425 368h2v1h-2zM1425 367h2v4h-2z" fill="none" stroke="#0a960a" transform="translate(.5,.5)"/>
<path d="M1428 367V367M1428 372V374M1428 363V364M1428 367V367M1430 367V370M1430 371V372M1430 364V368M1430 370V371M1430 362V366M1430 368V369M1427 367h2v5h-2zM1427 364h2v3h-2zM1429 370h2v1h-2zM1429 368h2v2h-2zM1429 366h2v2h-2z" fill="none" stroke="#0a960a" transform="translate(.5,.5)"/>
<path d="M1428 362V370M1429 369V383M1431 365V378" stroke="#f00" fill="none" transform="translate(.5,0)"/>
<path d="M1427 364h3v5h-3zM1428 369h3v2h-3zM1430 366h3v8h-3z" fill="#f00"/>
<path d="M1432 362V373M1434 366V379M1435 367V373" stroke="#f00" fill="none" transform="translate(.5,0)"/>
<path d="M1431 365h3v6h-3zM1433 369h3v6h-3zM1434 371h3v1h-3z" fill="#f00"/>
<path d="M1432 364V368M1432 374V376M1432 365V365M1432 368V370M1433 363V369M1433 371V373M1434 359V372M1434 375V379M1434 369V371M1434 372V374M1431 368h2v6h-2zM1431 365h2v2h-2zM1432 369h2v2h-2zM1433 372h2v3h-2zM1433 371h2v1h-2z" fill="none" stroke="#0a960a" transform="translate(.5,.5)"/>
<path d="M1436 372V374M1436 379V380M1437 373V375M1437 380V380M1438 368V371M1438 375V377M1438 368V369M1438 371V374M1439 376V377M1439 379V380M1435 374h2v5h-2zM1436 375h2v4h-2zM1437 371h2v5h-2zM1437 369h2v1h-2zM1438 377h2v2h-2z" fill="none" stroke="#0a960a" transform="translate(.5,.5)"/>
<path d="M1436 372V382M1436 371V380M1438 369V383" stroke="#f00" fill="none" transform="translate(.5,0)"/>
<path d="M1435 372h3v7h-3zM1435 374h3v6h-3zM1437 369h3v10h-3z" fill="#f00"/>
<path d="M1440 373V389M1442 375V381" stroke="#f00" fill="none" transform="translate(.5,0)"/>
<path d="M1439 375h3v11h-3zM1441 377h3v3h-3z" fill="#f00"/>
<path d="M1440 374V375M1440 377V383M1440 380V380M1440 387V389M1441 377V379M1441 380V382M1442 374V377M1442 379V383M1442 378V379M1442 381V384M1443 377V377M1443 379V380M1439 375h2v2h-2zM1439 380h2v6h-2zM1440 379h2v1h-2zM1441 377h2v2h-2zM1441 379h2v2h-2zM1442 377h2v2h-2z" fill="none" stroke="#0a960a" transform="translate(.5,.5)"/>
<path d="M1446 377V382M1446 385V386M1445 382h2v3h-2z" fill="none" stroke="#0a960a" transform="translate(.5,.5)"/>
<path d="M1444 376V381M1444 378V382M1444 380V387M1445 382V386M1446 380V385M1446 382V394M1447 390V397" stroke="#f00" fill="none" transform="translate(.5,0)"/>
<path d="M1443 377h3v3h-3zM1443 379h3v2h-3zM1443 381h3v2h-3zM1444 383h3v2h-3zM1445 382h3v3h-3zM1445 385h3v7h-3zM1446 392h3v2h-3z" fill="#f00"/>
<path d="M1448 389V397M1449 389V395M1450 380V400" stroke="#f00" fill="none" transform="translate(.5,0)"/>
<path d="M1447 394h3v2h-3zM1448 391h3v2h-3zM1449 383h3v5h-3z" fill="#f00"/>
<path d="M1448 391V393M1448 396V398M1448 389V391M1448 393V394M1450 385V389M1450 393V396M1450 383V383M1450 389V396M1451 382V386M1451 387V394M1447 393h2v2h-2zM1447 391h2v2h-2zM1449 389h2v4h-2zM1449 383h2v6h-2zM1450 386h2v1h-2z" fill="none" stroke="#0a960a" transform="translate(.5,.5)"/>
<path d="M1452 371V380M1452 389V393M1453 383V383M1453 385V387M1454 386V387M1454 390V396M1451 380h2v9h-2zM1452 383h2v2h-2zM1453 387h2v3h-2z" fill="none" stroke="#0a960a" transform="translate(.5,.5)"/>
<path d="M1452 384V389M1452 376V386M1454 382V390M1454 385V394M1455 379V394" stroke="#f00" fill="none" transform="translate(.5,0)"/>
<path d="M1451 386h3v3h-3zM1451 380h3v5h-3zM1453 383h3v2h-3zM1453 385h3v5h-3zM1454 387h3v4h-3z" fill="#f00"/>
<path d="M1456 382V387M1456 379V389M1457 380V392M1458 383V396M1459 391V401" stroke="#f00" fill="none" transform="translate(.5,0)"/>
<path d="M1455 384h3v1h-3zM1455 386h3v2h-3zM1456 388h3v4h-3zM1457 388h3v6h-3zM1458 395h3v5h-3z" fill="#f00"/>
<path d="M1456 383V384M1456 391V392M1458 387V390M1458 392V397M1458 388V388M1458 390V391M1455 384h2v7h-2zM1457 390h2v2h-2zM1457 388h2v2h-2z" fill="none" stroke="#0a960a" transform="translate(.5,.5)"/>
<path d="M1460 390V394M1460 399V403M1459 394h2v5h-2z" fill="none" stroke="#0a960a" transform="translate(.5,.5)"/>
<path d="M1460 391V401M1460 396V405M1461 399V402M1462 398V406M1462 399V414M1462 410V415M1463 412V416" stroke="#f00" fill="none" transform="translate(.5,0)"/>
<path d="M1459 394h3v3h-3zM1459 397h3v3h-3zM1460 400h3v2h-3zM1461 402h3v2h-3zM1461 404h3v6h-3zM1461 411h3v3h-3zM1462 413h3v2h-3z" fill="#f00"/>
<path d="M1464 413V420M1464 416V420M1464 419V424M1465 411V428M1466 422V443M1466 423V437M1467 433V440" stroke="#f00" fill="none" transform="translate(.5,0)"/>
<path d="M1463 415h3v2h-3zM1463 417h3v2h-3zM1463 420h3v1h-3zM1464 421h3v2h-3zM1465 423h3v6h-3zM1465 427h3v8h-3zM1466 435h3v4h-3z" fill="#f00"/>
<path d="M1466 422V427M1466 429V429M1465 427h2v2h-2z" fill="none" stroke="#0a960a" transform="translate(.5,.5)"/>
<path d="M1468 443V443M1468 448V452M1470 428V439M1470 444V449M1470 433V437M1470 439V440M1471 434V436M1471 443V445M1467 443h2v5h-2zM1469 439h2v6h-2zM1469 437h2v2h-2zM1470 436h2v8h-2z" fill="none" stroke="#0a960a" transform="translate(.5,.5)"/>
<path d="M1468 438V445M1468 439V464M1469 439V448M1470 436V445" stroke="#f00" fill="none" transform="translate(.5,0)"/>
<path d="M1467 439h3v2h-3zM1467 441h3v7h-3zM1468 443h3v1h-3zM1469 437h3v7h-3z" fill="#f00"/>
<path d="M1472 435V445M1472 436V442M1473 432V439M1474 429V435M1474 429V440M1475 433V444" stroke="#f00" fill="none" transform="translate(.5,0)"/>
<path d="M1471 436h3v3h-3zM1471 438h3v2h-3zM1472 433h3v5h-3zM1473 431h3v2h-3zM1473 434h3v2h-3zM1474 436h3v5h-3z" fill="#f00"/>
<path d="M1472 432V433M1472 440V442M1474 430V431M1474 438V438M1471 433h2v7h-2zM1473 431h2v6h-2z" fill="none" stroke="#0a960a" transform="translate(.5,.5)"/>
<path d="M1476 435V436M1476 440V443M1476 429V436M1476 438V442M1477 430V433M1477 436V436M1478 429V431M1478 433V434M1478 430V431M1478 435V437M1479 427V428M1479 431V433M1475 436h2v4h-2zM1475 436h2v2h-2zM1476 433h2v3h-2zM1477 431h2v2h-2zM1477 431h2v4h-2zM1478 428h2v4h-2z" fill="none" stroke="#0a960a" transform="translate(.5,.5)"/>
<path d="M1476 430V439M1478 429V436" stroke="#f00" fill="none" transform="translate(.5,0)"/>
<path d="M1475 436h3v2h-3zM1477 431h3v4h-3z" fill="#f00"/>
<path d="M1480 423V432M1481 413V429M1482 416V428" stroke="#f00" fill="none" transform="translate(.5,0)"/>
<path d="M1479 428h3v4h-3zM1480 426h3v3h-3zM1481 418h3v10h-3z" fill="#f00"/>
<path d="M1480 424V429M1480 431V434M1480 423V426M1480 429V434M1482 420V421M1482 429V432M1482 415V418M1482 421V425M1483 423V426M1483 427V434M1479 429h2v2h-2zM1479 426h2v3h-2zM1481 421h2v8h-2zM1481 418h2v3h-2zM1482 426h2v2h-2z" fill="none" stroke="#0a960a" transform="translate(.5,.5)"/>
<path d="M1484 414V415M1484 426V426M1484 415V416M1484 417V417M1485 411V414M1485 416V419M1486 406V406M1486 414V415M1486 400V404M1486 406V409M1486 398V398M1486 404V406M1487 388V390M1487 398V398M1483 415h2v11h-2zM1483 416h2v1h-2zM1484 414h2v2h-2zM1485 406h2v8h-2zM1485 404h2v2h-2zM1485 398h2v6h-2zM1486 390h2v8h-2z" fill="none" stroke="#0a960a" transform="translate(.5,.5)"/>
<path d="M1484 410V418" stroke="#f00" fill="none" transform="translate(.5,0)"/>
<path d="M1483 415h3v2h-3z" fill="#f00"/>
<path d="M1489 374V382" stroke="#f00" fill="none" transform="translate(.5,0)"/>
<path d="M1488 375h3v2h-3z" fill="#f00"/>
<path d="M1488 382V385M1488 390V391M1488 381V384M1488 385V388M1488 372V375M1488 384V385M1490 349V353M1490 358V359M1490 338V342M1490 353V353M1490 323V331M1490 342V342M1491 316V319M1491 331V333M1487 385h2v5h-2zM1487 384h2v1h-2zM1487 375h2v9h-2zM1489 353h2v5h-2zM1489 342h2v11h-2zM1489 331h2v11h-2zM1490 319h2v12h-2z" fill="none" stroke="#0a960a" transform="translate(.5,.5)"/>
<path d="M1493 325V326M1493 331V331M1495 330V331M1495 334V335M1492 326h2v5h-2zM1494 331h2v4h-2z" fill="none" stroke="#0a960a" transform="translate(.5,.5)"/>
<path d="M1492 319V332M1492 322V330M1492 323V335M1494 326V330M1494 324V334M1494 325V335" stroke="#f00" fill="none" transform="translate(.5,0)"/>
<path d="M1491 319h3v5h-3zM1491 324h3v5h-3zM1491 329h3v2h-3zM1493 326h3v2h-3zM1493 327h3v5h-3zM1493 332h3v2h-3z" fill="#f00"/>
<path d="M1496 330V336M1496 335V339M1498 330V338M1498 333V345M1499 334V345" stroke="#f00" fill="none" transform="translate(.5,0)"/>
<path d="M1495 331h3v5h-3zM1495 335h3v3h-3zM1497 332h3v5h-3zM1497 337h3v5h-3zM1498 339h3v4h-3z" fill="#f00"/>
<path d="M1496 324V334M1496 338V339M1497 331V332M1497 334V337M1498 339V339M1498 342V345M1495 334h2v4h-2zM1496 332h2v2h-2zM1497 339h2v3h-2z" fill="none" stroke="#0a960a" transform="translate(.5,.5)"/>
<path d="M1500 343V344M1500 346V350M1501 343V345M1501 347V350M1502 346V346M1502 347V350M1502 342V342M1502 346V349M1503 339V340M1503 342V344M1499 344h2v2h-2zM1500 345h2v2h-2zM1501 346h2v1h-2zM1501 342h2v4h-2zM1502 340h2v2h-2z" fill="none" stroke="#0a960a" transform="translate(.5,.5)"/>
<path d="M1500 343V348M1500 342V347M1502 340V351" stroke="#f00" fill="none" transform="translate(.5,0)"/>
<path d="M1499 343h3v3h-3zM1499 344h3v3h-3zM1501 345h3v2h-3z" fill="#f00"/>
<path d="M1505 330V344" stroke="#f00" fill="none" transform="translate(.5,0)"/>
<path d="M1504 333h3v9h-3z" fill="#f00"/>
<path d="M1504 335V337M1504 340V342M1504 335V336M1504 337V339M1504 332V333M1504 336V338M1506 330V333M1506 342V343M1506 326V329M1506 333V336M1506 322V326M1506 329V330M1507 317V318M1507 326V328M1503 337h2v3h-2zM1503 336h2v1h-2zM1503 333h2v3h-2zM1505 333h2v9h-2zM1505 329h2v4h-2zM1505 326h2v3h-2zM1506 318h2v8h-2z" fill="none" stroke="#0a960a" transform="translate(.5,.5)"/>
<path d="M1508 316V316M1508 318V328M1508 300V305M1508 316V324M1510 318V324M1510 328V329M1507 316h2v2h-2zM1507 305h2v11h-2zM1509 324h2v4h-2z" fill="none" stroke="#0a960a" transform="translate(.5,.5)"/>
<path d="M1508 302V313M1509 310V321M1510 318V330M1510 324V329M1511 322V332" stroke="#f00" fill="none" transform="translate(.5,0)"/>
<path d="M1507 305h3v8h-3zM1508 313h3v7h-3zM1509 320h3v6h-3zM1509 325h3v3h-3zM1510 324h3v8h-3z" fill="#f00"/>
<path d="M1512 329V335M1512 331V337M1514 328V333M1515 330V337" stroke="#f00" fill="none" transform="translate(.5,0)"/>
<path d="M1511 330h3v2h-3zM1511 332h3v4h-3zM1513 329h3v1h-3zM1514 330h3v5h-3z" fill="#f00"/>
<path d="M1512 321V330M1512 332V333M1513 332V334M1513 336V338M1514 328V331M1514 334V336M1514 328V329M1514 331V331M1511 330h2v2h-2zM1512 334h2v2h-2zM1513 331h2v4h-2zM1513 329h2v2h-2z" fill="none" stroke="#0a960a" transform="translate(.5,.5)"/>
<path d="M1516 325V333M1516 335V340M1516 324V327M1516 333V333M1517 327V331M1517 336V339M1518 336V338M1518 339V346M1519 336V338M1519 342V344M1515 333h2v2h-2zM1515 327h2v6h-2zM1516 331h2v5h-2zM1517 338h2v1h-2zM1518 338h2v4h-2z" fill="none" stroke="#0a960a" transform="translate(.5,.5)"/>
<path d="M1516 324V341M1518 331V345M1518 337V346" stroke="#f00" fill="none" transform="translate(.5,0)"/>
<path d="M1515 327h3v10h-3zM1517 331h3v8h-3zM1517 338h3v4h-3z" fill="#f00"/>
<path d="M1520 336V340M1521 336V342M1522 322V338" stroke="#f00" fill="none" transform="translate(.5,0)"/>
<path d="M1519 338h3v1h-3zM1520 337h3v3h-3zM1521 326h3v9h-3z" fill="#f00"/>
<path d="M1520 335V338M1520 339V340M1520 332V337M1520 338V338M1522 332V333M1522 340V345M1522 326V326M1522 333V335M1523 323V329M1523 335V336M1519 338h2v2h-2zM1519 337h2v1h-2zM1521 333h2v7h-2zM1521 326h2v7h-2zM1522 329h2v6h-2z" fill="none" stroke="#0a960a" transform="translate(.5,.5)"/>
<path d="M1524 329V331M1524 333V334M1526 326V328M1526 333V337M1526 325V325M1526 328V328M1526 323V323M1526 325V331M1523 331h2v1h-2zM1525 328h2v5h-2zM1525 325h2v3h-2zM1525 323h2v2h-2z" fill="none" stroke="#0a960a" transform="translate(.5,.5)"/>
<path d="M1524 327V331M1524 327V342M1525 330V334M1527 323V326" stroke="#f00" fill="none" transform="translate(.5,0)"/>
<path d="M1523 329h3v2h-3zM1523 331h3v2h-3zM1524 331h3v2h-3zM1526 323h3v1h-3z" fill="#f00"/>
<path d="M1528 314V323M1530 309V319M1530 312V322" stroke="#f00" fill="none" transform="translate(.5,0)"/>
<path d="M1527 315h3v4h-3zM1529 309h3v9h-3zM1529 316h3v2h-3z" fill="#f00"/>
<path d="M1528 317V319M1528 325V327M1528 313V315M1528 319V323M1529 306V309M1529 318V319M1530 312V316M1530 318V323M1531 316V316M1531 318V322M1527 319h2v6h-2zM1527 315h2v4h-2zM1528 309h2v9h-2zM1529 316h2v2h-2zM1530 316h2v2h-2z" fill="none" stroke="#0a960a" transform="translate(.5,.5)"/>
<path d="M1532 313V319M1532 329V330M1534 322V323M1534 326V328M1534 320V321M1534 323V329M1534 317V319M1534 321V322M1531 319h2v9h-2zM1533 323h2v4h-2zM1533 321h2v2h-2zM1533 319h2v2h-2z" fill="none" stroke="#0a960a" transform="translate(.5,.5)"/>
<path d="M1532 314V324M1532 316V334M1533 316V329M1535 318V328" stroke="#f00" fill="none" transform="translate(.5,0)"/>
<path d="M1531 316h3v6h-3zM1531 323h3v6h-3zM1532 319h3v7h-3zM1534 319h3v4h-3z" fill="#f00"/>
<path d="M1536 322V328M1538 310V321M1538 316V326M1538 321V327M1539 324V328" stroke="#f00" fill="none" transform="translate(.5,0)"/>
<path d="M1535 323h3v2h-3zM1537 311h3v7h-3zM1537 318h3v6h-3zM1537 324h3v2h-3zM1538 326h3v2h-3z" fill="#f00"/>
<path d="M1536 309V315M1536 325V326M1536 312V313M1536 315V317M1537 307V311M1537 313V315M1535 315h2v10h-2zM1535 313h2v2h-2zM1536 311h2v2h-2z" fill="none" stroke="#0a960a" transform="translate(.5,.5)"/>
<path d="M1540 323V326M1540 327V328M1540 322V324M1540 326V327M1542 328V329M1542 330V332M1542 323V326M1542 331V332M1539 326h2v2h-2zM1539 324h2v2h-2zM1541 329h2v2h-2zM1541 326h2v4h-2z" fill="none" stroke="#0a960a" transform="translate(.5,.5)"/>
<path d="M1540 323V326M1541 325V332M1542 327V332M1543 326V331" stroke="#f00" fill="none" transform="translate(.5,0)"/>
<path d="M1539 324h3v2h-3zM1540 325h3v5h-3zM1541 329h3v2h-3zM1542 326h3v2h-3z" fill="#f00"/>
<path d="M1544 319V329M1545 322V327M1546 321V325M1546 320V326M1547 325V332" stroke="#f00" fill="none" transform="translate(.5,0)"/>
<path d="M1543 323h3v2h-3zM1544 322h3v2h-3zM1545 321h3v2h-3zM1545 323h3v2h-3zM1546 325h3v2h-3z" fill="#f00"/>
<path d="M1544 320V323M1544 328V329M1544 322V322M1544 324V326M1546 315V321M1546 324V328M1543 323h2v6h-2zM1543 322h2v2h-2zM1545 321h2v3h-2z" fill="none" stroke="#0a960a" transform="translate(.5,.5)"/>
<path d="M1548 323V324M1548 329V331M1549 319V322M1549 326V332M1550 317V319M1550 322V327M1550 312V315M1550 319V321M1551 313V315M1551 317V320M1547 324h2v5h-2zM1548 322h2v5h-2zM1549 319h2v3h-2zM1549 315h2v4h-2zM1550 315h2v2h-2z" fill="none" stroke="#0a960a" transform="translate(.5,.5)"/>
<path d="M1548 326V331M1548 324V327M1550 313V320" stroke="#f00" fill="none" transform="translate(.5,0)"/>
<path d="M1547 327h3v2h-3zM1547 324h3v2h-3zM1549 315h3v2h-3z" fill="#f00"/>
<path d="M1552 311V319M1552 316V324M1552 319V327M1554 320V334M1554 322V335M1555 331V336" stroke="#f00" fill="none" transform="translate(.5,0)"/>
<path d="M1551 315h3v3h-3zM1551 318h3v3h-3zM1551 321h3v5h-3zM1553 322h3v11h-3zM1553 324h3v9h-3zM1554 332h3v1h-3z" fill="#f00"/>
<path d="M1553 319V322M1553 326V329M1554 321V324M1554 333V333M1552 322h2v3h-2zM1553 324h2v10h-2z" fill="none" stroke="#0a960a" transform="translate(.5,.5)"/>
<path d="M1556 331V332M1556 335V337M1557 329V332M1557 334V340M1558 333V336M1558 343V346M1555 332h2v4h-2zM1556 332h2v2h-2zM1557 336h2v7h-2z" fill="none" stroke="#0a960a" transform="translate(.5,.5)"/>
<path d="M1556 328V340M1556 329V338M1558 327V338M1558 336V345M1559 335V343" stroke="#f00" fill="none" transform="translate(.5,0)"/>
<path d="M1555 333h3v2h-3zM1555 332h3v3h-3zM1557 332h3v5h-3zM1557 337h3v6h-3zM1558 336h3v7h-3z" fill="#f00"/>
<path d="M1560 336V346M1560 338V349M1562 320V347" stroke="#f00" fill="none" transform="translate(.5,0)"/>
<path d="M1559 343h3v2h-3zM1559 343h3v2h-3zM1561 333h3v11h-3z" fill="#f00"/>
<path d="M1560 340V343M1560 345V345M1561 336V338M1561 344V347M1562 335V336M1562 338V342M1562 333V333M1562 336V337M1563 334V334M1563 344V345M1559 343h2v2h-2zM1560 338h2v6h-2zM1561 336h2v2h-2zM1561 333h2v3h-2zM1562 334h2v10h-2z" fill="none" stroke="#0a960a" transform="translate(.5,.5)"/>
<path d="M1564 337V338M1564 341V343M1565 336V337M1565 338V340M1566 333V336M1566 342V345M1563 338h2v3h-2zM1564 337h2v2h-2zM1565 336h2v6h-2z" fill="none" stroke="#0a960a" transform="translate(.5,.5)"/>
<path d="M1564 332V340M1564 335V342M1566 336V344M1566 336V345M1567 333V343" stroke="#f00" fill="none" transform="translate(.5,0)"/>
<path d="M1563 334h3v1h-3zM1563 335h3v6h-3zM1565 337h3v3h-3zM1565 340h3v2h-3zM1566 336h3v6h-3z" fill="#f00"/>
<path d="M1568 341V345M1569 331V340M1570 334V345" stroke="#f00" fill="none" transform="translate(.5,0)"/>
<path d="M1567 342h3v2h-3zM1568 332h3v6h-3zM1569 337h3v7h-3z" fill="#f00"/>
<path d="M1568 332V338M1568 344V345M1568 331V332M1568 338V340M1570 334V337M1570 339V341M1570 339V340M1570 343V343M1571 332V336M1571 340V340M1567 338h2v5h-2zM1567 332h2v6h-2zM1569 337h2v2h-2zM1569 340h2v3h-2zM1570 336h2v4h-2z" fill="none" stroke="#0a960a" transform="translate(.5,.5)"/>
<path d="M1573 342V343M1573 347V352M1574 342V345M1574 347V347M1574 334V338M1574 345V347M1572 343h2v4h-2zM1573 345h2v2h-2zM1573 338h2v7h-2z" fill="none" stroke="#0a960a" transform="translate(.5,.5)"/>
<path d="M1572 335V344M1572 340V346M1572 343V350M1574 343V347M1575 335V346" stroke="#f00" fill="none" transform="translate(.5,0)"/>
<path d="M1571 336h3v5h-3zM1571 341h3v3h-3zM1571 344h3v3h-3zM1573 343h3v3h-3zM1574 338h3v4h-3z" fill="#f00"/>
<path d="M1576 328V338M1577 328V338M1578 334V340M1579 319V322" stroke="#f00" fill="none" transform="translate(.5,0)"/>
<path d="M1575 335h3v3h-3zM1576 330h3v7h-3zM1577 337h3v2h-3zM1578 321h3v1h-3z" fill="#f00"/>
<path d="M1576 335V335M1576 342V346M1576 330V330M1576 338V339M1578 332V334M1578 339V345M1578 319V321M1578 334V339M1575 335h2v8h-2zM1575 330h2v7h-2zM1577 334h2v5h-2zM1577 321h2v12h-2z" fill="none" stroke="#0a960a" transform="translate(.5,.5)"/>
<path d="M1580 310V312M1580 322V326M1580 301V302M1580 312V317M1581 303V304M1581 306V307M1582 310V314M1582 318V318M1579 312h2v11h-2zM1579 302h2v10h-2zM1580 304h2v2h-2zM1581 314h2v4h-2z" fill="none" stroke="#0a960a" transform="translate(.5,.5)"/>
<path d="M1580 300V307M1582 302V319M1582 313V328M1583 322V330" stroke="#f00" fill="none" transform="translate(.5,0)"/>
<path d="M1579 302h3v4h-3zM1581 304h3v14h-3zM1581 314h3v11h-3zM1582 325h3v3h-3z" fill="#f00"/>
<path d="M1584 318V323M1584 319V332M1586 319V326M1586 320V334" stroke="#f00" fill="none" transform="translate(.5,0)"/>
<path d="M1583 321h3v2h-3zM1583 323h3v8h-3zM1585 320h3v5h-3zM1585 326h3v5h-3z" fill="#f00"/>
<path d="M1584 320V321M1584 328V331M1585 320V320M1585 330V335M1586 319V328M1586 330V334M1587 323V324M1587 328V329M1583 321h2v8h-2zM1584 320h2v10h-2zM1585 328h2v2h-2zM1586 324h2v3h-2z" fill="none" stroke="#0a960a" transform="translate(.5,.5)"/>
<path d="M1588 321V324M1588 330V333M1589 321V326M1589 328V329M1590 326V329M1590 332V335M1591 325V326M1591 329V329M1587 324h2v7h-2zM1588 326h2v2h-2zM1589 329h2v4h-2zM1590 326h2v2h-2z" fill="none" stroke="#0a960a" transform="translate(.5,.5)"/>
<path d="M1588 323V332M1588 316V329M1590 320V331M1590 329V333" stroke="#f00" fill="none" transform="translate(.5,0)"/>
<path d="M1587 324h3v6h-3zM1587 324h3v5h-3zM1589 326h3v4h-3zM1589 330h3v3h-3z" fill="#f00"/>
<path d="M1592 323V328M1592 327V334M1592 326V338M1594 315V334M1594 323V334" stroke="#f00" fill="none" transform="translate(.5,0)"/>
<path d="M1591 326h3v1h-3zM1591 328h3v2h-3zM1591 330h3v2h-3zM1593 318h3v13h-3zM1593 323h3v9h-3z" fill="#f00"/>
<path d="M1593 312V318M1593 332V344M1594 321V323M1594 331V339M1595 328V330M1595 332V334M1592 318h2v14h-2zM1593 323h2v7h-2zM1594 330h2v2h-2z" fill="none" stroke="#0a960a" transform="translate(.5,.5)"/>
<path d="M1596 329V330M1596 332V333M1595 330h2v2h-2z" fill="none" stroke="#0a960a" transform="translate(.5,.5)"/>
<path d="M1596 325V336M1596 328V338M1597 330V340M1598 336V342M1598 338V346M1598 342V355M1599 346V357" stroke="#f00" fill="none" transform="translate(.5,0)"/>
<path d="M1595 330h3v2h-3zM1595 330h3v1h-3zM1596 332h3v5h-3zM1597 337h3v2h-3zM1597 339h3v5h-3zM1597 344h3v8h-3zM1598 352h3v1h-3z" fill="#f00"/>
<path d="M1600 353V367M1600 363V379M1600 372V390M1602 380V402M1602 380V386M1603 380V386" stroke="#f00" fill="none" transform="translate(.5,0)"/>
<path d="M1599 354h3v12h-3zM1599 366h3v11h-3zM1599 377h3v6h-3zM1601 381h3v3h-3zM1601 384h3v1h-3zM1602 384h3v2h-3z" fill="#f00"/>
<path d="M1601 378V381M1601 383V387M1602 382V384M1602 385V388M1600 381h2v2h-2zM1601 384h2v1h-2z" fill="none" stroke="#0a960a" transform="translate(.5,.5)"/>
<path d="M1604 380V382M1604 388V390M1605 381V383M1605 389V389M1606 380V381M1606 383V385M1607 380V383M1607 386V387M1603 382h2v5h-2zM1604 383h2v5h-2zM1605 381h2v2h-2zM1606 383h2v3h-2z" fill="none" stroke="#0a960a" transform="translate(.5,.5)"/>
<path d="M1604 384V390M1604 382V394M1606 380V387M1606 381V392" stroke="#f00" fill="none" transform="translate(.5,0)"/>
<path d="M1603 386h3v2h-3zM1603 382h3v6h-3zM1605 381h3v2h-3zM1605 383h3v3h-3z" fill="#f00"/>
<path d="M1608 377V388M1608 377V387M1609 376V390M1610 387V391M1610 388V396M1611 389V392" stroke="#f00" fill="none" transform="translate(.5,0)"/>
<path d="M1607 383h3v3h-3zM1607 378h3v3h-3zM1608 380h3v7h-3zM1609 387h3v2h-3zM1609 389h3v2h-3zM1610 390h3v1h-3z" fill="#f00"/>
<path d="M1608 376V378M1608 386V387M1610 388V390M1610 391V393M1607 378h2v8h-2zM1609 390h2v2h-2z" fill="none" stroke="#0a960a" transform="translate(.5,.5)"/>
<path d="M1612 387V388M1612 391V393M1612 385V390M1612 394V399M1614 385V387M1614 396V398M1611 388h2v4h-2zM1611 390h2v4h-2zM1613 387h2v9h-2z" fill="none" stroke="#0a960a" transform="translate(.5,.5)"/>
<path d="M1612 387V394M1613 389V397M1614 390V397M1614 385V390M1615 388V396" stroke="#f00" fill="none" transform="translate(.5,0)"/>
<path d="M1611 388h3v6h-3zM1612 390h3v4h-3zM1613 393h3v2h-3zM1613 387h3v3h-3zM1614 390h3v4h-3z" fill="#f00"/>
<path d="M1616 390V400M1616 397V403M1616 396V402M1618 398V412M1618 390V405" stroke="#f00" fill="none" transform="translate(.5,0)"/>
<path d="M1615 393h3v5h-3zM1615 398h3v2h-3zM1615 400h3v2h-3zM1617 398h3v2h-3zM1617 395h3v7h-3z" fill="#f00"/>
<path d="M1617 396V398M1617 402V404M1618 392V395M1618 400V401M1619 396V398M1619 402V405M1616 398h2v3h-2zM1617 395h2v6h-2zM1618 398h2v4h-2z" fill="none" stroke="#0a960a" transform="translate(.5,.5)"/>
<path d="M1620 392V396M1620 398V400M1620 393V394M1620 398V399M1621 384V386M1621 394V394M1622 382V385M1622 389V392M1622 378V383M1622 385V389M1623 376V379M1623 383V386M1619 396h2v2h-2zM1619 394h2v4h-2zM1620 386h2v8h-2zM1621 385h2v4h-2zM1621 383h2v2h-2zM1622 379h2v4h-2z" fill="none" stroke="#0a960a" transform="translate(.5,.5)"/>
<path d="M1620 393V399M1622 384V390" stroke="#f00" fill="none" transform="translate(.5,0)"/>
<path d="M1619 396h3v2h-3zM1621 386h3v3h-3z" fill="#f00"/>
<path d="M1624 374V384M1624 376V382M1625 375V389M1626 381V393" stroke="#f00" fill="none" transform="translate(.5,0)"/>
<path d="M1623 379h3v1h-3zM1623 378h3v3h-3zM1624 381h3v7h-3zM1625 383h3v9h-3z" fill="#f00"/>
<path d="M1624 370V378M1624 380V383M1626 384V385M1626 387V388M1626 383V383M1626 385V386M1627 390V390M1627 392V395M1623 378h2v2h-2zM1625 385h2v2h-2zM1625 383h2v2h-2zM1626 390h2v2h-2z" fill="none" stroke="#0a960a" transform="translate(.5,.5)"/>
<path d="M1628 387V388M1628 390V391M1629 393V401M1629 405V405M1630 399V406M1630 408V410M1627 388h2v2h-2zM1628 401h2v4h-2zM1629 406h2v2h-2z" fill="none" stroke="#0a960a" transform="translate(.5,.5)"/>
<path d="M1628 386V396M1628 392V405M1630 400V409M1630 402V410M1631 404V409" stroke="#f00" fill="none" transform="translate(.5,0)"/>
<path d="M1627 388h3v5h-3zM1627 393h3v12h-3zM1629 401h3v2h-3zM1629 403h3v5h-3zM1630 406h3v1h-3z" fill="#f00"/>
<path d="M1632 404V412M1632 408V413M1634 403V411M1634 408V411M1634 405V417" stroke="#f00" fill="none" transform="translate(.5,0)"/>
<path d="M1631 407h3v3h-3zM1631 409h3v3h-3zM1633 406h3v3h-3zM1633 409h3v1h-3zM1633 411h3v2h-3z" fill="#f00"/>
<path d="M1632 405V409M1632 411V416M1633 405V406M1633 412V413M1635 406V408M1635 413V416M1631 409h2v1h-2zM1632 406h2v6h-2zM1634 408h2v5h-2z" fill="none" stroke="#0a960a" transform="translate(.5,.5)"/>
<path d="M1636 405V410M1636 415V417M1637 405V409M1637 414V415M1638 407V412M1638 413V417M1635 410h2v6h-2zM1636 409h2v5h-2zM1637 412h2v1h-2z" fill="none" stroke="#0a960a" transform="translate(.5,.5)"/>
<path d="M1636 403V421M1636 409V417M1638 408V414M1638 410V414M1639 411V422" stroke="#f00" fill="none" transform="translate(.5,0)"/>
<path d="M1635 408h3v8h-3zM1635 410h3v5h-3zM1637 409h3v4h-3zM1637 412h3v2h-3zM1638 414h3v5h-3z" fill="#f00"/>
<path d="M1640 414V419M1640 416V423M1641 419V428M1642 419V429" stroke="#f00" fill="none" transform="translate(.5,0)"/>
<path d="M1639 415h3v2h-3zM1639 417h3v5h-3zM1640 422h3v2h-3zM1641 422h3v5h-3z" fill="#f00"/>
<path d="M1640 414V415M1640 419V423M1642 421V422M1642 424V427M1642 423V425M1642 427V428M1643 420V424M1643 425V428M1639 415h2v4h-2zM1641 422h2v2h-2zM1641 425h2v2h-2zM1642 424h2v1h-2z" fill="none" stroke="#0a960a" transform="translate(.5,.5)"/>
<path d="M1645 427V430M1645 432V435M1646 425V428M1646 430V436M1646 424V425M1646 432V432M1644 430h2v2h-2zM1645 428h2v2h-2zM1645 425h2v7h-2z" fill="none" stroke="#0a960a" transform="translate(.5,.5)"/>
<path d="M1644 421V427M1644 426V430M1644 425V435M1646 425V433M1647 423V435" stroke="#f00" fill="none" transform="translate(.5,0)"/>
<path d="M1643 424h3v3h-3zM1643 426h3v2h-3zM1643 428h3v4h-3zM1645 428h3v4h-3zM1646 425h3v7h-3z" fill="#f00"/>
<path d="M1648 429V436M1649 419V433M1650 428V439M1650 429V440" stroke="#f00" fill="none" transform="translate(.5,0)"/>
<path d="M1647 432h3v2h-3zM1648 429h3v2h-3zM1649 431h3v2h-3zM1649 431h3v6h-3z" fill="#f00"/>
<path d="M1648 429V432M1648 434V437M1648 428V429M1648 432V436M1650 428V431M1650 433V438M1651 428V430M1651 437V438M1647 432h2v2h-2zM1647 429h2v3h-2zM1649 431h2v2h-2zM1650 430h2v7h-2z" fill="none" stroke="#0a960a" transform="translate(.5,.5)"/>
<path d="M1652 426V428M1652 430V432M1653 431V433M1653 438V439M1654 437V438M1654 440V441M1651 428h2v1h-2zM1652 433h2v5h-2zM1653 438h2v2h-2z" fill="none" stroke="#0a960a" transform="translate(.5,.5)"/>
<path d="M1652 423V442M1652 434V438M1654 430V436M1654 435V441M1655 438V441" stroke="#f00" fill="none" transform="translate(.5,0)"/>
<path d="M1651 428h3v6h-3zM1651 434h3v4h-3zM1653 433h3v3h-3zM1653 436h3v4h-3zM1654 438h3v2h-3z" fill="#f00"/>
<path d="M1656 440V458M1656 440V448M1658 434V441M1659 437V443" stroke="#f00" fill="none" transform="translate(.5,0)"/>
<path d="M1655 441h3v8h-3zM1655 444h3v2h-3zM1657 437h3v2h-3zM1658 439h3v1h-3z" fill="#f00"/>
<path d="M1656 443V444M1656 449V451M1657 440V444M1657 446V448M1658 435V440M1658 444V446M1658 435V437M1658 440V443M1655 444h2v5h-2zM1656 444h2v2h-2zM1657 440h2v4h-2zM1657 437h2v3h-2z" fill="none" stroke="#0a960a" transform="translate(.5,.5)"/>
<path d="M1660 440V442M1660 447V447M1661 439V440M1661 442V445M1662 435V438M1662 440V442M1662 428V434M1662 444V444M1659 442h2v5h-2zM1660 440h2v2h-2zM1661 438h2v2h-2zM1661 434h2v10h-2z" fill="none" stroke="#0a960a" transform="translate(.5,.5)"/>
<path d="M1660 439V446M1660 428V451M1662 437V447M1663 425V438" stroke="#f00" fill="none" transform="translate(.5,0)"/>
<path d="M1659 440h3v3h-3zM1659 443h3v4h-3zM1661 438h3v6h-3zM1662 434h3v4h-3z" fill="#f00"/>
<path d="M1664 436V440M1665 433V444M1666 435V444M1666 439V448" stroke="#f00" fill="none" transform="translate(.5,0)"/>
<path d="M1663 438h3v1h-3zM1664 436h3v2h-3zM1665 436h3v7h-3zM1665 443h3v4h-3z" fill="#f00"/>
<path d="M1664 436V437M1664 439V443M1664 435V436M1664 437V441M1666 435V436M1666 438V439M1667 445V445M1667 447V448M1663 437h2v2h-2zM1663 436h2v1h-2zM1665 436h2v2h-2zM1666 445h2v2h-2z" fill="none" stroke="#0a960a" transform="translate(.5,.5)"/>
<path d="M1668 444V447M1668 449V452M1668 441V443M1668 447V449M1670 444V445M1670 448V454M1670 439V442M1670 445V447M1671 443V446M1671 447V452M1667 447h2v2h-2zM1667 443h2v4h-2zM1669 445h2v4h-2zM1669 442h2v2h-2zM1670 446h2v1h-2z" fill="none" stroke="#0a960a" transform="translate(.5,.5)"/>
<path d="M1668 443V450M1669 436V450M1670 441V448" stroke="#f00" fill="none" transform="translate(.5,0)"/>
<path d="M1667 445h3v5h-3zM1668 443h3v5h-3zM1669 442h3v4h-3z" fill="#f00"/>
<path d="M1672 445V449M1672 443V452M1672 450V453M1674 441V447M1674 437V446M1675 445V451" stroke="#f00" fill="none" transform="translate(.5,0)"/>
<path d="M1671 446h3v2h-3zM1671 448h3v3h-3zM1671 451h3v2h-3zM1673 443h3v2h-3zM1673 443h3v3h-3zM1674 445h3v4h-3z" fill="#f00"/>
<path d="M1673 442V443M1673 453V456M1674 441V443M1674 445V448M1672 443h2v10h-2zM1673 443h2v2h-2z" fill="none" stroke="#0a960a" transform="translate(.5,.5)"/>
<path d="M1676 450V451M1676 453V455M1678 443V445M1678 455V456M1675 451h2v2h-2zM1677 445h2v10h-2z" fill="none" stroke="#0a960a" transform="translate(.5,.5)"/>
<path d="M1676 445V458M1676 448V456M1677 446V459M1678 445V452M1678 446V453M1679 448V465" stroke="#f00" fill="none" transform="translate(.5,0)"/>
<path d="M1675 450h3v3h-3zM1675 451h3v2h-3zM1676 453h3v2h-3zM1677 445h3v2h-3zM1677 447h3v3h-3zM1678 450h3v10h-3z" fill="#f00"/>
<path d="M1680 454V459M1682 446V458M1682 441V455" stroke="#f00" fill="none" transform="translate(.5,0)"/>
<path d="M1679 455h3v2h-3zM1681 447h3v7h-3zM1681 442h3v10h-3z" fill="#f00"/>
<path d="M1680 454V457M1680 459V463M1680 452V455M1680 457V464M1681 444V447M1681 457V457M1682 441V442M1682 454V458M1683 447V447M1683 452V454M1679 457h2v2h-2zM1679 455h2v3h-2zM1680 447h2v10h-2zM1681 442h2v12h-2zM1682 447h2v5h-2z" fill="none" stroke="#0a960a" transform="translate(.5,.5)"/>
<path d="M1684 444V445M1684 447V447M1684 439V440M1684 445V445M1685 436V436M1685 442V442M1686 427V430M1686 436V437M1686 418V422M1686 432V434M1687 417V420M1687 422V424M1683 445h2v2h-2zM1683 440h2v5h-2zM1684 436h2v5h-2zM1685 430h2v6h-2zM1685 422h2v11h-2zM1686 420h2v2h-2z" fill="none" stroke="#0a960a" transform="translate(.5,.5)"/>
<path d="M1684 438V445M1686 427V436" stroke="#f00" fill="none" transform="translate(.5,0)"/>
<path d="M1683 440h3v2h-3zM1685 430h3v2h-3z" fill="#f00"/>
<path d="M1688 419V425M1688 421V424M1688 422V432M1690 422V428M1690 426V432" stroke="#f00" fill="none" transform="translate(.5,0)"/>
<path d="M1687 420h3v2h-3zM1687 422h3v2h-3zM1687 424h3v2h-3zM1689 425h3v2h-3zM1689 427h3v5h-3z" fill="#f00"/>
<path d="M1689 424V425M1689 426V428M1690 426V427M1690 432V435M1691 419V425M1691 427V430M1688 425h2v1h-2zM1689 427h2v4h-2zM1690 425h2v2h-2z" fill="none" stroke="#0a960a" transform="translate(.5,.5)"/>
<path d="M1692 428V428M1692 430V430M1694 438V440M1694 443V450M1695 440V440M1695 443V447M1691 428h2v1h-2zM1693 440h2v4h-2zM1694 440h2v3h-2z" fill="none" stroke="#0a960a" transform="translate(.5,.5)"/>
<path d="M1692 423V430M1692 425V434M1693 427V439M1694 434V445M1694 436V450" stroke="#f00" fill="none" transform="translate(.5,0)"/>
<path d="M1691 425h3v4h-3zM1691 428h3v5h-3zM1692 433h3v5h-3zM1693 438h3v6h-3zM1693 440h3v4h-3z" fill="#f00"/>
<path d="M1696 438V441M1697 434V441M1698 440V451M1699 431V441" stroke="#f00" fill="none" transform="translate(.5,0)"/>
<path d="M1695 438h3v2h-3zM1696 438h3v2h-3zM1697 440h3v2h-3zM1698 435h3v2h-3z" fill="#f00"/>
<path d="M1696 434V438M1696 440V441M1696 438V438M1696 440V442M1698 435V438M1698 443V443M1698 433V435M1698 438V438M1695 438h2v2h-2zM1695 438h2v2h-2zM1697 438h2v5h-2zM1697 435h2v2h-2z" fill="none" stroke="#0a960a" transform="translate(.5,.5)"/>
<path d="M1700 433V433M1700 437V438M1700 424V425M1700 433V435M1700 408V423M1700 425V427M1701 416V421M1701 423V424M1702 421V423M1702 425V428M1703 423V424M1703 427V439M1699 433h2v5h-2zM1699 425h2v8h-2zM1699 423h2v2h-2zM1700 421h2v2h-2zM1701 423h2v2h-2zM1702 424h2v3h-2z" fill="none" stroke="#0a960a" transform="translate(.5,.5)"/>
<path d="M1702 417V426M1702 422V432" stroke="#f00" fill="none" transform="translate(.5,0)"/>
<path d="M1701 421h3v4h-3zM1701 423h3v5h-3z" fill="#f00"/>
<path d="M1704 422V431M1704 422V438M1705 426V439M1706 436V448M1706 442V449M1707 445V455" stroke="#f00" fill="none" transform="translate(.5,0)"/>
<path d="M1703 424h3v5h-3zM1703 429h3v4h-3zM1704 429h3v9h-3zM1705 436h3v8h-3zM1705 443h3v2h-3zM1706 446h3v6h-3z" fill="#f00"/>
<path d="M1704 424V429M1704 434V438M1706 434V436M1706 438V445M1703 429h2v5h-2zM1705 436h2v2h-2z" fill="none" stroke="#0a960a" transform="translate(.5,.5)"/>
<path d="M1710 506V506M1710 512V516M1710 506V508M1710 510V510M1711 491V506M1711 508V511M1709 506h2v6h-2zM1709 508h2v2h-2zM1710 506h2v2h-2z" fill="none" stroke="#0a960a" transform="translate(.5,.5)"/>
<path d="M1708 451V475M1708 464V487M1708 481V503M1709 501V515M1710 505V511" stroke="#f00" fill="none" transform="translate(.5,0)"/>
<path d="M1707 452h3v19h-3zM1707 471h3v13h-3zM1707 484h3v17h-3zM1708 501h3v11h-3zM1709 506h3v3h-3z" fill="#f00"/>
<path d="M1712 505V511M1712 507V511M1714 498V506M1714 495V507M1715 502V508" stroke="#f00" fill="none" transform="translate(.5,0)"/>
<path d="M1711 506h3v2h-3zM1711 508h3v3h-3zM1713 503h3v2h-3zM1713 505h3v2h-3zM1714 503h3v4h-3z" fill="#f00"/>
<path d="M1712 507V509M1712 511V511M1713 502V503M1713 509V512M1714 503V503M1714 507V508M1711 509h2v2h-2zM1712 503h2v6h-2zM1713 503h2v4h-2z" fill="none" stroke="#0a960a" transform="translate(.5,.5)"/>
<path d="M1716 514V517M1716 519V524M1715 517h2v2h-2z" fill="none" stroke="#0a960a" transform="translate(.5,.5)"/>
<path d="M1716 505V513M1716 512V521M1717 512V529M1718 523V528M1718 525V531M1718 527V535M1719 531V542" stroke="#f00" fill="none" transform="translate(.5,0)"/>
<path d="M1715 508h3v5h-3zM1715 512h3v6h-3zM1716 517h3v8h-3zM1717 524h3v3h-3zM1717 528h3v1h-3zM1717 529h3v4h-3zM1718 533h3v8h-3z" fill="#f00"/>
<path d="M1720 531V542M1722 532V538M1722 535V540M1723 529V537" stroke="#f00" fill="none" transform="translate(.5,0)"/>
<path d="M1719 534h3v6h-3zM1721 533h3v2h-3zM1721 535h3v3h-3zM1722 534h3v2h-3z" fill="#f00"/>
<path d="M1720 537V538M1720 542V543M1720 531V534M1720 538V539M1721 532V533M1721 540V541M1722 534V534M1722 539V540M1719 538h2v4h-2zM1719 534h2v4h-2zM1720 533h2v6h-2zM1721 534h2v4h-2z" fill="none" stroke="#0a960a" transform="translate(.5,.5)"/>
<path d="M1724 537V539M1724 541V542M1726 542V544M1726 546V549M1727 540V543M1727 548V550M1723 539h2v2h-2zM1725 544h2v2h-2zM1726 543h2v6h-2z" fill="none" stroke="#0a960a" transform="translate(.5,.5)"/>
<path d="M1724 536V542M1724 538V544M1725 537V547M1726 543V547M1726 546V551" stroke="#f00" fill="none" transform="translate(.5,0)"/>
<path d="M1723 536h3v2h-3zM1723 538h3v3h-3zM1724 539h3v7h-3zM1725 544h3v3h-3zM1725 546h3v2h-3z" fill="#f00"/>
<path d="M1728 541V547M1728 545V554M1728 545V550M1730 544V551M1730 547V553M1731 544V553" stroke="#f00" fill="none" transform="translate(.5,0)"/>
<path d="M1727 543h3v4h-3zM1727 547h3v1h-3zM1727 548h3v1h-3zM1729 547h3v1h-3zM1729 548h3v4h-3zM1730 547h3v6h-3z" fill="#f00"/>
<path d="M1729 544V547M1729 549V551M1730 546V547M1730 552V554M1728 547h2v3h-2zM1729 547h2v5h-2z" fill="none" stroke="#0a960a" transform="translate(.5,.5)"/>
<path d="M1732 544V551M1732 552V553M1732 548V549M1732 551V555M1733 547V551M1733 555V560M1734 553V554M1734 556V556M1735 548V551M1735 556V557M1731 551h2v2h-2zM1731 549h2v2h-2zM1732 551h2v4h-2zM1733 554h2v1h-2zM1734 551h2v4h-2z" fill="none" stroke="#0a960a" transform="translate(.5,.5)"/>
<path d="M1732 543V558M1734 547V557M1734 553V556" stroke="#f00" fill="none" transform="translate(.5,0)"/>
<path d="M1731 549h3v6h-3zM1733 551h3v4h-3zM1733 554h3v2h-3z" fill="#f00"/>
<path d="M1736 548V552M1737 549V562M1738 554V567M1738 562V578M1739 585V598" stroke="#f00" fill="none" transform="translate(.5,0)"/>
<path d="M1735 549h3v2h-3zM1736 550h3v8h-3zM1737 558h3v5h-3zM1737 563h3v1h-3zM1738 589h3v6h-3z" fill="#f00"/>
<path d="M1736 545V549M1736 551V556M1736 546V550M1736 552V560M1738 588V589M1738 592V595M1735 549h2v2h-2zM1735 550h2v2h-2zM1737 589h2v3h-2z" fill="none" stroke="#0a960a" transform="translate(.5,.5)"/>
<path d="M1740 588V588M1740 594V597M1740 583V585M1740 588V589M1741 581V585M1741 587V588M1739 588h2v6h-2zM1739 585h2v4h-2zM1740 585h2v2h-2z" fill="none" stroke="#0a960a" transform="translate(.5,.5)"/>
<path d="M1740 584V587M1742 584V592M1742 587V592M1742 586V594M1743 593V599" stroke="#f00" fill="none" transform="translate(.5,0)"/>
<path d="M1739 585h3v2h-3zM1741 585h3v3h-3zM1741 587h3v3h-3zM1741 590h3v3h-3zM1742 593h3v3h-3z" fill="#f00"/>
<path d="M1744 588V603M1745 594V603M1746 597V602M1746 601V612" stroke="#f00" fill="none" transform="translate(.5,0)"/>
<path d="M1743 592h3v11h-3zM1744 598h3v2h-3zM1745 600h3v2h-3zM1745 601h3v5h-3z" fill="#f00"/>
<path d="M1744 590V592M1744 596V600M1744 596V598M1744 603V606M1746 601V601M1746 602V603M1747 602V605M1747 606V609M1743 592h2v4h-2zM1743 598h2v5h-2zM1745 601h2v1h-2zM1746 605h2v1h-2z" fill="none" stroke="#0a960a" transform="translate(.5,.5)"/>
<path d="M1748 598V601M1748 605V606M1749 605V610M1749 611V616M1750 610V615M1750 619V621M1751 606V613M1751 615V616M1747 601h2v4h-2zM1748 610h2v2h-2zM1749 615h2v4h-2zM1750 613h2v2h-2z" fill="none" stroke="#0a960a" transform="translate(.5,.5)"/>
<path d="M1748 597V611M1748 606V619M1750 608V616M1750 614V620" stroke="#f00" fill="none" transform="translate(.5,0)"/>
<path d="M1747 601h3v7h-3zM1747 607h3v4h-3zM1749 610h3v7h-3zM1749 616h3v3h-3z" fill="#f00"/>
<path d="M1752 610V626M1754 614V621M1754 609V622M1754 621V628M1755 612V629" stroke="#f00" fill="none" transform="translate(.5,0)"/>
<path d="M1751 611h3v13h-3zM1753 616h3v1h-3zM1753 617h3v4h-3zM1753 622h3v3h-3zM1754 624h3v2h-3z" fill="#f00"/>
<path d="M1752 608V611M1752 613V620M1752 613V619M1752 624V627M1753 613V616M1753 619V620M1751 611h2v2h-2zM1751 619h2v5h-2zM1752 616h2v3h-2z" fill="none" stroke="#0a960a" transform="translate(.5,.5)"/>
<path d="M1757 633V634M1757 636V639M1756 634h2v2h-2z" fill="none" stroke="#0a960a" transform="translate(.5,.5)"/>
<path d="M1756 624V629M1756 627V635M1756 630V641M1758 632V645M1758 642V647M1758 644V654M1759 650V662" stroke="#f00" fill="none" transform="translate(.5,0)"/>
<path d="M1755 626h3v2h-3zM1755 629h3v2h-3zM1755 631h3v6h-3zM1757 634h3v10h-3zM1757 644h3v2h-3zM1757 646h3v6h-3zM1758 652h3v8h-3z" fill="#f00"/>
<path d="M1760 657V671M1762 650V657" stroke="#f00" fill="none" transform="translate(.5,0)"/>
<path d="M1759 658h3v10h-3zM1761 654h3v1h-3z" fill="#f00"/>
<path d="M1760 656V658M1760 661V661M1760 662V664M1760 667V672M1761 657V663M1761 664V667M1762 653V654M1762 663V663M1762 644V645M1762 655V658M1763 637V642M1763 645V645M1759 658h2v3h-2zM1759 664h2v3h-2zM1760 663h2v2h-2zM1761 654h2v8h-2zM1761 645h2v10h-2zM1762 642h2v3h-2z" fill="none" stroke="#0a960a" transform="translate(.5,.5)"/>
<path d="M1764 648V649M1764 651V652M1766 658V661M1766 664V666M1763 649h2v2h-2zM1765 661h2v3h-2z" fill="none" stroke="#0a960a" transform="translate(.5,.5)"/>
<path d="M1764 642V645M1764 643V652M1765 646V657M1766 654V665M1766 662V666M1767 658V669" stroke="#f00" fill="none" transform="translate(.5,0)"/>
<path d="M1763 642h3v2h-3zM1763 645h3v6h-3zM1764 649h3v6h-3zM1765 654h3v8h-3zM1765 662h3v2h-3zM1766 661h3v5h-3z" fill="#f00"/>
<path d="M1768 657V668M1769 663V669M1770 665V673M1771 661V671" stroke="#f00" fill="none" transform="translate(.5,0)"/>
<path d="M1767 661h3v5h-3zM1768 665h3v2h-3zM1769 667h3v5h-3zM1770 663h3v5h-3z" fill="#f00"/>
<path d="M1768 660V661M1768 666V666M1768 665V665M1768 667V672M1770 664V668M1770 672V674M1770 662V663M1770 668V671M1767 661h2v5h-2zM1767 665h2v2h-2zM1769 668h2v5h-2zM1769 663h2v5h-2z" fill="none" stroke="#0a960a" transform="translate(.5,.5)"/>
<path d="M1772 670V670M1772 673V674M1772 662V666M1772 670V673M1774 664V669M1774 677V678M1771 670h2v2h-2zM1771 666h2v4h-2zM1773 669h2v8h-2z" fill="none" stroke="#0a960a" transform="translate(.5,.5)"/>
<path d="M1772 668V674M1773 666V677M1774 670V678M1774 673V679M1775 662V684" stroke="#f00" fill="none" transform="translate(.5,0)"/>
<path d="M1771 668h3v5h-3zM1772 666h3v7h-3zM1773 673h3v2h-3zM1773 675h3v2h-3zM1774 669h3v11h-3z" fill="#f00"/>
<path d="M1778 663V666M1778 662V671M1779 663V670" stroke="#f00" fill="none" transform="translate(.5,0)"/>
<path d="M1777 664h3v2h-3zM1777 666h3v2h-3zM1778 665h3v4h-3z" fill="#f00"/>
<path d="M1776 669V675M1776 680V683M1776 670V671M1776 675V675M1776 667V668M1776 671V672M1777 663V664M1777 668V676M1778 652V665M1778 668V671M1775 675h2v5h-2zM1775 671h2v4h-2zM1775 668h2v3h-2zM1776 664h2v3h-2zM1777 665h2v4h-2z" fill="none" stroke="#0a960a" transform="translate(.5,.5)"/>
<path d="M1780 659V664M1780 669V670M1781 664V665M1781 667V667M1782 700V701M1782 703V705M1783 691V692M1783 701V706M1779 664h2v5h-2zM1780 665h2v2h-2zM1781 701h2v2h-2zM1782 692h2v8h-2z" fill="none" stroke="#0a960a" transform="translate(.5,.5)"/>
<path d="M1780 663V667M1780 662V667M1782 663V688M1782 682V705" stroke="#f00" fill="none" transform="translate(.5,0)"/>
<path d="M1779 664h3v1h-3zM1779 665h3v2h-3zM1781 665h3v20h-3zM1781 685h3v18h-3z" fill="#f00"/>
<path d="M1784 684V695M1785 679V682M1786 678V685" stroke="#f00" fill="none" transform="translate(.5,0)"/>
<path d="M1783 687h3v2h-3zM1784 680h3v2h-3zM1785 682h3v2h-3z" fill="#f00"/>
<path d="M1784 682V687M1784 692V694M1784 678V680M1784 689V690M1786 678V679M1786 684V685M1786 674V675M1786 679V680M1787 670V673M1787 675V677M1783 687h2v5h-2zM1783 680h2v10h-2zM1785 679h2v5h-2zM1785 675h2v4h-2zM1786 673h2v2h-2z" fill="none" stroke="#0a960a" transform="translate(.5,.5)"/>
<path d="M1788 667V669M1788 673V675M1789 670V670M1789 678V678M1790 675V677M1790 678V682M1790 673V675M1790 677V681M1787 669h2v4h-2zM1788 670h2v8h-2zM1789 677h2v1h-2zM1789 675h2v2h-2z" fill="none" stroke="#0a960a" transform="translate(.5,.5)"/>
<path d="M1788 668V677M1788 669V680M1790 669V679M1791 674V680" stroke="#f00" fill="none" transform="translate(.5,0)"/>
<path d="M1787 669h3v4h-3zM1787 673h3v5h-3zM1789 670h3v9h-3zM1790 675h3v4h-3z" fill="#f00"/>
<path d="M1792 671V678M1793 672V681M1794 676V683M1794 677V689" stroke="#f00" fill="none" transform="translate(.5,0)"/>
<path d="M1791 672h3v5h-3zM1792 677h3v3h-3zM1793 678h3v2h-3zM1793 679h3v7h-3z" fill="#f00"/>
<path d="M1792 670V674M1792 679V680M1792 669V672M1792 674V676M1794 676V678M1794 680V684M1795 683V684M1795 686V687M1791 674h2v5h-2zM1791 672h2v1h-2zM1793 678h2v2h-2zM1794 684h2v2h-2z" fill="none" stroke="#0a960a" transform="translate(.5,.5)"/>
<path d="M1796 684V686M1796 687V689M1798 688V691M1798 694V704M1798 687V689M1798 695V696M1795 686h2v1h-2zM1797 691h2v3h-2zM1797 689h2v6h-2z" fill="none" stroke="#0a960a" transform="translate(.5,.5)"/>
<path d="M1796 684V690M1796 686V693M1797 688V695M1798 691V695" stroke="#f00" fill="none" transform="translate(.5,0)"/>
<path d="M1795 684h3v3h-3zM1795 686h3v3h-3zM1796 689h3v6h-3zM1797 691h3v4h-3z" fill="#f00"/>
<path d="M83 339h2M83 353h3M85 346h5M86 358h2M86 374h5M86 336h2M86 352h3M87 347h2M88 327h3M88 336h2M88 336h3M88 329h3M88 324h3M89 334h2M89 335h5M91 300h2M91 311h4M91 306h2M91 307h5M93 297h3M92 274h3M93 267h4M93 282h4M93 292h4M94 289h2M94 264h3M95 258h3M96 269h5M95 262h5M96 282h2M97 295h4M98 286h4M97 284h3M97 296h3M98 284h3M98 298h3M98 298h3M99 309h3M99 307h4M99 291h3M99 279h3M101 272h3M101 276h2M100 296h2M100 294h5M102 285h3M102 289h3M102 277h3M102 294h3M103 310h3M103 310h2M103 286h4M103 286h4M105 322h2M106 326h3M107 296h4M107 308h2M108 290h4M107 315h5M109 319h2M110 327h2M109 318h4M109 333h3M111 333h4M111 339h3M111 329h5M111 341h5M112 359h3M114 349h2M115 358h3M116 353h4M115 355h5M115 367h5M116 346h4M116 355h3M116 355h3M118 353h5M118 360h3M120 351h4M119 365h4M120 385h3M120 385h2M120 362h3M120 363h4M122 368h5M122 373h3M122 382h5M123 372h5M125 389h3M125 361h3M127 370h3M126 369h3M127 379h5M127 372h3M128 373h3M128 390h2M131 394h3M131 386h3M130 368h3M132 399h3M131 376h3M132 372h5M132 391h5M132 394h3M133 372h3M133 381h2M134 390h3M134 392h5M135 377h5M134 393h5M135 393h5M136 381h5M136 400h5M139 433h4M140 443h3M139 433h4M142 455h2M142 455h4M143 438h3M143 455h2M144 438h3M144 435h3M144 442h2M149 407h3M148 410h3M150 404h4M151 408h5M150 405h3M151 425h5M151 415h2M151 409h4M152 423h5M152 418h4M154 419h3M155 417h2M157 415h2M158 401h5M161 389h5M161 386h3M163 401h2M163 398h5M163 400h2M166 401h4M167 386h4M167 383h3M168 377h2M169 372h2M170 343h3M169 357h5M170 338h4M170 349h3M172 336h4M175 331h3M175 333h3M175 329h5M177 321h3M178 329h3M178 330h2M180 346h3M181 326h4M181 339h3M181 338h2M188 334h3M189 332h3M188 337h5M190 334h2M189 330h2M189 324h5M192 315h3M192 318h3M192 318h2M192 302h4M195 303h3M196 297h3M196 308h3M197 310h5M199 327h3M199 319h5M199 317h2M200 337h2M200 333h3M201 323h4M201 332h5M201 327h3M203 338h3M204 340h2M205 319h2M209 314h4M208 316h3M210 320h4M212 320h2M213 329h2M212 337h3M212 331h3M213 332h2M215 316h3M215 316h2M217 312h3M217 312h3M220 322h3M223 345h3M223 345h4M224 328h2M224 345h3M224 355h5M225 347h5M225 355h5M225 360h4M227 352h5M228 354h3M230 365h3M236 417h4M237 417h5M238 425h3M238 410h2M241 418h3M241 423h4M244 418h2M244 418h3M246 421h3M245 426h4M247 405h5M247 409h3M248 406h3M249 401h3M249 407h3M250 387h3M251 408h3M250 392h5M252 405h2M252 400h3M252 389h3M253 386h5M254 394h2M255 401h2M254 383h2M256 402h3M256 399h3M256 402h3M259 417h5M258 399h2M258 398h4M265 411h3M265 406h5M267 392h5M269 400h4M269 393h2M272 401h4M274 427h4M273 416h3M274 426h4M281 383h3M283 370h5M284 365h5M283 363h3M284 365h2M287 361h5M287 364h2M290 361h4M289 346h3M289 362h3M290 353h3M291 344h2M293 337h2M293 329h3M295 311h4M296 311h2M298 318h3M301 296h3M301 293h4M301 288h3M301 293h3M302 303h5M303 293h5M304 297h2M304 308h2M304 289h3M305 266h2M306 268h4M306 265h3M310 246h4M311 263h5M316 259h2M316 256h2M320 239h2M321 232h3M323 236h3M322 237h5M323 227h4M323 238h3M323 228h5M325 222h3M328 234h5M328 244h5M330 261h2M330 255h3M331 259h4M330 261h4M332 257h3M331 271h4M333 272h4M333 266h5M333 271h2M335 268h4M340 303h3M341 296h5M345 312h5M347 328h2M349 327h3M349 328h2M349 320h5M350 320h2M350 319h3M351 315h4M352 310h2M352 309h3M353 307h5M353 307h3M353 323h5M355 307h2M356 305h3M357 288h3M357 304h3M358 314h4M358 300h3M360 305h3M359 319h4M361 319h4M362 317h3M363 314h5M362 309h2M364 284h4M367 275h4M370 251h5M371 249h4M370 261h3M373 268h3M373 269h3M374 278h2M375 270h2M376 277h5M376 284h3M376 261h3M377 280h4M377 268h3M380 300h5M380 296h3M381 300h2M381 307h4M382 299h3M385 313h5M387 312h3M389 308h3M390 311h2M390 323h5M392 335h5M392 320h5M393 322h4M393 340h5M394 343h3M395 342h5M395 334h5M398 315h2M400 310h5M400 286h5M400 295h3M401 300h4M401 280h3M406 273h3M406 264h4M409 275h5M408 284h2M413 320h2M413 318h2M413 335h2M413 338h3M414 325h2M414 317h2M415 315h3M417 302h5M419 303h5M418 313h5M420 295h4M420 306h3M420 303h4M420 310h3M420 290h2M420 304h3M422 310h3M422 309h5M424 293h2M424 292h3M425 296h3M425 298h3M428 305h3M429 287h3M430 309h4M430 322h4M432 326h4M432 328h2M431 314h2M433 340h4M432 319h5M434 337h2M436 351h3M438 345h3M438 341h4M440 351h5M440 346h3M440 345h5M444 335h3M447 317h4M447 312h3M448 319h5M449 297h3M449 302h3M449 308h3M450 297h3M449 294h3M449 308h3M450 321h5M450 317h4M452 309h3M452 328h5M452 315h3M453 322h4M453 321h3M453 331h4M456 335h2M456 330h5M456 335h5M457 325h3M457 337h5M458 330h3M458 338h4M461 363h2M462 363h2M464 369h3M464 385h4M466 378h3M467 392h3M469 402h4M469 411h3M472 388h2M471 409h3M474 408h2M475 406h2M475 407h5M477 403h2M478 403h3M479 447h4M480 460h3M483 487h3M486 484h5M493 491h4M493 491h4M495 494h3M504 589h4M506 590h3M507 582h5M512 613h3M526 655h5M538 689h4M541 666h4M543 677h5M546 699h3M546 697h5M548 696h3M552 694h5M561 697h3M566 759h5M567 767h5M568 761h3M574 713h3M579 728h3M585 750h5M586 741h5M602 734h5M618 700h3M620 704h3M624 742h3M631 731h3M646 762h3M659 715h4M660 717h5M683 689h5M687 697h4M697 718h5M701 701h3M702 707h4M717 674h5M722 660h4M752 626h5M754 631h4M769 655h4M770 654h3M781 609h5M800 576h5M832 607h4" stroke="#0a960a" stroke-width="1" fill="none" transform="translate(0,.5)"/></g><path d="M92 1007V1006M96 1007V1005M98 1007V1006M116 1007V1005M118 1007V1006M129 1007V1006M141 1007V1006M168 1007V1005M169 1007V1005M188 1007V1005M210 1007V1005M225 1007V1006M230 1007V1005M276 1007V1005M286 1007V1005M290 1007V1006M291 1007V1006M302 1007V1005M308 1007V1006M319 1007V1005M333 1007V1006M338 1007V1005M342 1007V1005M346 1007V1005M358 1007V1006M359 1007V1006M363 1007V1005M372 1007V1005M376 1007V1006M378 1007V1006M384 1007V1005M410 1007V1006M417 1007V1005M426 1007V1006M428 1007V1005M433 1007V1006M442 1007V1006M471 1007V1005M473 1007V1005M475 1007V1005M481 1007V1005M485 1007V1006M499 1007V1005M505 1007V1005M512 1007V1005M513 1007V1006M523 1007V1005M532 1007V1005M541 1007V1005M542 1007V1005M553 1007V1005M556 1007V1006M565 1007V1006M575 1007V1006M585 1007V1006M600 1007V1005M601 1007V1006M607 1007V1006M610 1007V1005M620 1007V1005M621 1007V1006M625 1007V1006M626 1007V1005M628 1007V1005M629 1007V1005M641 1007V1006M647 1007V1005M651 1007V1006M654 1007V1005M658 1007V1006M660 1007V1005M661 1007V1005M663 1007V1005M667 1007V1006M668 1007V1005M669 1007V1006M670 1007V1006M671 1007V1006M673 1007V1005M675 1007V1006M676 1007V1005M681 1007V1006M682 1007V1005M683 1007V1005M684 1007V1006M685 1007V1006M688 1007V1005M695 1007V1005M697 1007V1005M700 1007V1005M704 1007V1005M705 1007V1006M707 1007V1005M708 1007V1006M713 1007V1006M716 1007V1006M717 1007V1006M720 1007V1005M722 1007V1006M724 1007V1006M725 1007V1006M727 1007V1006M739 1007V1005M742 1007V1005M743 1007V1006M750 1007V1005M758 1007V1006M759 1007V1006M760 1007V1006M761 1007V1005M762 1007V1006M766 1007V1006M767 1007V1006M768 1007V1005M769 1007V1006M779 1007V1006M783 1007V1004M791 1007V1004M793 1007V1003M796 1007V1006M799 1007V1006M805 1007V1004M807 1007V1005M809 1007V1004M810 1007V1003M812 1007V1003M816 1007V1006M824 1007V1005M831 1007V1006M832 1007V1005M836 1007V1005M837 1007V1005M841 1007V1006M845 1007V1005M847 1007V1006M849 1007V1005M850 1007V1005M851 1007V1004M853 1007V1005M854 1007V1004M855 1007V1005M856 1007V1004M860 1007V1003M861 1007V1005M863 1007V1003M864 1007V1005M867 1007V1006M868 1007V1005M870 1007V1005M871 1007V1004M872 1007V1005M876 1007V1003M877 1007V1005M878 1007V1004M879 1007V1003M881 1007V1005M883 1007V1006M884 1007V1005M885 1007V1005M886 1007V1004M887 1007V1003M888 1007V1004M892 1007V1005M893 1007V1005M894 1007V1003M895 1007V1003M897 1007V1005M898 1007V1005M900 1007V1005M901 1007V1005M902 1007V1005M903 1007V1003M905 1007V1006M907 1007V1005M908 1007V1006M909 1007V1006M912 1007V1004M914 1007V1006M915 1007V1006M916 1007V1005M918 1007V1006M919 1007V1004M921 1007V1005M923 1007V1004M924 1007V1004M925 1007V1005M926 1007V1004M927 1007V1003M928 1007V1006M929 1007V1005M930 1007V1005M933 1007V1003M935 1007V1003M936 1007V1005M937 1007V1006M938 1007V1005M939 1007V1005M940 1007V1006M941 1007V1005M942 1007V1005M944 1007V1005M945 1007V1004M946 1007V1003M947 1007V1004M948 1007V1005M950 1007V1005M951 1007V1003M952 1007V1003M953 1007V1005M954 1007V1004M955 1007V993M956 1007V988M957 1007V987M958 1007V1003M959 1007V993M960 1007V1003M961 1007V1004M962 1007V995M963 1007V999M964 1007V998M965 1007V999M966 1007V999M967 1007V996M968 1007V996M969 1007V1004M970 1007V997M971 1007V993M972 1007V1000M973 1007V990M974 1007V997M975 1007V979M976 1007V968M977 1007V949M978 1007V966M979 1007V965M980 1007V997M981 1007V954M982 1007V984M983 1007V984M984 1007V997M985 1007V998M986 1007V997M987 1007V1002M988 1007V997M989 1007V986M990 1007V992M991 1007V983M992 1007V990M993 1007V982M994 1007V977M995 1007V907M996 1007V962M997 1007V971M998 1007V996M999 1007V933M1000 1007V948M1001 1007V988M1002 1007V959M1003 1007V995M1004 1007V985M1005 1007V978M1006 1007V995M1007 1007V979M1008 1007V915M1009 1007V966M1010 1007V979M1011 1007V985M1012 1007V995M1013 1007V988M1014 1007V1000M1015 1007V998M1016 1007V989M1017 1007V982M1018 1007V999M1019 1007V997M1020 1007V963M1021 1007V973M1022 1007V947M1023 1007V977M1024 1007V985M1025 1007V995M1026 1007V981M1027 1007V1002M1028 1007V991M1029 1007V987M1030 1007V945M1031 1007V979M1032 1007V988M1033 1007V997M1034 1007V998M1035 1007V1002M1036 1007V989M1037 1007V952M1038 1007V822M1039 1007V924M1040 1007V952M1041 1007V982M1042 1007V976M1043 1007V981M1044 1007V965M1045 1007V994M1046 1007V961M1047 1007V979M1048 1007V971M1049 1007V993M1050 1007V999M1051 1007V987M1052 1007V998M1053 1007V984M1054 1007V985M1055 1007V1000M1056 1007V995M1057 1007V990M1058 1007V982M1059 1007V1001M1060 1007V978M1061 1007V997M1062 1007V991M1063 1007V972M1064 1007V917M1065 1007V966M1066 1007V938M1067 1007V842M1068 1007V933M1069 1007V958M1070 1007V938M1071 1007V999M1072 1007V993M1073 1007V995M1074 1007V1002M1075 1007V986M1076 1007V989M1077 1007V989M1078 1007V992M1079 1007V997M1080 1007V991M1081 1007V980M1082 1007V993M1083 1007V983M1084 1007V993M1085 1007V980M1086 1007V966M1087 1007V971M1088 1007V967M1089 1007V970M1090 1007V986M1091 1007V985M1092 1007V937M1093 1007V976M1094 1007V986M1095 1007V993M1096 1007V995M1097 1007V987M1098 1007V941M1099 1007V977M1100 1007V978M1101 1007V997M1102 1007V998M1103 1007V996M1104 1007V997M1105 1007V991M1106 1007V1004M1107 1007V992M1108 1007V981M1109 1007V978M1110 1007V911M1111 1007V964M1112 1007V978M1113 1007V968M1114 1007V998M1115 1007V976M1116 1007V992M1117 1007V977M1118 1007V1000M1119 1007V961M1120 1007V995M1121 1007V990M1122 1007V998M1123 1007V988M1124 1007V996M1125 1007V979M1126 1007V977M1127 1007V993M1128 1007V995M1129 1007V963M1130 1007V973M1131 1007V965M1132 1007V961M1133 1007V980M1134 1007V965M1135 1007V976M1136 1007V985M1137 1007V993M1138 1007V991M1139 1007V995M1140 1007V997M1141 1007V999M1142 1007V1005M1143 1007V1000M1144 1007V1005M1145 1007V993M1146 1007V1000M1147 1007V1002M1148 1007V990M1149 1007V990M1150 1007V949M1151 1007V981M1152 1007V990M1153 1007V955M1154 1007V955M1155 1007V957M1156 1007V956M1157 1007V994M1158 1007V961M1159 1007V988M1160 1007V990M1161 1007V995M1162 1007V998M1163 1007V995M1164 1007V990M1165 1007V976M1166 1007V1000M1167 1007V996M1168 1007V971M1169 1007V975M1170 1007V917M1171 1007V966M1172 1007V980M1173 1007V975M1174 1007V992M1175 1007V932M1176 1007V954M1177 1007V968M1178 1007V959M1179 1007V993M1180 1007V995M1181 1007V992M1182 1007V994M1183 1007V990M1184 1007V999M1185 1007V996M1186 1007V983M1187 1007V985M1188 1007V995M1189 1007V997M1190 1007V972M1191 1007V889M1192 1007V954M1193 1007V972M1194 1007V965M1195 1007V867M1196 1007V944M1197 1007V965M1198 1007V944M1199 1007V993M1200 1007V964M1201 1007V975M1202 1007V975M1203 1007V982M1204 1007V1003M1205 1007V997M1206 1007V998M1207 1007V969M1208 1007V989M1209 1007V995M1210 1007V999M1211 1007V984M1212 1007V1000M1213 1007V998M1214 1007V993M1215 1007V985M1216 1007V947M1217 1007V980M1218 1007V988M1219 1007V945M1220 1007V961M1221 1007V988M1222 1007V988M1223 1007V985M1224 1007V984M1225 1007V1000M1226 1007V1001M1227 1007V999M1228 1007V1001M1229 1007V1000M1230 1007V990M1231 1007V978M1232 1007V1002M1233 1007V1001M1234 1007V994M1235 1007V996M1236 1007V997M1237 1007V1000M1238 1007V1001M1239 1007V990M1240 1007V986M1241 1007V983M1242 1007V993M1243 1007V981M1244 1007V994M1245 1007V998M1246 1007V996M1247 1007V1000M1248 1007V978M1249 1007V998M1250 1007V960M1251 1007V1000M1252 1007V990M1253 1007V984M1254 1007V972M1255 1007V997M1256 1007V998M1257 1007V981M1258 1007V990M1259 1007V976M1260 1007V1001M1261 1007V987M1262 1007V966M1263 1007V935M1264 1007V975M1265 1007V1002M1266 1007V987M1267 1007V975M1268 1007V997M1269 1007V995M1270 1007V997M1271 1007V991M1272 1007V972M1273 1007V1000M1274 1007V1000M1275 1007V1005M1276 1007V990M1277 1007V995M1278 1007V986M1279 1007V975M1280 1007V899M1281 1007V958M1282 1007V975M1283 1007V978M1284 1007V1001M1285 1007V978M1286 1007V912M1287 1007V964M1288 1007V978M1289 1007V990M1290 1007V979M1291 1007V985M1292 1007V988M1293 1007V998M1294 1007V1003M1295 1007V1000M1296 1007V1004M1297 1007V996M1298 1007V997M1299 1007V995M1300 1007V994M1301 1007V997M1302 1007V1004M1303 1007V994M1304 1007V992M1305 1007V957M1306 1007V965M1307 1007V979M1308 1007V925M1309 1007V978M1310 1007V996M1311 1007V996M1312 1007V933M1313 1007V970M1314 1007V990M1315 1007V979M1316 1007V993M1317 1007V996M1318 1007V998M1319 1007V1001M1320 1007V990M1321 1007V997M1322 1007V983M1323 1007V997M1324 1007V994M1325 1007V978M1326 1007V952M1327 1007V987M1328 1007V959M1329 1007V979M1330 1007V951M1331 1007V988M1332 1007V997M1333 1007V992M1334 1007V975M1335 1007V987M1336 1007V982M1337 1007V983M1338 1007V987M1339 1007V987M1340 1007V996M1341 1007V1002M1342 1007V990M1343 1007V986M1344 1007V977M1345 1007V907M1346 1007V962M1347 1007V977M1348 1007V927M1349 1007V966M1350 1007V983M1351 1007V955M1352 1007V835M1353 1007V930M1354 1007V955M1355 1007V991M1356 1007V1002M1357 1007V979M1358 1007V992M1359 1007V990M1360 1007V1000M1361 1007V991M1362 1007V999M1363 1007V1003M1364 1007V992M1365 1007V986M1366 1007V986M1367 1007V1003M1368 1007V998M1369 1007V983M1370 1007V991M1371 1007V989M1372 1007V984M1373 1007V935M1374 1007V986M1375 1007V946M1376 1007V985M1377 1007V962M1378 1007V994M1379 1007V937M1380 1007V953M1381 1007V982M1382 1007V998M1383 1007V995M1384 1007V997M1385 1007V985M1386 1007V994M1387 1007V999M1388 1007V992M1389 1007V983M1390 1007V983M1391 1007V999M1392 1007V980M1393 1007V990M1394 1007V989M1395 1007V982M1396 1007V926M1397 1007V952M1398 1007V983M1399 1007V968M1400 1007V945M1401 1007V979M1402 1007V985M1403 1007V997M1404 1007V997M1405 1007V994M1406 1007V1000M1407 1007V993M1408 1007V996M1409 1007V975M1410 1007V985M1411 1007V987M1412 1007V998M1413 1007V978M1414 1007V987M1415 1007V981M1416 1007V990M1417 1007V953M1418 1007V951M1419 1007V968M1420 1007V976M1421 1007V990M1422 1007V970M1423 1007V978M1424 1007V977M1425 1007V987M1426 1007V996M1427 1007V988M1428 1007V997M1429 1007V997M1430 1007V995M1431 1007V999M1432 1007V983M1433 1007V988M1434 1007V981M1435 1007V976M1436 1007V955M1437 1007V977M1438 1007V972M1439 1007V918M1440 1007V968M1441 1007V984M1442 1007V996M1443 1007V988M1444 1007V998M1445 1007V1001M1446 1007V1001M1447 1007V1002M1448 1007V995M1449 1007V987M1450 1007V992M1451 1007V1000M1452 1007V994M1453 1007V989M1454 1007V996M1455 1007V992M1456 1007V997M1457 1007V998M1458 1007V1001M1459 1007V990M1460 1007V976M1461 1007V987M1462 1007V992M1463 1007V962M1464 1007V967M1465 1007V922M1466 1007V969M1467 1007V982M1468 1007V1001M1469 1007V991M1470 1007V977M1471 1007V999M1472 1007V999M1473 1007V998M1474 1007V990M1475 1007V996M1476 1007V987M1477 1007V985M1478 1007V989M1479 1007V1000M1480 1007V987M1481 1007V978M1482 1007V924M1483 1007V996M1484 1007V957M1485 1007V1001M1486 1007V975M1487 1007V982M1488 1007V995M1489 1007V958M1490 1007V842M1491 1007V933M1492 1007V958M1493 1007V997M1494 1007V1001M1495 1007V978M1496 1007V998M1497 1007V996M1498 1007V995M1499 1007V1001M1500 1007V1002M1501 1007V1005M1502 1007V980M1503 1007V991M1504 1007V1000M1505 1007V989M1506 1007V981M1507 1007V936M1508 1007V995M1509 1007V997M1510 1007V1000M1511 1007V985M1512 1007V997M1513 1007V997M1514 1007V1004M1515 1007V995M1516 1007V999M1517 1007V996M1518 1007V996M1519 1007V1003M1520 1007V1003M1521 1007V999M1522 1007V999M1523 1007V1001M1524 1007V973M1525 1007V983M1526 1007V971M1527 1007V991M1528 1007V986M1529 1007V988M1530 1007V970M1531 1007V981M1532 1007V995M1533 1007V991M1534 1007V986M1535 1007V969M1536 1007V1003M1537 1007V988M1538 1007V1002M1539 1007V986M1540 1007V937M1541 1007V976M1542 1007V986M1543 1007V1001M1544 1007V1003M1545 1007V989M1546 1007V991M1547 1007V987M1548 1007V978M1549 1007V953M1550 1007V967M1551 1007V1003M1552 1007V976M1553 1007V993M1554 1007V985M1555 1007V982M1556 1007V1000M1557 1007V995M1558 1007V994M1559 1007V961M1560 1007V987M1561 1007V1001M1562 1007V1004M1563 1007V990M1564 1007V989M1565 1007V1002M1566 1007V994M1567 1007V992M1568 1007V1000M1569 1007V986M1570 1007V992M1571 1007V981M1572 1007V985M1573 1007V982M1574 1007V983M1575 1007V982M1576 1007V995M1577 1007V977M1578 1007V982M1579 1007V995M1580 1007V985M1581 1007V1002M1582 1007V993M1583 1007V989M1584 1007V1001M1585 1007V997M1586 1007V991M1587 1007V988M1588 1007V995M1589 1007V984M1590 1007V994M1591 1007V988M1592 1007V995M1593 1007V948M1594 1007V953M1595 1007V980M1596 1007V987M1597 1007V976M1598 1007V902M1599 1007V960M1600 1007V976M1601 1007V985M1602 1007V990M1603 1007V991M1604 1007V984M1605 1007V983M1606 1007V995M1607 1007V994M1608 1007V999M1609 1007V987M1610 1007V976M1611 1007V992M1612 1007V997M1613 1007V996M1614 1007V993M1615 1007V953M1616 1007V980M1617 1007V979M1618 1007V998M1619 1007V978M1620 1007V969M1621 1007V999M1622 1007V996M1623 1007V996M1624 1007V997M1625 1007V999M1626 1007V999M1627 1007V998M1628 1007V994M1629 1007V1001M1630 1007V1002M1631 1007V982M1632 1007V991M1633 1007V985M1634 1007V1002M1635 1007V999M1636 1007V998M1637 1007V975M1638 1007V938M1639 1007V960M1640 1007V992M1641 1007V981M1642 1007V971M1643 1007V999M1644 1007V991M1645 1007V979M1646 1007V987M1647 1007V998M1648 1007V999M1649 1007V980M1650 1007V949M1651 1007V981M1652 1007V990M1653 1007V992M1654 1007V990M1655 1007V952M1656 1007V967M1657 1007V982M1658 1007V970M1659 1007V919M1660 1007V990M1661 1007V979M1662 1007V993M1663 1007V1001M1664 1007V984M1665 1007V975M1666 1007V988M1667 1007V997M1668 1007V985M1669 1007V992M1670 1007V1001M1671 1007V983M1672 1007V937M1673 1007V976M1674 1007V979M1675 1007V1004M1676 1007V998M1677 1007V969M1678 1007V973M1679 1007V973M1680 1007V987M1681 1007V926M1682 1007V991M1683 1007V973M1684 1007V969M1685 1007V998M1686 1007V949M1687 1007V1000M1688 1007V995M1689 1007V993M1690 1007V1000M1691 1007V986M1692 1007V937M1693 1007V976M1694 1007V935M1695 1007V975M1696 1007V985M1697 1007V1005M1698 1007V998M1699 1007V993M1700 1007V981M1701 1007V985M1702 1007V984M1703 1007V924M1704 1007V927M1705 1007V889M1706 1007V947M1707 1007V972M1708 1007V973M1709 1007V989M1710 1007V993M1711 1007V981M1712 1007V919M1713 1007V967M1714 1007V981M1715 1007V972M1716 1007V997M1717 1007V998M1718 1007V995M1719 1007V992M1720 1007V965M1721 1007V968M1722 1007V972M1723 1007V994M1724 1007V963M1725 1007V971M1726 1007V960M1727 1007V979M1728 1007V979M1729 1007V984M1730 1007V932M1731 1007V947M1732 1007V981M1733 1007V958M1734 1007V986M1735 1007V983M1736 1007V982M1737 1007V990M1738 1007V985M1739 1007V982M1740 1007V922M1741 1007V969M1742 1007V976M1743 1007V917M1744 1007V939M1745 1007V980M1746 1007V944M1747 1007V929M1748 1007V984M1749 1007V951M1750 1007V937M1751 1007V981M1752 1007V919M1753 1007V967M1754 1007V981M1755 1007V998M1756 1007V983M1757 1007V990M1758 1007V976M1759 1007V978M1760 1007V912M1761 1007V964M1762 1007V978M1763 1007V972M1764 1007V949M1765 1007V968M1766 1007V988M1767 1007V953M1768 1007V952M1769 1007V920M1770 1007V960M1771 1007V985M1772 1007V982M1773 1007V952M1774 1007V985M1775 1007V997M1776 1007V988M1777 1007V980M1778 1007V975M1779 1007V1000M1780 1007V998M1781 1007V979M1782 1007V915M1783 1007V966M1784 1007V979M1785 1007V985M1786 1007V988M1787 1007V980M1788 1007V970M1789 1007V967M1790 1007V981M1791 1007V922M1792 1007V946M1793 1007V925M1794 1007V941M1795 1007V991M1796 1007V969M1797 1007V967M1798 1007V976" stroke="#0000c8" stroke-width="1" fill="none" transform="translate(.5,0)"/></g><polyline points="84,1003 87,1003 90,1003 93,1003 96,1003 99,1003 102,1003 105,1003 108,1003 111,1003 114,1003 117,1003 120,1003 123,1003 126,1003 129,1003 132,1003 135,1003 138,1003 141,1003 144,1003 147,1003 150,1003 153,1003 156,1003 159,1003 162,1003 165,1003 168,1003 171,1003 174,1003 177,1003 180,1003 183,1003 186,1003 189,1003 192,1003 195,1003 198,1003 201,1003 204,1003 207,1003 210,1003 213,1003 216,1003 219,1003 222,1003 225,1003 228,1003 231,1003 234,1003 237,1003 240,1003 242,1002 245,1002 248,1002 251,1002 254,1002 257,1002 260,1002 263,1002 266,1002 269,1002 272,1002 275,1002 278,1002 281,1002 284,1002 287,1002 290,1002 293,1002 296,1002 299,1002 302,1002 305,1002 308,1002 310,1003 313,1003 316,1003 319,1003 322,1003 325,1003 328,1003 331,1003 334,1003 337,1003 340,1003 343,1003 345,1002 348,1002 352,1002 355,1002 358,1002 362,1002 365,1002 367,1003 370,1003 374,1003 377,1003 381,1003 384,1003 386,1002 389,1002 392,1002 395,1002 398,1002 401,1002 404,1002 407,1002 410,1002 413,1002 416,1002 419,1002 422,1002 425,1002 428,1002 431,1002 434,1002 437,1002 440,1002 443,1002 446,1002 449,1002 452,1002 455,1002 458,1002 461,1002 464,1002 467,1002 470,1002 473,1002 476,1002 479,1002 482,1002 485,1002 488,1002 491,1002 494,1002 497,1002 500,1002 503,1002 506,1002 509,1002 512,1002 515,1002 518,1002 521,1002 524,1002 527,1002 530,1002 533,1002 536,1002 539,1002 542,1002 545,1002 548,1002 552,1001 555,1001 558,1001 561,1001 564,1001 567,1001 570,1001 573,1001 576,1001 579,1001 582,1001 585,1001 588,1001 591,1001 594,1001 597,1001 600,1001 603,1001 606,1001 609,1001 612,1001 615,1001 618,1001 621,1001 624,1001 627,1001 630,1001 633,1001 636,1001 639,1001 642,1001 645,1001 648,1001 652,1000 655,1000 658,1000 661,1000 664,1000 667,1000 670,1000 673,1000 676,1000 679,1000 682,1000 685,1000 688,1000 691,1000 694,1000 697,1000 700,1000 703,1000 706,1000 709,1000 712,1000 715,1000 718,1000 722,1000 725,1000 728,1000 731,1000 734,1000 737,1000 740,1000 743,999 746,999 749,999 752,999 755,999 758,999 762,999 765,999 768,999 771,999 774,999 777,999 780,999 783,999 787,998 790,998 793,998 797,997 800,997 803,997 806,997 809,997 812,997 815,996 818,996 821,996 824,996 827,996 830,996 833,996 836,996 839,996 842,996 845,996 848,995 851,995 854,995 857,995 860,995 863,995 866,995 869,995 872,994 875,994 878,994 882,994 885,994 888,994 891,993 894,993 897,993 900,993 903,993 906,993 909,993 912,993 915,992 918,992 921,992 924,992 928,992 931,992 934,992 937,992 940,992 943,991 946,991 949,991 952,991 955,991 958,991 962,990 965,990 968,990 971,990 975,989 978,989 982,987 985,984 990,979 993,978 997,976 1000,975 1003,971 1006,965 1010,954 1013,948 1016,939 1020,931 1023,928 1026,925 1027,915 1031,907 1035,901 1040,896 1043,893 1047,890 1050,888 1053,887 1057,886 1060,884 1063,881 1066,880 1068,871 1072,870 1075,868 1078,868 1081,867 1084,867 1087,867 1090,867 1093,866 1097,865 1100,864 1103,863 1107,864 1110,863 1113,862 1117,862 1120,860 1123,861 1127,861 1130,861 1134,860 1137,861 1138,858 1141,857 1144,854 1147,855 1150,860 1153,858 1157,859 1160,859 1163,859 1167,859 1170,858 1173,858 1177,856 1180,857 1183,856 1187,857 1190,855 1193,856 1197,856 1200,857 1203,856 1206,856 1209,855 1212,855 1215,854 1218,855 1221,855 1224,854 1227,854 1230,855 1233,854 1236,853 1240,853 1243,852 1246,851 1249,852 1252,851 1256,851 1259,850 1262,849 1265,850 1268,849 1271,849 1274,848 1278,848 1281,847 1284,847 1287,846 1290,846 1293,845 1297,844 1300,844 1303,843 1307,842 1310,841 1313,841 1317,840 1320,839 1323,838 1327,838 1330,837 1333,836 1337,836 1340,834 1343,835 1347,834 1350,833 1353,837 1356,835 1360,834 1363,834 1366,834 1369,834 1372,834 1375,834 1378,834 1382,834 1385,833 1388,833 1391,833 1394,833 1397,832 1400,833 1403,834 1406,833 1409,833 1412,833 1415,833 1418,833 1422,833 1425,832 1428,833 1431,833 1434,833 1437,833 1440,833 1445,835 1448,836 1451,836 1454,836 1457,837 1460,837 1463,837 1466,837 1469,838 1472,837 1475,836 1478,837 1481,837 1484,836 1487,838 1490,837 1493,836 1496,837 1499,837 1502,837 1505,838 1508,837 1511,838 1514,837 1517,838 1520,837 1523,839 1526,838 1529,838 1532,838 1535,839 1538,839 1542,840 1545,839 1548,840 1551,840 1554,840 1557,839 1560,839 1563,841 1566,840 1569,841 1572,840 1575,840 1578,840 1582,841 1585,841 1588,840 1591,840 1594,841 1597,841 1600,840 1603,841 1606,841 1609,840 1612,840 1615,840 1618,840 1622,839 1625,839 1628,840 1631,839 1634,839 1637,838 1640,838 1643,838 1646,838 1649,838 1652,838 1655,838 1658,838 1661,837 1664,837 1667,837 1670,836 1673,837 1676,837 1679,837 1682,836 1685,836 1688,836 1691,836 1694,836 1697,836 1700,835 1703,835 1707,835 1710,835 1713,833 1717,832 1720,831 1723,833 1726,833 1729,833 1732,832 1735,833 1738,832 1741,833 1744,832 1748,830 1751,830 1754,830 1757,830 1760,829 1763,828 1766,828 1769,827 1772,826 1775,824 1778,823 1782,823 1785,823 1788,822 1791,823 1795,822 1798,822" fill="none" stroke="#f2a900" stroke-width="1" shape-rendering="crispEdges" transform="translate(.5,.5)"/><g shape-rendering="crispEdges"><rect x="47" y="205" width="1805" height="587" fill="none" stroke="#404040" stroke-width="1" transform="translate(.5,.5)"/>
<rect x="47" y="808" width="1805" height="199" fill="none" stroke="#404040" stroke-width="1" transform="translate(.5,.5)"/>
<path d="M1852 259h4M1852 362h4M1852 466h4M1852 573h4M1852 682h4M1852 845h4M1852 886h4M1852 926h4M1852 967h4M44 834h3M44 868h3M44 902h3M44 937h3M44 971h3M44 1005h3M87 792v3M145 792v3M272 792v3M410 792v3M504 792v3M712 792v3M978 792v3M1263 792v3M1580 792v3" stroke="#404040" stroke-width="1" fill="none" transform="translate(.5,.5)"/></g><text x="1858" y="262.8" font-size="9" fill="#000" textLength="35.5" lengthAdjust="spacing">2 350,00</text>
<text x="1858" y="365.8" font-size="9" fill="#000" textLength="35.5" lengthAdjust="spacing">2 300,00</text>
<text x="1858" y="469.8" font-size="9" fill="#000" textLength="35.5" lengthAdjust="spacing">2 250,00</text>
<text x="1858" y="576.8" font-size="9" fill="#000" textLength="35.5" lengthAdjust="spacing">2 200,00</text>
<text x="1858" y="685.8" font-size="9" fill="#000" textLength="35.5" lengthAdjust="spacing">2 150,00</text>
<text x="1858" y="848.8" font-size="9" fill="#000">2 000</text>
<text x="1858" y="889.8" font-size="9" fill="#000">1 500</text>
<text x="1858" y="929.8" font-size="9" fill="#000">1 000</text>
<text x="1858" y="970.8" font-size="9" fill="#000">500</text>
<text x="43" y="837.8" font-size="9" fill="#000" text-anchor="end">50 000</text>
<text x="43" y="871.8" font-size="9" fill="#000" text-anchor="end">40 000</text>
<text x="43" y="905.8" font-size="9" fill="#000" text-anchor="end">30 000</text>
<text x="43" y="940.8" font-size="9" fill="#000" text-anchor="end">20 000</text>
<text x="43" y="974.8" font-size="9" fill="#000" text-anchor="end">10 000</text>
<text x="43" y="1008.8" font-size="9" fill="#000" text-anchor="end">0</text>
<text x="89" y="803.2" font-size="9" fill="#000" text-anchor="middle" textLength="44.5" lengthAdjust="spacing">19.02.2019</text>
<text x="147" y="803.2" font-size="9" fill="#000" text-anchor="middle" textLength="44.5" lengthAdjust="spacing">11.03.2019</text>
<text x="274" y="803.2" font-size="9" fill="#000" text-anchor="middle" textLength="44.5" lengthAdjust="spacing">29.03.2019</text>
<text x="412" y="803.2" font-size="9" fill="#000" text-anchor="middle" textLength="44.5" lengthAdjust="spacing">18.04.2019</text>
<text x="506" y="803.2" font-size="9" fill="#000" text-anchor="middle" textLength="44.5" lengthAdjust="spacing">08.05.2019</text>
<text x="714" y="803.2" font-size="9" fill="#000" text-anchor="middle" textLength="44.5" lengthAdjust="spacing">28.05.2019</text>
<text x="980" y="803.2" font-size="9" fill="#000" text-anchor="middle" textLength="44.5" lengthAdjust="spacing">17.06.2019</text>
<text x="1265" y="803.2" font-size="9" fill="#000" text-anchor="middle" textLength="44.5" lengthAdjust="spacing">05.07.2019</text>
<text x="1582" y="803.2" font-size="9" fill="#000" text-anchor="middle" textLength="44.5" lengthAdjust="spacing">25.07.2019</text><line x1="1170" y1="296" x2="1201" y2="418" stroke="#ff0000" stroke-width="1.6"/>
<line x1="1201" y1="424" x2="1235" y2="319" stroke="#3030ff" stroke-width="1.8"/>
<line x1="1228" y1="320" x2="1277" y2="320" stroke="#ff0000" stroke-width="1.5"/>
<line x1="1201" y1="417" x2="1580" y2="300" stroke="#ff0000" stroke-width="1.6"/>
<line x1="1192" y1="422.5" x2="1748" y2="422.5" stroke="#ff0000" stroke-width="1.6"/>
<polyline points="1179,459 1203,428 1206.7,479" fill="none" stroke="#ff0000" stroke-width="1.5"/>
<polyline points="1581,290.6 1562,290.4 1596,271 1583,263 1574,273.8" fill="none" stroke="#ff0000" stroke-width="1.4"/>
<line x1="1576.3" y1="300" x2="1782.3" y2="706" stroke="#ff0000" stroke-width="2.0"/>
<polyline points="1580.5,295 1580.5,300 1616,704.6 1616,687" fill="none" stroke="#ff0000" stroke-width="1.2"/>
<line x1="1579" y1="295" x2="1616" y2="295" stroke="#ff0000" stroke-width="1.2"/>
<text x="1579.5" y="293.5" font-size="10" fill="#ff0000" textLength="25.5" lengthAdjust="spacing">100%</text>
<line x1="1579" y1="389.5" x2="1616" y2="389.5" stroke="#ff0000" stroke-width="1.2"/>
<text x="1579.5" y="387.5" font-size="10" fill="#ff0000" textLength="29" lengthAdjust="spacing">76,4%</text>
<line x1="1579" y1="447.5" x2="1616" y2="447.5" stroke="#ff0000" stroke-width="1.2"/>
<text x="1579.5" y="445.5" font-size="10" fill="#ff0000" textLength="29" lengthAdjust="spacing">61,8%</text>
<line x1="1579" y1="496.5" x2="1616" y2="496.5" stroke="#ff0000" stroke-width="1.2"/>
<text x="1579.5" y="494.5" font-size="10" fill="#ff0000" textLength="20" lengthAdjust="spacing">50%</text>
<line x1="1579" y1="544.5" x2="1616" y2="544.5" stroke="#ff0000" stroke-width="1.2"/>
<text x="1579.5" y="542.5" font-size="10" fill="#ff0000" textLength="29" lengthAdjust="spacing">38,2%</text>
<line x1="1579" y1="605.5" x2="1616" y2="605.5" stroke="#ff0000" stroke-width="1.2"/>
<text x="1579.5" y="603.5" font-size="10" fill="#ff0000" textLength="29" lengthAdjust="spacing">23,6%</text>
<line x1="1579" y1="704.8" x2="1616" y2="704.8" stroke="#ff0000" stroke-width="1.2"/>
<text x="1579.5" y="703.0" font-size="10" fill="#ff0000" textLength="15" lengthAdjust="spacing">0%</text>
<line x1="1621" y1="544.3" x2="1825" y2="545" stroke="#ff0000" stroke-width="1.6"/>
<polyline points="1651,530.4 1623,544.3 1652,559.4" fill="none" stroke="#ff0000" stroke-width="1.5"/>
<line x1="1619" y1="606" x2="1805" y2="604.4" stroke="#ff0000" stroke-width="1.6"/>
<polyline points="1644.4,593 1619,606 1637,613" fill="none" stroke="#ff0000" stroke-width="1.5"/>
<line x1="1751" y1="637" x2="1791" y2="638" stroke="#ff0000" stroke-width="1.4"/>
<polyline points="1782,705 1791,635.5 1811.8,659 1819,604.4 1846,776" fill="none" stroke="#ff0000" stroke-width="1.5"/>
<line x1="1817.5" y1="604" x2="1822" y2="620" stroke="#ff0000" stroke-width="1.3"/>
<line x1="1782" y1="706.7" x2="1815.7" y2="601.5" stroke="#3030ff" stroke-width="1.8"/>
<polyline points="1832.6,764.4 1844.4,786.7 1862.8,760" fill="none" stroke="#ff0000" stroke-width="1.6"/>
<polyline points="1824,574 1809,583 1831,584.3 1832.6,579" fill="none" stroke="#ff0000" stroke-width="1.4"/>
<polyline points="1771,712 1790.5,706.7 1777.8,725 1785.8,723 1769,736" fill="none" stroke="#ff0000" stroke-width="1.5"/>
<text x="1237" y="316.5" font-size="11" fill="#ff0000" font-weight="bold">a</text>
<text x="1252" y="310.5" font-size="11" fill="#ff0000" font-weight="bold">OB</text>
<text x="1552.5" y="299" font-size="11" fill="#ff0000" font-weight="bold">c</text>
<text x="1465.5" y="468" font-size="11" fill="#ff0000" font-weight="bold">b</text>
<text x="1794" y="598.5" font-size="11" fill="#ff0000" font-weight="bold">OB</text>
<text x="1821.5" y="601" font-size="11" fill="#ff0000" font-weight="bold">c</text>
<text x="1785.5" y="632" font-size="11" fill="#ff0000" font-weight="bold">a</text>
<text x="1812" y="674" font-size="11" fill="#ff0000" font-weight="bold">b</text></svg>
<div class="abs" style="left:0;top:114px;width:5px;height:926px;background:linear-gradient(90deg,#efeff1 0,#efeff1 2px,#a0a4ae 2px,#a0a4ae 3px,#e4e4e8 3px,#e4e4e8 4px,#70747c 4px)"></div>
<div class="abs" style="left:4px;top:114px;width:1913px;height:1px;background:#2a3494"></div>
<div class="abs" style="left:1914px;top:114px;width:6px;height:926px;background:linear-gradient(90deg,#e4e4e8 0,#e4e4e8 1px,#7c8088 1px,#7c8088 2px,#d8d8dc 2px,#d8d8dc 3px,#9a9eaa 3px,#9a9eaa 4px,#eeeeee 4px)"></div>
<div class="abs" style="left:0;top:1036px;width:1918px;height:3px;background:linear-gradient(#8a8e96,#6e727a 60%,#9a9ea6)"></div>
<div class="abs" style="left:0;top:1039px;width:1920px;height:1px;background:#e8e8ea"></div>
<div class="abs" style="left:14px;top:189px;width:77px;height:15px;border:1px solid #404040;background:#fff"></div>
<div class="abs" style="left:18px;top:196px;width:10px;height:1px;background:#0a8a0a"></div>
<div class="abs" style="left:31px;top:191px;font-size:10px;line-height:11px;color:#0a8a0a;letter-spacing:.15px;white-space:nowrap">FW20U1920</div>
<div class="abs" id="info" style="left:47px;top:205px;width:416px;height:15px;border:1px solid #404040;background:#fff8c8;font-size:10px;line-height:13.500px;padding-left:4px;color:#000;white-space:pre;letter-spacing:.28px">FW20U1920 [Otw.: 2 147,00  Max.: 2 147,00  Min.: 2 147,00  Zamk.: 2 147,00] (+0,0%)</div>
<div class="abs" id="vinfo" style="left:47px;top:808px;width:172px;height:15px;border:1px solid #404040;background:#fff8c8;font-size:10px;line-height:13px;padding-left:4px;color:#000;white-space:pre;letter-spacing:.32px">Otwarte Pozycje, VOL - Volume [5]</div>
<svg class="abs" style="left:1894px;top:809px;overflow:hidden" width="14" height="33" viewBox="0 0 14 33"><circle cx="9.500" cy="8.500" r="7.500" fill="#f4f4f4" stroke="#b4b7bd"/><path d="M6.300 5.300l6.400 6.400M12.700 5.300l-6.400 6.400" stroke="#c01020" stroke-width="1.800"/><circle cx="9.500" cy="24" r="7.500" fill="#f4f4f4" stroke="#b4b7bd"/><circle cx="9.500" cy="24" r="4.600" fill="none" stroke="#6a0a28" stroke-width="1.700"/><circle cx="9.500" cy="24" r="2" fill="#5a0820"/></svg>
<div class="abs" style="left:210px;top:1016px;font-size:10.500px;line-height:13px;color:#000;white-space:pre">pobrane</div>
<div class="abs" style="left:200.500px;top:1016px;font-size:10.500px;line-height:13px;color:#000;">e</div>
<div class="abs" style="left:3px;top:1007px;width:200px;height:30px;background:#26559a;border-radius:6px"></div>
<div class="abs" style="left:35px;top:1015px;font-size:13px;line-height:16px;color:#fff;font-weight:bold;letter-spacing:-.3px;white-space:nowrap;text-shadow:0 0 1px #9ab">Wykres ...</div>
<svg class="abs" style="left:17px;top:1015px" width="6" height="14" viewBox="0 0 6 14"><path d="M1 1h1M4 1h1M1 4h1M4 4h1M1 7h1M4 7h1M1 10h1M4 10h1" stroke="#b8c8e0" stroke-width="1.200"/></svg>
<svg class="abs" style="left:123px;top:1011px" width="20" height="20" viewBox="0 0 20 20"><circle cx="10" cy="10" r="9" fill="#c81820"/><circle cx="10" cy="10" r="9" fill="none" stroke="#8a1018" stroke-width="1"/><ellipse cx="10" cy="6" rx="6.500" ry="3.500" fill="#e85860" opacity=".6"/><rect x="6" y="10" width="8" height="2.200" fill="#fff"/></svg>
<svg class="abs" style="left:149px;top:1011px" width="20" height="20" viewBox="0 0 20 20"><circle cx="10" cy="10" r="9" fill="#c81820"/><circle cx="10" cy="10" r="9" fill="none" stroke="#8a1018" stroke-width="1"/><ellipse cx="10" cy="6" rx="6.500" ry="3.500" fill="#e85860" opacity=".6"/><rect x="6" y="5.500" width="8" height="8" fill="none" stroke="#fff" stroke-width="1.400"/><rect x="6" y="5.500" width="8" height="2.500" fill="#fff"/></svg>
<svg class="abs" style="left:175px;top:1011px" width="20" height="20" viewBox="0 0 20 20"><circle cx="10" cy="10" r="9" fill="#c81820"/><circle cx="10" cy="10" r="9" fill="none" stroke="#8a1018" stroke-width="1"/><ellipse cx="10" cy="6" rx="6.500" ry="3.500" fill="#e85860" opacity=".6"/><path d="M6 6l8 8M14 6l-8 8" stroke="#fff" stroke-width="2.200"/></svg>
<div class="abs" style="left:0;top:1040px;width:1920px;height:40px;background:linear-gradient(#3a7a6e 0,#256a5c 2px,#1f6152 45%,#1c5b4e 100%)"></div>
<div class="abs" style="left:0;top:1040px;width:1920px;height:1px;background:#5a8a84"></div>
<div class="abs" style="left:1545px;top:1041px;width:230px;height:39px;background:linear-gradient(90deg,rgba(255,255,255,0),rgba(120,200,180,.16),rgba(255,255,255,0))"></div>
<svg class="abs" style="left:6px;top:1041px" width="42" height="40" viewBox="0 0 42 40"><defs><radialGradient id="og" cx=".5" cy=".35" r=".7"><stop offset="0" stop-color="#7ac0f0"/><stop offset=".55" stop-color="#2a6ab8"/><stop offset="1" stop-color="#14386a"/></radialGradient></defs><circle cx="21" cy="20" r="18.500" fill="url(#og)" stroke="#0c2848" stroke-width="1"/><ellipse cx="21" cy="11" rx="14" ry="8" fill="#fff" opacity=".25"/><g transform="translate(21 20) scale(1.3) translate(-20.500 -20)"><path d="M13 13q3.500-2 7-.500l-1 6.500q-3.500-1.500-7 .500z" fill="#e8502a"/><path d="M22 12.800q3.500 1.500 7-.300l-1 6.500q-3.500 1.800-7 .300z" fill="#8ac83a"/><path d="M11.800 21q3.500-2 7-.500l-1 6.500q-3.500-1.500-7 .500z" fill="#3a9ae8"/><path d="M20.800 20.800q3.500 1.500 7-.300l-1 6.500q-3.500 1.800-7 .300z" fill="#f8c828"/></g></svg>
<svg class="abs" style="left:72px;top:1044px" width="34" height="34" viewBox="0 0 34 34"><path d="M2 6h10l2 3h16v20H2z" fill="#e8c868" stroke="#b89838" stroke-width=".8"/><path d="M2 11h30v18H2z" fill="#f4dc88" stroke="#b89838" stroke-width=".8"/><rect x="4" y="4" width="3" height="2" fill="#3ab83a"/><rect x="13" y="7" width="3" height="2" fill="#e83a3a"/><path d="M5 22h22v10H5z" fill="#9ad0f0" stroke="#5a9ac8" stroke-width="1"/><path d="M9 25h14v7H9z" fill="#d8eefa"/></svg>
<svg class="abs" style="left:137px;top:1045px" width="29" height="29" viewBox="0 0 29 29"><rect width="29" height="29" fill="#c80a0a"/><rect width="29" height="12" fill="#e81818" opacity=".6"/><path d="M6 22q5-3 8-14q.5-2.500-1-2.500t-.5 3q2 7 10 9q2 .3 2-1t-3-1q-8 .500-15 6.500" fill="none" stroke="#fff" stroke-width="1.300"/></svg>
<svg class="abs" style="left:196px;top:1043px" width="34" height="34" viewBox="0 0 34 34"><defs><radialGradient id="g3" cx=".4" cy=".3" r=".8"><stop offset="0" stop-color="#4a5af8"/><stop offset="1" stop-color="#0a10a8"/></radialGradient></defs><circle cx="17" cy="17" r="16" fill="url(#g3)"/><text x="17" y="24" font-size="20" font-style="italic" font-family="Liberation Serif,serif" text-anchor="middle" fill="#fff">3G</text></svg>
<svg class="abs" style="left:260px;top:1045px" width="30" height="30" viewBox="0 0 30 30"><rect x="7" y="1" width="21" height="24" fill="#8ab8d8" opacity=".8"/><rect x="4" y="3" width="21" height="24" fill="#6aa0c8" opacity=".85"/><rect x="1" y="5" width="21" height="24" fill="#5a98c8"/><circle cx="11.500" cy="17" r="8" fill="#f08a18" stroke="#fff" stroke-width="1.200"/><path d="M9 12.500l7 4.500-7 4.500z" fill="#fff"/></svg>
<div class="abs" style="left:307px;top:1041px;width:59px;height:39px;border:1px solid #a8ccc4;border-radius:3px;background:linear-gradient(rgba(255,255,255,.32),rgba(255,255,255,.12) 50%,rgba(255,255,255,.05) 51%,rgba(255,255,255,.15))"></div>
<svg class="abs" style="left:320px;top:1042px" width="34" height="36" viewBox="0 0 34 36"><defs><linearGradient id="ff" x1=".85" y1=".05" x2=".15" y2=".95"><stop offset="0" stop-color="#fff04a"/><stop offset=".35" stop-color="#ffb01e"/><stop offset=".65" stop-color="#ff5a28"/><stop offset="1" stop-color="#e8207a"/></linearGradient><linearGradient id="fb" x1=".5" y1="0" x2=".5" y2="1"><stop offset="0" stop-color="#18a8f8"/><stop offset=".55" stop-color="#1a50e0"/><stop offset="1" stop-color="#3a189a"/></linearGradient><linearGradient id="fy" x1=".3" y1="0" x2=".7" y2="1"><stop offset="0" stop-color="#fff36a"/><stop offset=".6" stop-color="#ffd030"/><stop offset="1" stop-color="#ff9a18"/></linearGradient></defs><circle cx="17" cy="19" r="14.500" fill="url(#ff)"/><path d="M3.500 12.500l2.500-6 3.500 4.500z" fill="#ff6a22"/><circle cx="18" cy="16" r="9.300" fill="url(#fb)"/><path d="M5 12q4-4 9-2.500q2 1 1.500 3l3 .5q-2 1.500-1.500 3q3.500-.500 5 2q-2 4.500-8 3.500q-5-1-6-5q-1 3 1 6q-5-3-4-10.500z" fill="#ff7a1e"/><path d="M10 20q2 3 6 3.500q4 0 6-3q-1 5-7 5q-4-.500-5-5.500z" fill="#ff9a2a"/><path d="M21 2.500q7 4 9.500 12q1.500 8-4 14q3-7 0-13q-1.500-4-5-6.500q-1.500-3-.5-6.500z" fill="url(#fy)"/></svg>
<div class="abs" style="left:370px;top:1041px;width:58px;height:39px;border:1px solid #d8ece8;border-radius:3px;background:linear-gradient(rgba(255,255,255,.75),rgba(255,255,255,.45) 50%,rgba(255,255,255,.3) 51%,rgba(255,255,255,.45))"></div>
<div class="abs" style="left:383px;top:1044px;width:32px;height:32px;background:#fff"></div>
<svg class="abs" style="left:383px;top:1044px" width="32" height="32" viewBox="0 0 32 32"><path d="M11.200 15.500q.3-1.500 2-2v7l-2 .6z" fill="#e02028"/><path d="M15.400 11.500q.3-1.500 2.100-2.200v10.600l-2.100 .8z" fill="#14286a"/><path d="M19.700 7.800q.3-1.500 2.100-2.200v13l-2.100 .9z" fill="#14286a"/><text x="16" y="28.200" font-size="5.600" font-weight="bold" font-family="Liberation Sans,sans-serif" text-anchor="middle" fill="#222" textLength="24">ePROMAK</text></svg>
<div class="abs" style="left:1708px;top:1052px;font-size:12px;line-height:12px;color:#fff">PL</div>
<svg class="abs" style="left:1728px;top:1050px" width="18" height="16" viewBox="0 0 18 16"><rect x="1.500" y="6.500" width="14" height="8" rx="1.500" fill="#c8d0d0" stroke="#e8eeee" stroke-width=".8"/><path d="M4 9h9M4 11.500h9" stroke="#5a6a6a" stroke-width="1" stroke-dasharray="1.500 1"/><path d="M8 6q1-4 6-5" stroke="#c8d0d0" stroke-width="1" fill="none"/></svg>
<svg class="abs" style="left:1757px;top:1057px" width="9" height="6" viewBox="0 0 9 6"><path d="M0 5.500h9L4.500 .5z" fill="#fff"/></svg>
<svg class="abs" style="left:1777px;top:1052px" width="18" height="16" viewBox="0 0 18 16"><rect x="1.500" y="1" width="1.600" height="14" fill="#fff"/><path d="M3.500 2q3-1.500 5 0t5 .8l-2 3 1 3q-3 1-5-.500t-4 .3z" fill="#fff"/></svg>
<svg class="abs" style="left:1802px;top:1054px" width="17" height="13" viewBox="0 0 17 13"><rect x="0" y="10" width="2" height="2.500" fill="#fff"/><rect x="3" y="8.500" width="2.200" height="4" fill="#fff"/><rect x="6.200" y="6" width="2.200" height="6.500" fill="#fff"/><rect x="9.400" y="3.500" width="2.200" height="9" fill="#fff"/><rect x="12.600" y=".5" width="2.400" height="12" fill="#fff"/></svg>
<div class="abs" style="left:1829px;top:1045px;width:72px;text-align:center;font-size:11.3px;line-height:17px;color:#fff;white-space:nowrap">13:50<br>2019-08-07</div>
<div class="abs" style="left:1906px;top:1041px;width:14px;height:39px;border:1px solid #7aa8a0;background:linear-gradient(rgba(255,255,255,.25),rgba(255,255,255,.05) 50%,rgba(255,255,255,.15))"></div></div></body></html>
